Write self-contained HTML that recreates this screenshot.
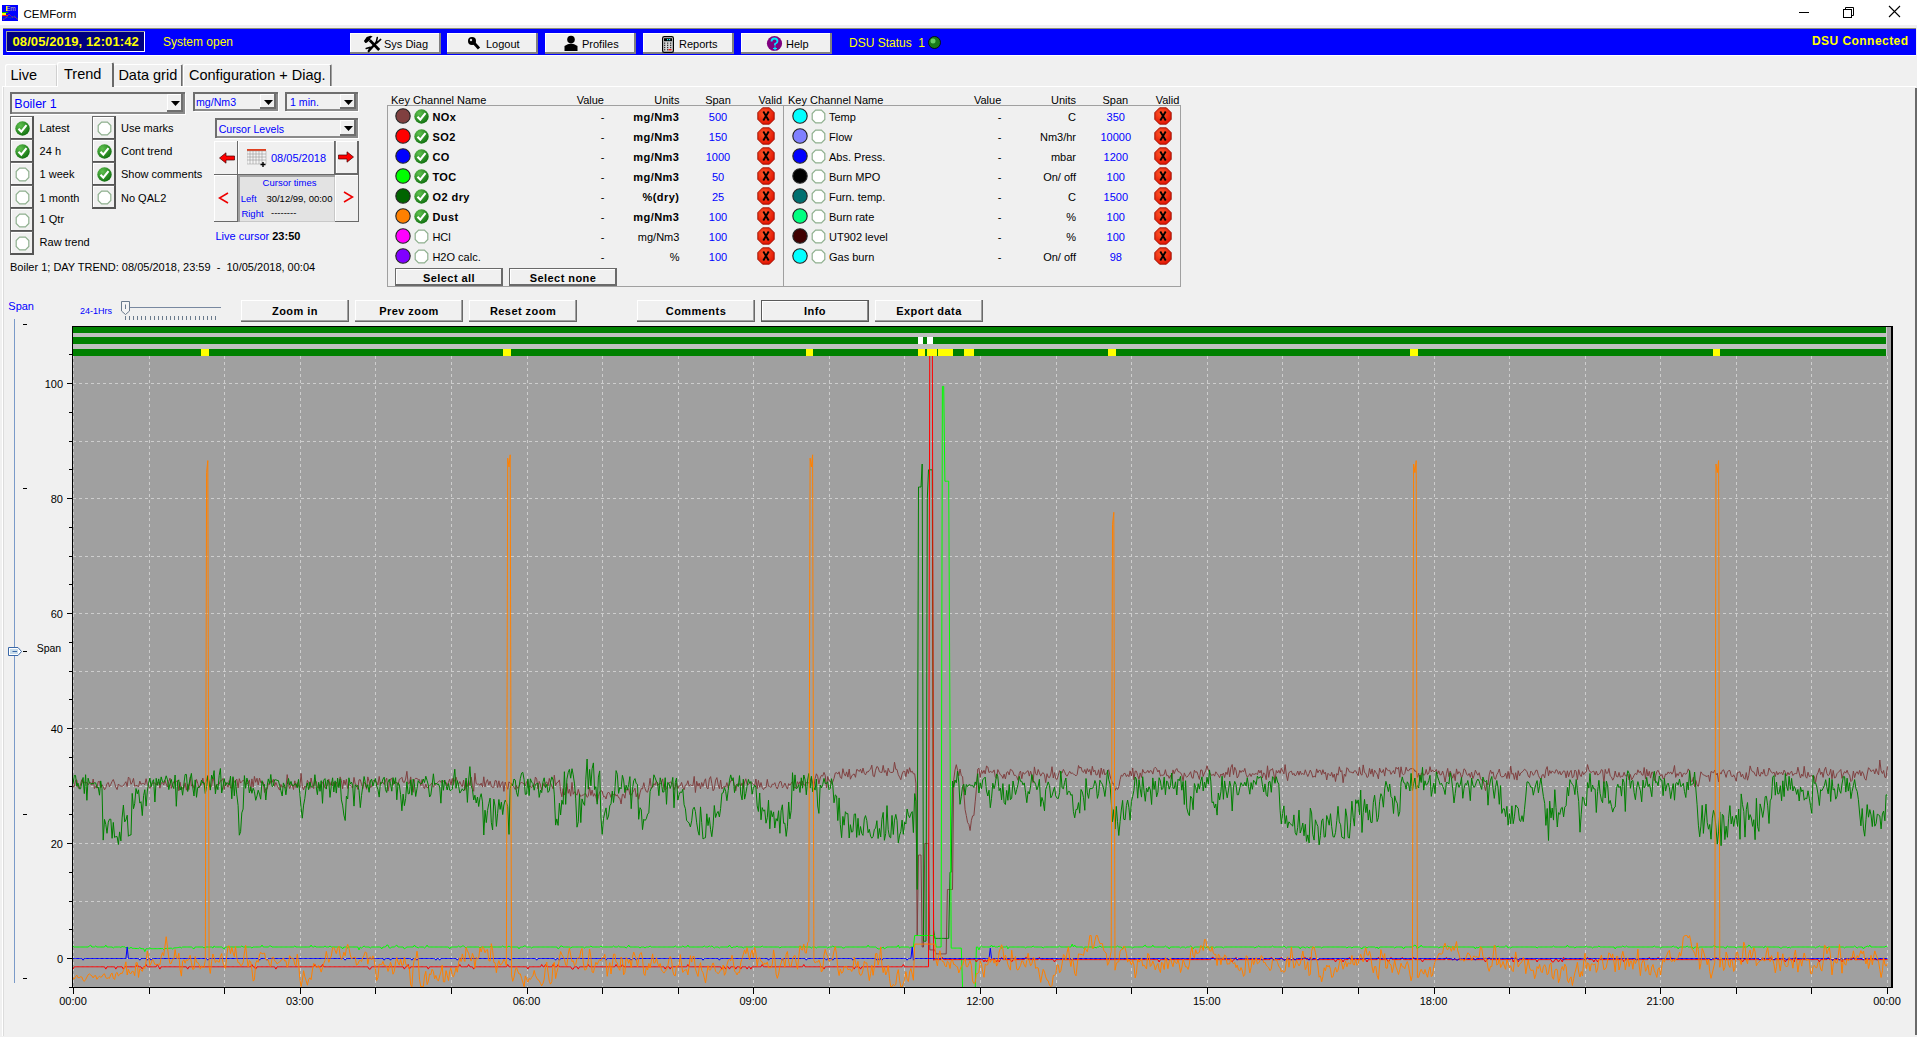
<!DOCTYPE html><html><head><meta charset="utf-8"><style>
html,body{margin:0;padding:0;}
body{width:1917px;height:1037px;overflow:hidden;position:relative;background:#f0f0f0;font-family:"Liberation Sans", sans-serif;}
body>div{position:absolute;}
.t{white-space:nowrap;line-height:1;}
svg{display:block;}
</style></head><body>
<div style="left:0px;top:0px;width:1917px;height:25px;background:#fff;"></div><svg style="position:absolute;left:2px;top:5px" width="16" height="16" viewBox="0 0 16 16">
<rect x="0" y="0" width="16" height="16" fill="#0000ff"/>
<text x="4" y="6" font-size="6.5" font-family="Liberation Sans" fill="#c8c0a0">Em</text><rect x="4" y="1" width="1.2" height="5" fill="#ffff00"/>
<rect x="0" y="7" width="6" height="1" fill="#00c000"/><rect x="0" y="8" width="4" height="2" fill="#ffff00"/><rect x="0" y="10" width="6" height="1.2" fill="#ff2020"/>
<path d="M1 15 L4 13 L7 9 L10 12 L13 12 L16 15" stroke="#d02060" stroke-width="0.9" fill="none" stroke-dasharray="1.2,0.6"/>
<path d="M1 14 L5 12 L9 13 L13 11 L16 14" stroke="#20a040" stroke-width="0.8" fill="none" stroke-dasharray="1,1"/>
</svg><div class="t" style="left:23.5px;top:8.18px;font-size:11.6px;color:#000;">CEMForm</div><div style="left:1799px;top:12px;width:10px;height:1px;background:#000;"></div><svg style="position:absolute;left:1840px;top:4px" width="18" height="16" viewBox="0 0 18 16">
<rect x="3.5" y="5.5" width="8" height="8" fill="none" stroke="#000"/>
<path d="M5.5 5.5 V3.5 H13.5 V11.5 H11.5" fill="none" stroke="#000"/></svg><svg style="position:absolute;left:1886px;top:4px" width="18" height="16" viewBox="0 0 18 16">
<path d="M3 2 L14 13 M14 2 L3 13" stroke="#000" stroke-width="1.1"/></svg><div style="left:3px;top:28px;width:1913px;height:27px;background:#0000ff;box-shadow:inset 0 1px #8a8a7a;"></div><div style="left:3px;top:55px;width:1913px;height:1px;background:#fff;"></div><div style="left:6px;top:31px;width:139px;height:21px;background:#000080;box-shadow:inset 1px 1px #a0a0a0, inset -1px -1px #fff;"></div><div class="t" style="left:12.5px;top:34.80px;font-size:13px;color:#ffff00;font-weight:bold;letter-spacing:0.45px;letter-spacing:0.1px;">08/05/2019, 12:01:42</div><div class="t" style="left:163px;top:35.84px;font-size:12px;color:#ffff00;">System open</div><div style="left:350px;top:33px;width:91px;height:21px;background:#f0f0f0;box-shadow:inset -2px -2px #808080, inset 1px 1px #fff;"></div><div style="left:447px;top:33px;width:91px;height:21px;background:#f0f0f0;box-shadow:inset -2px -2px #808080, inset 1px 1px #fff;"></div><div style="left:545px;top:33px;width:91px;height:21px;background:#f0f0f0;box-shadow:inset -2px -2px #808080, inset 1px 1px #fff;"></div><div style="left:643px;top:33px;width:91px;height:21px;background:#f0f0f0;box-shadow:inset -2px -2px #808080, inset 1px 1px #fff;"></div><div style="left:741px;top:33px;width:91px;height:21px;background:#f0f0f0;box-shadow:inset -2px -2px #808080, inset 1px 1px #fff;"></div><div class="t" style="left:384px;top:38.69px;font-size:11px;color:#000;">Sys Diag</div><div class="t" style="left:486px;top:38.69px;font-size:11px;color:#000;">Logout</div><div class="t" style="left:582px;top:38.69px;font-size:11px;color:#000;">Profiles</div><div class="t" style="left:679px;top:38.69px;font-size:11px;color:#000;">Reports</div><div class="t" style="left:786px;top:38.69px;font-size:11px;color:#000;">Help</div><svg style="position:absolute;left:360px;top:33px" width="25" height="21" viewBox="0 0 25 21">
<path d="M3.9 8.1 L6.7 4.1 L10.5 2.8 L12.6 3.4 L10.4 5.3 L10.3 6.8 L6.7 9.7 L5.3 9.9 Z" fill="#000"/>
<path d="M9.8 7.3 L19.2 16.9" stroke="#000" stroke-width="2.8"/>
<path d="M8.4 18.2 L17.6 8.2" stroke="#000" stroke-width="2.4"/>
<path d="M16.3 9.2 L17.3 4.5 M17.2 9.6 L20.7 6.4 M6.2 15.5 L10.2 14.2 M8.4 18.6 L10.8 14.6" stroke="#000" stroke-width="1.5" stroke-linecap="round"/>
</svg><svg style="position:absolute;left:467px;top:36px" width="14" height="15" viewBox="0 0 14 15">
<circle cx="5" cy="5" r="4" fill="#000"/><circle cx="4" cy="4" r="1.2" fill="#ddd"/>
<path d="M7 7 L12 12.5" stroke="#000" stroke-width="3"/></svg><svg style="position:absolute;left:564px;top:35px" width="14" height="16" viewBox="0 0 14 16">
<circle cx="7" cy="4.5" r="3.8" fill="#000"/><path d="M0.5 16 V11 Q7 6 13.5 11 V16 Z" fill="#000"/></svg><svg style="position:absolute;left:662px;top:36px" width="12" height="17" viewBox="0 0 12 17">
<rect x="0.6" y="0.6" width="10.8" height="15.8" rx="1.6" fill="#d8d8d8" stroke="#000" stroke-width="1.2"/>
<rect x="2" y="2.2" width="8" height="3" fill="#000"/><rect x="5" y="3" width="1.2" height="1.2" fill="#0ff"/><rect x="7" y="3" width="1.2" height="1.2" fill="#0ff"/>
<g fill="#333"><rect x="2" y="6.5" width="1.3" height="1.3"/><rect x="5" y="6.5" width="1.3" height="1.3"/><rect x="8" y="6.5" width="1.3" height="1.3"/>
<rect x="2" y="8.7" width="1.3" height="1.3"/><rect x="5" y="8.7" width="1.3" height="1.3"/><rect x="8" y="8.7" width="1.3" height="1.3"/>
<rect x="2" y="10.9" width="1.3" height="1.3"/><rect x="5" y="10.9" width="1.3" height="1.3"/><rect x="8" y="10.9" width="1.3" height="1.3"/>
<rect x="2" y="13.1" width="1.3" height="1.3"/><rect x="5" y="13.1" width="1.3" height="1.3"/></g><rect x="6.5" y="13.1" width="3" height="1.3" fill="#e00"/></svg><svg style="position:absolute;left:766px;top:35px" width="17" height="17" viewBox="0 0 17 17">
<circle cx="8.5" cy="8.5" r="7.6" fill="#800080"/>
<path d="M5.5 6.5 Q5.5 3.5 8.5 3.5 Q11.5 3.5 11.5 6.2 Q11.5 8 9 9 V10.5" stroke="#00e8ff" stroke-width="1.8" fill="none"/>
<path d="M9 11.5 V15.5 M7 13.5 H11" stroke="#00e8ff" stroke-width="1.2"/></svg><div class="t" style="left:849px;top:36.84px;font-size:12px;color:#ffff00;">DSU Status &nbsp;1</div><svg style="position:absolute;left:928px;top:36px" width="13" height="13" viewBox="0 0 13 13">
<circle cx="6.5" cy="6.5" r="6" fill="#1a7a1a" stroke="#000" stroke-width="0.8"/><circle cx="5" cy="5" r="2.5" fill="#6c6"/></svg><div class="t" style="right:8.5px;text-align:right;top:35.34px;font-size:12px;color:#ffff00;font-weight:bold;letter-spacing:0.45px;">DSU Connected</div><div style="left:2px;top:86px;width:1914px;height:950px;background:#f0f0f0;box-shadow:inset 1px 1px #fff, inset 2px 0 #dcdcdc;"></div><div style="left:5px;top:64px;width:52px;height:22px;background:#f0f0f0;box-shadow:inset 1px 1px #fff, inset -1px 0 #d0d0d0;border-radius:2px 2px 0 0;"></div><div class="t" style="left:10.4px;top:68.33px;font-size:14.5px;color:#000;">Live</div><div style="left:113px;top:64px;width:70px;height:22px;background:#f0f0f0;box-shadow:inset 1px 1px #fff, inset -1px 0 #a0a0a0, inset -2px 0 #696969;border-radius:2px 2px 0 0;"></div><div class="t" style="left:118.4px;top:68.33px;font-size:14.5px;color:#000;">Data grid</div><div style="left:183px;top:64px;width:149px;height:22px;background:#f0f0f0;box-shadow:inset 1px 1px #fff, inset -1px 0 #a0a0a0, inset -2px 0 #696969;border-radius:2px 2px 0 0;"></div><div class="t" style="left:189px;top:68.33px;font-size:14.5px;color:#000;">Configuration + Diag.</div><div style="left:57px;top:62px;width:57px;height:25px;background:#f0f0f0;box-shadow:inset 1px 1px #fff, inset -2px 0 #696969;border-radius:2px 2px 0 0;"></div><div class="t" style="left:64px;top:66.53px;font-size:14.5px;color:#000;">Trend</div><div style="left:10px;top:92px;width:175px;height:22px;background:#f0f0f0;box-shadow:inset 2px 2px #6e6e6e, inset -2px -2px #8a8a8a, 1px 1px #fff;"></div><div style="left:167px;top:94px;width:16px;height:18px;background:#f0f0f0;box-shadow:inset -2px -2px #6e6e6e, inset 1px 1px #fff;"></div><svg style="position:absolute;left:170.5px;top:101.0px" width="9" height="5"><path d="M0 0 H9 L4.5 5 Z" fill="#000"/></svg><div class="t" style="left:14.3px;top:97.62px;font-size:12.5px;color:#0000ff;">Boiler 1</div><div style="left:193px;top:92px;width:85px;height:19px;background:#f0f0f0;box-shadow:inset 2px 2px #6e6e6e, inset -2px -2px #8a8a8a, 1px 1px #fff;"></div><div style="left:260px;top:94px;width:16px;height:15px;background:#f0f0f0;box-shadow:inset -2px -2px #6e6e6e, inset 1px 1px #fff;"></div><svg style="position:absolute;left:263.5px;top:99.5px" width="9" height="5"><path d="M0 0 H9 L4.5 5 Z" fill="#000"/></svg><div class="t" style="left:196px;top:96.83px;font-size:10.6px;color:#0000ff;">mg/Nm3</div><div style="left:285px;top:92px;width:73px;height:19px;background:#f0f0f0;box-shadow:inset 2px 2px #6e6e6e, inset -2px -2px #8a8a8a, 1px 1px #fff;"></div><div style="left:340px;top:94px;width:16px;height:15px;background:#f0f0f0;box-shadow:inset -2px -2px #6e6e6e, inset 1px 1px #fff;"></div><svg style="position:absolute;left:343.5px;top:99.5px" width="9" height="5"><path d="M0 0 H9 L4.5 5 Z" fill="#000"/></svg><div class="t" style="left:290px;top:96.83px;font-size:10.6px;color:#0000ff;">1 min.</div><div style="left:215px;top:118px;width:143px;height:20px;background:#f0f0f0;box-shadow:inset 2px 2px #6e6e6e, inset -2px -2px #8a8a8a, 1px 1px #fff;"></div><div style="left:340px;top:120px;width:16px;height:16px;background:#f0f0f0;box-shadow:inset -2px -2px #6e6e6e, inset 1px 1px #fff;"></div><svg style="position:absolute;left:343.5px;top:126.0px" width="9" height="5"><path d="M0 0 H9 L4.5 5 Z" fill="#000"/></svg><div class="t" style="left:218.7px;top:123.83px;font-size:10.6px;color:#0000ff;">Cursor Levels</div><div style="left:10px;top:116px;width:24px;height:24px;box-sizing:border-box;border-top:1px solid #6a6a6a;border-left:1px solid #6a6a6a;border-right:2px solid #555;border-bottom:2px solid #555;box-shadow:inset 1px 1px #fff;"></div><div style="left:14.5px;top:120.5px;width:15px;height:15px"><svg width="15" height="15" viewBox="0 0 15 15"><defs><radialGradient id="g1" cx="0.35" cy="0.3" r="0.8"><stop offset="0" stop-color="#5fc04f"/><stop offset="1" stop-color="#0a6a0a"/></radialGradient></defs><circle cx="7.5" cy="7.5" r="7.2" fill="url(#g1)"/><path d="M3.5 7.8 L6.3 10.6 L11.5 4.2" stroke="#fff" stroke-width="2.1" fill="none"/></svg></div><div class="t" style="left:39.6px;top:122.69px;font-size:11px;color:#000;">Latest</div><div style="left:10px;top:139px;width:24px;height:24px;box-sizing:border-box;border-top:1px solid #6a6a6a;border-left:1px solid #6a6a6a;border-right:2px solid #555;border-bottom:2px solid #555;box-shadow:inset 1px 1px #fff;"></div><div style="left:14.5px;top:143.5px;width:15px;height:15px"><svg width="15" height="15" viewBox="0 0 15 15"><defs><radialGradient id="g2" cx="0.35" cy="0.3" r="0.8"><stop offset="0" stop-color="#5fc04f"/><stop offset="1" stop-color="#0a6a0a"/></radialGradient></defs><circle cx="7.5" cy="7.5" r="7.2" fill="url(#g2)"/><path d="M3.5 7.8 L6.3 10.6 L11.5 4.2" stroke="#fff" stroke-width="2.1" fill="none"/></svg></div><div class="t" style="left:39.6px;top:146.49px;font-size:11px;color:#000;">24 h</div><div style="left:10px;top:162px;width:24px;height:24px;box-sizing:border-box;border-top:1px solid #6a6a6a;border-left:1px solid #6a6a6a;border-right:2px solid #555;border-bottom:2px solid #555;box-shadow:inset 1px 1px #fff;"></div><div style="left:14.5px;top:166.5px;width:15px;height:15px"><svg width="15" height="15" viewBox="0 0 15 15"><path d="M4.6 1.2 H10.4 L13.8 4.6 V10.4 L10.4 13.8 H4.6 L1.2 10.4 V4.6 Z" fill="#fff" stroke="#8fb08f" stroke-width="1.2"/></svg></div><div class="t" style="left:39.6px;top:169.19px;font-size:11px;color:#000;">1 week</div><div style="left:10px;top:185px;width:24px;height:24px;box-sizing:border-box;border-top:1px solid #6a6a6a;border-left:1px solid #6a6a6a;border-right:2px solid #555;border-bottom:2px solid #555;box-shadow:inset 1px 1px #fff;"></div><div style="left:14.5px;top:189.5px;width:15px;height:15px"><svg width="15" height="15" viewBox="0 0 15 15"><path d="M4.6 1.2 H10.4 L13.8 4.6 V10.4 L10.4 13.8 H4.6 L1.2 10.4 V4.6 Z" fill="#fff" stroke="#8fb08f" stroke-width="1.2"/></svg></div><div class="t" style="left:39.6px;top:192.69px;font-size:11px;color:#000;">1 month</div><div style="left:10px;top:208px;width:24px;height:24px;box-sizing:border-box;border-top:1px solid #6a6a6a;border-left:1px solid #6a6a6a;border-right:2px solid #555;border-bottom:2px solid #555;box-shadow:inset 1px 1px #fff;"></div><div style="left:14.5px;top:212.5px;width:15px;height:15px"><svg width="15" height="15" viewBox="0 0 15 15"><path d="M4.6 1.2 H10.4 L13.8 4.6 V10.4 L10.4 13.8 H4.6 L1.2 10.4 V4.6 Z" fill="#fff" stroke="#8fb08f" stroke-width="1.2"/></svg></div><div class="t" style="left:39.6px;top:213.69px;font-size:11px;color:#000;">1 Qtr</div><div style="left:10px;top:231px;width:24px;height:24px;box-sizing:border-box;border-top:1px solid #6a6a6a;border-left:1px solid #6a6a6a;border-right:2px solid #555;border-bottom:2px solid #555;box-shadow:inset 1px 1px #fff;"></div><div style="left:14.5px;top:235.5px;width:15px;height:15px"><svg width="15" height="15" viewBox="0 0 15 15"><path d="M4.6 1.2 H10.4 L13.8 4.6 V10.4 L10.4 13.8 H4.6 L1.2 10.4 V4.6 Z" fill="#fff" stroke="#8fb08f" stroke-width="1.2"/></svg></div><div class="t" style="left:39.6px;top:237.39px;font-size:11px;color:#000;">Raw trend</div><div style="left:92px;top:116px;width:24px;height:24px;box-sizing:border-box;border-top:1px solid #6a6a6a;border-left:1px solid #6a6a6a;border-right:2px solid #555;border-bottom:2px solid #555;box-shadow:inset 1px 1px #fff;"></div><div style="left:96.5px;top:120.5px;width:15px;height:15px"><svg width="15" height="15" viewBox="0 0 15 15"><path d="M4.6 1.2 H10.4 L13.8 4.6 V10.4 L10.4 13.8 H4.6 L1.2 10.4 V4.6 Z" fill="#fff" stroke="#8fb08f" stroke-width="1.2"/></svg></div><div class="t" style="left:121px;top:122.69px;font-size:11px;color:#000;">Use marks</div><div style="left:92px;top:139px;width:24px;height:24px;box-sizing:border-box;border-top:1px solid #6a6a6a;border-left:1px solid #6a6a6a;border-right:2px solid #555;border-bottom:2px solid #555;box-shadow:inset 1px 1px #fff;"></div><div style="left:96.5px;top:143.5px;width:15px;height:15px"><svg width="15" height="15" viewBox="0 0 15 15"><defs><radialGradient id="g8" cx="0.35" cy="0.3" r="0.8"><stop offset="0" stop-color="#5fc04f"/><stop offset="1" stop-color="#0a6a0a"/></radialGradient></defs><circle cx="7.5" cy="7.5" r="7.2" fill="url(#g8)"/><path d="M3.5 7.8 L6.3 10.6 L11.5 4.2" stroke="#fff" stroke-width="2.1" fill="none"/></svg></div><div class="t" style="left:121px;top:146.49px;font-size:11px;color:#000;">Cont trend</div><div style="left:92px;top:162px;width:24px;height:24px;box-sizing:border-box;border-top:1px solid #6a6a6a;border-left:1px solid #6a6a6a;border-right:2px solid #555;border-bottom:2px solid #555;box-shadow:inset 1px 1px #fff;"></div><div style="left:96.5px;top:166.5px;width:15px;height:15px"><svg width="15" height="15" viewBox="0 0 15 15"><defs><radialGradient id="g9" cx="0.35" cy="0.3" r="0.8"><stop offset="0" stop-color="#5fc04f"/><stop offset="1" stop-color="#0a6a0a"/></radialGradient></defs><circle cx="7.5" cy="7.5" r="7.2" fill="url(#g9)"/><path d="M3.5 7.8 L6.3 10.6 L11.5 4.2" stroke="#fff" stroke-width="2.1" fill="none"/></svg></div><div class="t" style="left:121px;top:169.19px;font-size:11px;color:#000;">Show comments</div><div style="left:92px;top:185px;width:24px;height:24px;box-sizing:border-box;border-top:1px solid #6a6a6a;border-left:1px solid #6a6a6a;border-right:2px solid #555;border-bottom:2px solid #555;box-shadow:inset 1px 1px #fff;"></div><div style="left:96.5px;top:189.5px;width:15px;height:15px"><svg width="15" height="15" viewBox="0 0 15 15"><path d="M4.6 1.2 H10.4 L13.8 4.6 V10.4 L10.4 13.8 H4.6 L1.2 10.4 V4.6 Z" fill="#fff" stroke="#8fb08f" stroke-width="1.2"/></svg></div><div class="t" style="left:121px;top:192.69px;font-size:11px;color:#000;">No QAL2</div><div style="left:214px;top:141px;width:24px;height:34px;background:#f0f0f0;box-shadow:inset -1px -1px #696969, inset 1px 1px #fff;"></div><div style="left:238px;top:141px;width:97px;height:34px;background:#f0f0f0;box-shadow:inset -1px -1px #696969, inset 1px 1px #fff;"></div><div style="left:335px;top:141px;width:24px;height:34px;background:#f0f0f0;box-shadow:inset -2px -2px #696969, inset 1px 0 #808080, inset 2px 1px #fff;"></div><div style="left:214px;top:175px;width:24px;height:47px;background:#f0f0f0;box-shadow:inset -1px -1px #696969, inset 1px 1px #fff;"></div><div style="left:238px;top:175px;width:97px;height:47px;background:#e3e3e3;box-shadow:inset 2px 2px #a0a0a0, inset -1px -1px #c8c8c8;"></div><div style="left:335px;top:175px;width:24px;height:47px;background:#f0f0f0;box-shadow:inset -1px -1px #696969, inset 1px 1px #fff;"></div><svg style="position:absolute;left:219px;top:152px" width="16" height="12" viewBox="0 0 16 12"><path d="M0.5 6 L7 0.8 V4 H15.5 V8 H7 V11.2 Z" fill="#f00" stroke="#400" stroke-width="0.7"/></svg><svg style="position:absolute;left:338px;top:151px" width="16" height="12" viewBox="0 0 16 12"><path d="M15.5 6 L9 0.8 V4 H0.5 V8 H9 V11.2 Z" fill="#f00" stroke="#400" stroke-width="0.7"/></svg><svg style="position:absolute;left:218px;top:192px" width="11" height="12" viewBox="0 0 11 12"><path d="M10 1 L1.5 6 L10 11" fill="none" stroke="#e00" stroke-width="1.6"/></svg><svg style="position:absolute;left:343px;top:191px" width="11" height="12" viewBox="0 0 11 12"><path d="M1 1 L9.5 6 L1 11" fill="none" stroke="#e00" stroke-width="1.6"/></svg><svg style="position:absolute;left:247px;top:149px" width="20" height="18" viewBox="0 0 20 18">
<rect x="0" y="0" width="19" height="2" fill="#e04020"/>
<rect x="0" y="2" width="19" height="13" fill="#f4f4f4" stroke="#999" stroke-width="0.5"/>
<g stroke="#999" stroke-width="0.6"><path d="M0 5H19M0 8H19M0 11H19M3 2V15M6 2V15M9 2V15M12 2V15M15 2V15"/></g>
<path d="M16 13 V18 M13.5 15.5 H18.5" stroke="#000" stroke-width="1.4"/></svg><div class="t" style="left:271px;top:153.19px;font-size:11px;color:#0000ff;">08/05/2018</div><div class="t" style="left:-10.5px;width:600px;text-align:center;top:177.96px;font-size:9.5px;color:#0000ff;">Cursor times</div><div class="t" style="left:240.8px;top:193.96px;font-size:9.5px;color:#0000ff;">Left</div><div class="t" style="left:266.4px;top:193.96px;font-size:9.5px;color:#000;">30/12/99, 00:00</div><div class="t" style="left:241.4px;top:208.96px;font-size:9.5px;color:#0000ff;">Right</div><div class="t" style="left:271px;top:207.96px;font-size:9.5px;color:#000;">--------</div><div class="t" style="left:215.4px;top:231.09px;font-size:11px;color:#0000ff;">Live cursor <b style="color:#000">23:50</b></div><div class="t" style="left:10px;top:262.39px;font-size:11px;color:#000;">Boiler 1; DAY TREND: 08/05/2018, 23:59 &nbsp;- &nbsp;10/05/2018, 00:04</div><div style="left:387px;top:105px;width:397px;height:182px;box-shadow:inset 1px 1px #a0a0a0, inset -1px -1px #a0a0a0;"></div><div style="left:783px;top:105px;width:398px;height:182px;box-shadow:inset 1px 1px #a0a0a0, inset -1px -1px #a0a0a0;"></div><div class="t" style="left:391px;top:94.69px;font-size:11px;color:#000;">Key Channel Name</div><div class="t" style="right:1313px;text-align:right;top:94.69px;font-size:11px;color:#000;">Value</div><div class="t" style="right:1237.6px;text-align:right;top:94.69px;font-size:11px;color:#000;">Units</div><div class="t" style="left:418px;width:600px;text-align:center;top:94.69px;font-size:11px;color:#000;">Span</div><div class="t" style="left:758.5px;top:94.69px;font-size:11px;color:#000;">Valid</div><svg style="position:absolute;left:395.3px;top:108px" width="16" height="16"><circle cx="8" cy="8" r="7.2" fill="#804040" stroke="#222" stroke-width="1.1"/></svg><div style="left:414px;top:108.5px;width:15px;height:15px"><svg width="15" height="15" viewBox="0 0 15 15"><defs><radialGradient id="g11" cx="0.35" cy="0.3" r="0.8"><stop offset="0" stop-color="#5fc04f"/><stop offset="1" stop-color="#0a6a0a"/></radialGradient></defs><circle cx="7.5" cy="7.5" r="7.2" fill="url(#g11)"/><path d="M3.5 7.8 L6.3 10.6 L11.5 4.2" stroke="#fff" stroke-width="2.1" fill="none"/></svg></div><div class="t" style="left:432.4px;top:111.69px;font-size:11px;color:#000;font-weight:bold;letter-spacing:0.45px;">NOx</div><div class="t" style="left:302.5px;width:600px;text-align:center;top:111.69px;font-size:11px;color:#000;">-</div><div class="t" style="right:1237.6px;text-align:right;top:111.69px;font-size:11px;color:#000;font-weight:bold;letter-spacing:0.45px;">mg/Nm3</div><div class="t" style="left:418px;width:600px;text-align:center;top:111.69px;font-size:11px;color:#0000ff;">500</div><div style="left:757px;top:107px;width:18px;height:18px"><svg width="18" height="18" viewBox="0 0 18 18"><defs><radialGradient id="rv" cx="0.4" cy="0.35" r="0.7"><stop offset="0" stop-color="#ff5a2a"/><stop offset="1" stop-color="#e01000"/></radialGradient></defs><path d="M5.6 0.8 H12.4 L17.2 5.6 V12.4 L12.4 17.2 H5.6 L0.8 12.4 V5.6 Z" fill="url(#rv)" stroke="#9a1000" stroke-width="0.9"/><path d="M6.3 4.5 L11.7 13.5 M11.7 4.5 L6.3 13.5" stroke="#000" stroke-width="1.9"/></svg></div><svg style="position:absolute;left:395.3px;top:128px" width="16" height="16"><circle cx="8" cy="8" r="7.2" fill="#ff0000" stroke="#222" stroke-width="1.1"/></svg><div style="left:414px;top:128.5px;width:15px;height:15px"><svg width="15" height="15" viewBox="0 0 15 15"><defs><radialGradient id="g12" cx="0.35" cy="0.3" r="0.8"><stop offset="0" stop-color="#5fc04f"/><stop offset="1" stop-color="#0a6a0a"/></radialGradient></defs><circle cx="7.5" cy="7.5" r="7.2" fill="url(#g12)"/><path d="M3.5 7.8 L6.3 10.6 L11.5 4.2" stroke="#fff" stroke-width="2.1" fill="none"/></svg></div><div class="t" style="left:432.4px;top:131.69px;font-size:11px;color:#000;font-weight:bold;letter-spacing:0.45px;">SO2</div><div class="t" style="left:302.5px;width:600px;text-align:center;top:131.69px;font-size:11px;color:#000;">-</div><div class="t" style="right:1237.6px;text-align:right;top:131.69px;font-size:11px;color:#000;font-weight:bold;letter-spacing:0.45px;">mg/Nm3</div><div class="t" style="left:418px;width:600px;text-align:center;top:131.69px;font-size:11px;color:#0000ff;">150</div><div style="left:757px;top:127px;width:18px;height:18px"><svg width="18" height="18" viewBox="0 0 18 18"><defs><radialGradient id="rv" cx="0.4" cy="0.35" r="0.7"><stop offset="0" stop-color="#ff5a2a"/><stop offset="1" stop-color="#e01000"/></radialGradient></defs><path d="M5.6 0.8 H12.4 L17.2 5.6 V12.4 L12.4 17.2 H5.6 L0.8 12.4 V5.6 Z" fill="url(#rv)" stroke="#9a1000" stroke-width="0.9"/><path d="M6.3 4.5 L11.7 13.5 M11.7 4.5 L6.3 13.5" stroke="#000" stroke-width="1.9"/></svg></div><svg style="position:absolute;left:395.3px;top:148px" width="16" height="16"><circle cx="8" cy="8" r="7.2" fill="#0000ff" stroke="#222" stroke-width="1.1"/></svg><div style="left:414px;top:148.5px;width:15px;height:15px"><svg width="15" height="15" viewBox="0 0 15 15"><defs><radialGradient id="g13" cx="0.35" cy="0.3" r="0.8"><stop offset="0" stop-color="#5fc04f"/><stop offset="1" stop-color="#0a6a0a"/></radialGradient></defs><circle cx="7.5" cy="7.5" r="7.2" fill="url(#g13)"/><path d="M3.5 7.8 L6.3 10.6 L11.5 4.2" stroke="#fff" stroke-width="2.1" fill="none"/></svg></div><div class="t" style="left:432.4px;top:151.69px;font-size:11px;color:#000;font-weight:bold;letter-spacing:0.45px;">CO</div><div class="t" style="left:302.5px;width:600px;text-align:center;top:151.69px;font-size:11px;color:#000;">-</div><div class="t" style="right:1237.6px;text-align:right;top:151.69px;font-size:11px;color:#000;font-weight:bold;letter-spacing:0.45px;">mg/Nm3</div><div class="t" style="left:418px;width:600px;text-align:center;top:151.69px;font-size:11px;color:#0000ff;">1000</div><div style="left:757px;top:147px;width:18px;height:18px"><svg width="18" height="18" viewBox="0 0 18 18"><defs><radialGradient id="rv" cx="0.4" cy="0.35" r="0.7"><stop offset="0" stop-color="#ff5a2a"/><stop offset="1" stop-color="#e01000"/></radialGradient></defs><path d="M5.6 0.8 H12.4 L17.2 5.6 V12.4 L12.4 17.2 H5.6 L0.8 12.4 V5.6 Z" fill="url(#rv)" stroke="#9a1000" stroke-width="0.9"/><path d="M6.3 4.5 L11.7 13.5 M11.7 4.5 L6.3 13.5" stroke="#000" stroke-width="1.9"/></svg></div><svg style="position:absolute;left:395.3px;top:168px" width="16" height="16"><circle cx="8" cy="8" r="7.2" fill="#00ff00" stroke="#222" stroke-width="1.1"/></svg><div style="left:414px;top:168.5px;width:15px;height:15px"><svg width="15" height="15" viewBox="0 0 15 15"><defs><radialGradient id="g14" cx="0.35" cy="0.3" r="0.8"><stop offset="0" stop-color="#5fc04f"/><stop offset="1" stop-color="#0a6a0a"/></radialGradient></defs><circle cx="7.5" cy="7.5" r="7.2" fill="url(#g14)"/><path d="M3.5 7.8 L6.3 10.6 L11.5 4.2" stroke="#fff" stroke-width="2.1" fill="none"/></svg></div><div class="t" style="left:432.4px;top:171.69px;font-size:11px;color:#000;font-weight:bold;letter-spacing:0.45px;">TOC</div><div class="t" style="left:302.5px;width:600px;text-align:center;top:171.69px;font-size:11px;color:#000;">-</div><div class="t" style="right:1237.6px;text-align:right;top:171.69px;font-size:11px;color:#000;font-weight:bold;letter-spacing:0.45px;">mg/Nm3</div><div class="t" style="left:418px;width:600px;text-align:center;top:171.69px;font-size:11px;color:#0000ff;">50</div><div style="left:757px;top:167px;width:18px;height:18px"><svg width="18" height="18" viewBox="0 0 18 18"><defs><radialGradient id="rv" cx="0.4" cy="0.35" r="0.7"><stop offset="0" stop-color="#ff5a2a"/><stop offset="1" stop-color="#e01000"/></radialGradient></defs><path d="M5.6 0.8 H12.4 L17.2 5.6 V12.4 L12.4 17.2 H5.6 L0.8 12.4 V5.6 Z" fill="url(#rv)" stroke="#9a1000" stroke-width="0.9"/><path d="M6.3 4.5 L11.7 13.5 M11.7 4.5 L6.3 13.5" stroke="#000" stroke-width="1.9"/></svg></div><svg style="position:absolute;left:395.3px;top:188px" width="16" height="16"><circle cx="8" cy="8" r="7.2" fill="#006400" stroke="#222" stroke-width="1.1"/></svg><div style="left:414px;top:188.5px;width:15px;height:15px"><svg width="15" height="15" viewBox="0 0 15 15"><defs><radialGradient id="g15" cx="0.35" cy="0.3" r="0.8"><stop offset="0" stop-color="#5fc04f"/><stop offset="1" stop-color="#0a6a0a"/></radialGradient></defs><circle cx="7.5" cy="7.5" r="7.2" fill="url(#g15)"/><path d="M3.5 7.8 L6.3 10.6 L11.5 4.2" stroke="#fff" stroke-width="2.1" fill="none"/></svg></div><div class="t" style="left:432.4px;top:191.69px;font-size:11px;color:#000;font-weight:bold;letter-spacing:0.45px;">O2 dry</div><div class="t" style="left:302.5px;width:600px;text-align:center;top:191.69px;font-size:11px;color:#000;">-</div><div class="t" style="right:1237.6px;text-align:right;top:191.69px;font-size:11px;color:#000;font-weight:bold;letter-spacing:0.45px;">%(dry)</div><div class="t" style="left:418px;width:600px;text-align:center;top:191.69px;font-size:11px;color:#0000ff;">25</div><div style="left:757px;top:187px;width:18px;height:18px"><svg width="18" height="18" viewBox="0 0 18 18"><defs><radialGradient id="rv" cx="0.4" cy="0.35" r="0.7"><stop offset="0" stop-color="#ff5a2a"/><stop offset="1" stop-color="#e01000"/></radialGradient></defs><path d="M5.6 0.8 H12.4 L17.2 5.6 V12.4 L12.4 17.2 H5.6 L0.8 12.4 V5.6 Z" fill="url(#rv)" stroke="#9a1000" stroke-width="0.9"/><path d="M6.3 4.5 L11.7 13.5 M11.7 4.5 L6.3 13.5" stroke="#000" stroke-width="1.9"/></svg></div><svg style="position:absolute;left:395.3px;top:208px" width="16" height="16"><circle cx="8" cy="8" r="7.2" fill="#ff8000" stroke="#222" stroke-width="1.1"/></svg><div style="left:414px;top:208.5px;width:15px;height:15px"><svg width="15" height="15" viewBox="0 0 15 15"><defs><radialGradient id="g16" cx="0.35" cy="0.3" r="0.8"><stop offset="0" stop-color="#5fc04f"/><stop offset="1" stop-color="#0a6a0a"/></radialGradient></defs><circle cx="7.5" cy="7.5" r="7.2" fill="url(#g16)"/><path d="M3.5 7.8 L6.3 10.6 L11.5 4.2" stroke="#fff" stroke-width="2.1" fill="none"/></svg></div><div class="t" style="left:432.4px;top:211.69px;font-size:11px;color:#000;font-weight:bold;letter-spacing:0.45px;">Dust</div><div class="t" style="left:302.5px;width:600px;text-align:center;top:211.69px;font-size:11px;color:#000;">-</div><div class="t" style="right:1237.6px;text-align:right;top:211.69px;font-size:11px;color:#000;font-weight:bold;letter-spacing:0.45px;">mg/Nm3</div><div class="t" style="left:418px;width:600px;text-align:center;top:211.69px;font-size:11px;color:#0000ff;">100</div><div style="left:757px;top:207px;width:18px;height:18px"><svg width="18" height="18" viewBox="0 0 18 18"><defs><radialGradient id="rv" cx="0.4" cy="0.35" r="0.7"><stop offset="0" stop-color="#ff5a2a"/><stop offset="1" stop-color="#e01000"/></radialGradient></defs><path d="M5.6 0.8 H12.4 L17.2 5.6 V12.4 L12.4 17.2 H5.6 L0.8 12.4 V5.6 Z" fill="url(#rv)" stroke="#9a1000" stroke-width="0.9"/><path d="M6.3 4.5 L11.7 13.5 M11.7 4.5 L6.3 13.5" stroke="#000" stroke-width="1.9"/></svg></div><svg style="position:absolute;left:395.3px;top:228px" width="16" height="16"><circle cx="8" cy="8" r="7.2" fill="#ff00ff" stroke="#222" stroke-width="1.1"/></svg><div style="left:414px;top:228.5px;width:15px;height:15px"><svg width="15" height="15" viewBox="0 0 15 15"><path d="M4.6 1.2 H10.4 L13.8 4.6 V10.4 L10.4 13.8 H4.6 L1.2 10.4 V4.6 Z" fill="#fff" stroke="#8fb08f" stroke-width="1.2"/></svg></div><div class="t" style="left:432.4px;top:231.69px;font-size:11px;color:#000;">HCl</div><div class="t" style="left:302.5px;width:600px;text-align:center;top:231.69px;font-size:11px;color:#000;">-</div><div class="t" style="right:1237.6px;text-align:right;top:231.69px;font-size:11px;color:#000;">mg/Nm3</div><div class="t" style="left:418px;width:600px;text-align:center;top:231.69px;font-size:11px;color:#0000ff;">100</div><div style="left:757px;top:227px;width:18px;height:18px"><svg width="18" height="18" viewBox="0 0 18 18"><defs><radialGradient id="rv" cx="0.4" cy="0.35" r="0.7"><stop offset="0" stop-color="#ff5a2a"/><stop offset="1" stop-color="#e01000"/></radialGradient></defs><path d="M5.6 0.8 H12.4 L17.2 5.6 V12.4 L12.4 17.2 H5.6 L0.8 12.4 V5.6 Z" fill="url(#rv)" stroke="#9a1000" stroke-width="0.9"/><path d="M6.3 4.5 L11.7 13.5 M11.7 4.5 L6.3 13.5" stroke="#000" stroke-width="1.9"/></svg></div><svg style="position:absolute;left:395.3px;top:248px" width="16" height="16"><circle cx="8" cy="8" r="7.2" fill="#8000ff" stroke="#222" stroke-width="1.1"/></svg><div style="left:414px;top:248.5px;width:15px;height:15px"><svg width="15" height="15" viewBox="0 0 15 15"><path d="M4.6 1.2 H10.4 L13.8 4.6 V10.4 L10.4 13.8 H4.6 L1.2 10.4 V4.6 Z" fill="#fff" stroke="#8fb08f" stroke-width="1.2"/></svg></div><div class="t" style="left:432.4px;top:251.69px;font-size:11px;color:#000;">H2O calc.</div><div class="t" style="left:302.5px;width:600px;text-align:center;top:251.69px;font-size:11px;color:#000;">-</div><div class="t" style="right:1237.6px;text-align:right;top:251.69px;font-size:11px;color:#000;">%</div><div class="t" style="left:418px;width:600px;text-align:center;top:251.69px;font-size:11px;color:#0000ff;">100</div><div style="left:757px;top:247px;width:18px;height:18px"><svg width="18" height="18" viewBox="0 0 18 18"><defs><radialGradient id="rv" cx="0.4" cy="0.35" r="0.7"><stop offset="0" stop-color="#ff5a2a"/><stop offset="1" stop-color="#e01000"/></radialGradient></defs><path d="M5.6 0.8 H12.4 L17.2 5.6 V12.4 L12.4 17.2 H5.6 L0.8 12.4 V5.6 Z" fill="url(#rv)" stroke="#9a1000" stroke-width="0.9"/><path d="M6.3 4.5 L11.7 13.5 M11.7 4.5 L6.3 13.5" stroke="#000" stroke-width="1.9"/></svg></div><div class="t" style="left:788px;top:94.69px;font-size:11px;color:#000;">Key Channel Name</div><div class="t" style="right:915.7px;text-align:right;top:94.69px;font-size:11px;color:#000;">Value</div><div class="t" style="right:841px;text-align:right;top:94.69px;font-size:11px;color:#000;">Units</div><div class="t" style="left:815.3px;width:600px;text-align:center;top:94.69px;font-size:11px;color:#000;">Span</div><div class="t" style="left:1155.7px;top:94.69px;font-size:11px;color:#000;">Valid</div><svg style="position:absolute;left:792.3px;top:108px" width="16" height="16"><circle cx="8" cy="8" r="7.2" fill="#00ffff" stroke="#222" stroke-width="1.1"/></svg><div style="left:811px;top:108.5px;width:15px;height:15px"><svg width="15" height="15" viewBox="0 0 15 15"><path d="M4.6 1.2 H10.4 L13.8 4.6 V10.4 L10.4 13.8 H4.6 L1.2 10.4 V4.6 Z" fill="#fff" stroke="#8fb08f" stroke-width="1.2"/></svg></div><div class="t" style="left:829px;top:111.69px;font-size:11px;color:#000;">Temp</div><div class="t" style="left:699.5px;width:600px;text-align:center;top:111.69px;font-size:11px;color:#000;">-</div><div class="t" style="right:841px;text-align:right;top:111.69px;font-size:11px;color:#000;">C</div><div class="t" style="left:815.8px;width:600px;text-align:center;top:111.69px;font-size:11px;color:#0000ff;">350</div><div style="left:1154px;top:107px;width:18px;height:18px"><svg width="18" height="18" viewBox="0 0 18 18"><defs><radialGradient id="rv" cx="0.4" cy="0.35" r="0.7"><stop offset="0" stop-color="#ff5a2a"/><stop offset="1" stop-color="#e01000"/></radialGradient></defs><path d="M5.6 0.8 H12.4 L17.2 5.6 V12.4 L12.4 17.2 H5.6 L0.8 12.4 V5.6 Z" fill="url(#rv)" stroke="#9a1000" stroke-width="0.9"/><path d="M6.3 4.5 L11.7 13.5 M11.7 4.5 L6.3 13.5" stroke="#000" stroke-width="1.9"/></svg></div><svg style="position:absolute;left:792.3px;top:128px" width="16" height="16"><circle cx="8" cy="8" r="7.2" fill="#8080ff" stroke="#222" stroke-width="1.1"/></svg><div style="left:811px;top:128.5px;width:15px;height:15px"><svg width="15" height="15" viewBox="0 0 15 15"><path d="M4.6 1.2 H10.4 L13.8 4.6 V10.4 L10.4 13.8 H4.6 L1.2 10.4 V4.6 Z" fill="#fff" stroke="#8fb08f" stroke-width="1.2"/></svg></div><div class="t" style="left:829px;top:131.69px;font-size:11px;color:#000;">Flow</div><div class="t" style="left:699.5px;width:600px;text-align:center;top:131.69px;font-size:11px;color:#000;">-</div><div class="t" style="right:841px;text-align:right;top:131.69px;font-size:11px;color:#000;">Nm3/hr</div><div class="t" style="left:815.8px;width:600px;text-align:center;top:131.69px;font-size:11px;color:#0000ff;">10000</div><div style="left:1154px;top:127px;width:18px;height:18px"><svg width="18" height="18" viewBox="0 0 18 18"><defs><radialGradient id="rv" cx="0.4" cy="0.35" r="0.7"><stop offset="0" stop-color="#ff5a2a"/><stop offset="1" stop-color="#e01000"/></radialGradient></defs><path d="M5.6 0.8 H12.4 L17.2 5.6 V12.4 L12.4 17.2 H5.6 L0.8 12.4 V5.6 Z" fill="url(#rv)" stroke="#9a1000" stroke-width="0.9"/><path d="M6.3 4.5 L11.7 13.5 M11.7 4.5 L6.3 13.5" stroke="#000" stroke-width="1.9"/></svg></div><svg style="position:absolute;left:792.3px;top:148px" width="16" height="16"><circle cx="8" cy="8" r="7.2" fill="#0000ff" stroke="#222" stroke-width="1.1"/></svg><div style="left:811px;top:148.5px;width:15px;height:15px"><svg width="15" height="15" viewBox="0 0 15 15"><path d="M4.6 1.2 H10.4 L13.8 4.6 V10.4 L10.4 13.8 H4.6 L1.2 10.4 V4.6 Z" fill="#fff" stroke="#8fb08f" stroke-width="1.2"/></svg></div><div class="t" style="left:829px;top:151.69px;font-size:11px;color:#000;">Abs. Press.</div><div class="t" style="left:699.5px;width:600px;text-align:center;top:151.69px;font-size:11px;color:#000;">-</div><div class="t" style="right:841px;text-align:right;top:151.69px;font-size:11px;color:#000;">mbar</div><div class="t" style="left:815.8px;width:600px;text-align:center;top:151.69px;font-size:11px;color:#0000ff;">1200</div><div style="left:1154px;top:147px;width:18px;height:18px"><svg width="18" height="18" viewBox="0 0 18 18"><defs><radialGradient id="rv" cx="0.4" cy="0.35" r="0.7"><stop offset="0" stop-color="#ff5a2a"/><stop offset="1" stop-color="#e01000"/></radialGradient></defs><path d="M5.6 0.8 H12.4 L17.2 5.6 V12.4 L12.4 17.2 H5.6 L0.8 12.4 V5.6 Z" fill="url(#rv)" stroke="#9a1000" stroke-width="0.9"/><path d="M6.3 4.5 L11.7 13.5 M11.7 4.5 L6.3 13.5" stroke="#000" stroke-width="1.9"/></svg></div><svg style="position:absolute;left:792.3px;top:168px" width="16" height="16"><circle cx="8" cy="8" r="7.2" fill="#000000" stroke="#222" stroke-width="1.1"/></svg><div style="left:811px;top:168.5px;width:15px;height:15px"><svg width="15" height="15" viewBox="0 0 15 15"><path d="M4.6 1.2 H10.4 L13.8 4.6 V10.4 L10.4 13.8 H4.6 L1.2 10.4 V4.6 Z" fill="#fff" stroke="#8fb08f" stroke-width="1.2"/></svg></div><div class="t" style="left:829px;top:171.69px;font-size:11px;color:#000;">Burn MPO</div><div class="t" style="left:699.5px;width:600px;text-align:center;top:171.69px;font-size:11px;color:#000;">-</div><div class="t" style="right:841px;text-align:right;top:171.69px;font-size:11px;color:#000;">On/ off</div><div class="t" style="left:815.8px;width:600px;text-align:center;top:171.69px;font-size:11px;color:#0000ff;">100</div><div style="left:1154px;top:167px;width:18px;height:18px"><svg width="18" height="18" viewBox="0 0 18 18"><defs><radialGradient id="rv" cx="0.4" cy="0.35" r="0.7"><stop offset="0" stop-color="#ff5a2a"/><stop offset="1" stop-color="#e01000"/></radialGradient></defs><path d="M5.6 0.8 H12.4 L17.2 5.6 V12.4 L12.4 17.2 H5.6 L0.8 12.4 V5.6 Z" fill="url(#rv)" stroke="#9a1000" stroke-width="0.9"/><path d="M6.3 4.5 L11.7 13.5 M11.7 4.5 L6.3 13.5" stroke="#000" stroke-width="1.9"/></svg></div><svg style="position:absolute;left:792.3px;top:188px" width="16" height="16"><circle cx="8" cy="8" r="7.2" fill="#007070" stroke="#222" stroke-width="1.1"/></svg><div style="left:811px;top:188.5px;width:15px;height:15px"><svg width="15" height="15" viewBox="0 0 15 15"><path d="M4.6 1.2 H10.4 L13.8 4.6 V10.4 L10.4 13.8 H4.6 L1.2 10.4 V4.6 Z" fill="#fff" stroke="#8fb08f" stroke-width="1.2"/></svg></div><div class="t" style="left:829px;top:191.69px;font-size:11px;color:#000;">Furn. temp.</div><div class="t" style="left:699.5px;width:600px;text-align:center;top:191.69px;font-size:11px;color:#000;">-</div><div class="t" style="right:841px;text-align:right;top:191.69px;font-size:11px;color:#000;">C</div><div class="t" style="left:815.8px;width:600px;text-align:center;top:191.69px;font-size:11px;color:#0000ff;">1500</div><div style="left:1154px;top:187px;width:18px;height:18px"><svg width="18" height="18" viewBox="0 0 18 18"><defs><radialGradient id="rv" cx="0.4" cy="0.35" r="0.7"><stop offset="0" stop-color="#ff5a2a"/><stop offset="1" stop-color="#e01000"/></radialGradient></defs><path d="M5.6 0.8 H12.4 L17.2 5.6 V12.4 L12.4 17.2 H5.6 L0.8 12.4 V5.6 Z" fill="url(#rv)" stroke="#9a1000" stroke-width="0.9"/><path d="M6.3 4.5 L11.7 13.5 M11.7 4.5 L6.3 13.5" stroke="#000" stroke-width="1.9"/></svg></div><svg style="position:absolute;left:792.3px;top:208px" width="16" height="16"><circle cx="8" cy="8" r="7.2" fill="#00ff80" stroke="#222" stroke-width="1.1"/></svg><div style="left:811px;top:208.5px;width:15px;height:15px"><svg width="15" height="15" viewBox="0 0 15 15"><path d="M4.6 1.2 H10.4 L13.8 4.6 V10.4 L10.4 13.8 H4.6 L1.2 10.4 V4.6 Z" fill="#fff" stroke="#8fb08f" stroke-width="1.2"/></svg></div><div class="t" style="left:829px;top:211.69px;font-size:11px;color:#000;">Burn rate</div><div class="t" style="left:699.5px;width:600px;text-align:center;top:211.69px;font-size:11px;color:#000;">-</div><div class="t" style="right:841px;text-align:right;top:211.69px;font-size:11px;color:#000;">%</div><div class="t" style="left:815.8px;width:600px;text-align:center;top:211.69px;font-size:11px;color:#0000ff;">100</div><div style="left:1154px;top:207px;width:18px;height:18px"><svg width="18" height="18" viewBox="0 0 18 18"><defs><radialGradient id="rv" cx="0.4" cy="0.35" r="0.7"><stop offset="0" stop-color="#ff5a2a"/><stop offset="1" stop-color="#e01000"/></radialGradient></defs><path d="M5.6 0.8 H12.4 L17.2 5.6 V12.4 L12.4 17.2 H5.6 L0.8 12.4 V5.6 Z" fill="url(#rv)" stroke="#9a1000" stroke-width="0.9"/><path d="M6.3 4.5 L11.7 13.5 M11.7 4.5 L6.3 13.5" stroke="#000" stroke-width="1.9"/></svg></div><svg style="position:absolute;left:792.3px;top:228px" width="16" height="16"><circle cx="8" cy="8" r="7.2" fill="#400000" stroke="#222" stroke-width="1.1"/></svg><div style="left:811px;top:228.5px;width:15px;height:15px"><svg width="15" height="15" viewBox="0 0 15 15"><path d="M4.6 1.2 H10.4 L13.8 4.6 V10.4 L10.4 13.8 H4.6 L1.2 10.4 V4.6 Z" fill="#fff" stroke="#8fb08f" stroke-width="1.2"/></svg></div><div class="t" style="left:829px;top:231.69px;font-size:11px;color:#000;">UT902 level</div><div class="t" style="left:699.5px;width:600px;text-align:center;top:231.69px;font-size:11px;color:#000;">-</div><div class="t" style="right:841px;text-align:right;top:231.69px;font-size:11px;color:#000;">%</div><div class="t" style="left:815.8px;width:600px;text-align:center;top:231.69px;font-size:11px;color:#0000ff;">100</div><div style="left:1154px;top:227px;width:18px;height:18px"><svg width="18" height="18" viewBox="0 0 18 18"><defs><radialGradient id="rv" cx="0.4" cy="0.35" r="0.7"><stop offset="0" stop-color="#ff5a2a"/><stop offset="1" stop-color="#e01000"/></radialGradient></defs><path d="M5.6 0.8 H12.4 L17.2 5.6 V12.4 L12.4 17.2 H5.6 L0.8 12.4 V5.6 Z" fill="url(#rv)" stroke="#9a1000" stroke-width="0.9"/><path d="M6.3 4.5 L11.7 13.5 M11.7 4.5 L6.3 13.5" stroke="#000" stroke-width="1.9"/></svg></div><svg style="position:absolute;left:792.3px;top:248px" width="16" height="16"><circle cx="8" cy="8" r="7.2" fill="#00ffff" stroke="#222" stroke-width="1.1"/></svg><div style="left:811px;top:248.5px;width:15px;height:15px"><svg width="15" height="15" viewBox="0 0 15 15"><path d="M4.6 1.2 H10.4 L13.8 4.6 V10.4 L10.4 13.8 H4.6 L1.2 10.4 V4.6 Z" fill="#fff" stroke="#8fb08f" stroke-width="1.2"/></svg></div><div class="t" style="left:829px;top:251.69px;font-size:11px;color:#000;">Gas burn</div><div class="t" style="left:699.5px;width:600px;text-align:center;top:251.69px;font-size:11px;color:#000;">-</div><div class="t" style="right:841px;text-align:right;top:251.69px;font-size:11px;color:#000;">On/ off</div><div class="t" style="left:815.8px;width:600px;text-align:center;top:251.69px;font-size:11px;color:#0000ff;">98</div><div style="left:1154px;top:247px;width:18px;height:18px"><svg width="18" height="18" viewBox="0 0 18 18"><defs><radialGradient id="rv" cx="0.4" cy="0.35" r="0.7"><stop offset="0" stop-color="#ff5a2a"/><stop offset="1" stop-color="#e01000"/></radialGradient></defs><path d="M5.6 0.8 H12.4 L17.2 5.6 V12.4 L12.4 17.2 H5.6 L0.8 12.4 V5.6 Z" fill="url(#rv)" stroke="#9a1000" stroke-width="0.9"/><path d="M6.3 4.5 L11.7 13.5 M11.7 4.5 L6.3 13.5" stroke="#000" stroke-width="1.9"/></svg></div><div style="left:395px;top:268px;width:108px;height:18px;background:#f0f0f0;box-shadow:inset 0 0 0 1px #6a6a6a, inset -2px -2px #6a6a6a, inset 2px 2px #fff;"></div><div class="t" style="left:149.0px;width:600px;text-align:center;top:272.99px;font-size:11px;color:#000;font-weight:bold;letter-spacing:0.45px;">Select all</div><div style="left:509px;top:268px;width:108px;height:18px;background:#f0f0f0;box-shadow:inset 0 0 0 1px #6a6a6a, inset -2px -2px #6a6a6a, inset 2px 2px #fff;"></div><div class="t" style="left:263.0px;width:600px;text-align:center;top:272.99px;font-size:11px;color:#000;font-weight:bold;letter-spacing:0.45px;">Select none</div><div class="t" style="left:8.3px;top:300.69px;font-size:11px;color:#0000ff;">Span</div><div class="t" style="left:80px;top:306.88px;font-size:9px;color:#0000ff;">24-1Hrs</div><div style="left:130px;top:307px;width:91px;height:1px;background:#7888a0;"></div><svg style="position:absolute;left:120px;top:300px" width="11" height="16" viewBox="0 0 11 16"><path d="M1.5 1.5 H9.5 V11 L5.5 14.5 L1.5 11 Z" fill="#f4f4f4" stroke="#6a7a8c" stroke-width="1"/><path d="M5.5 4.5 V9" stroke="#6a7a8c"/></svg><svg style="position:absolute;left:120px;top:316px" width="105" height="5"><rect x="5" y="0" width="1" height="4" fill="#6a7a8c"/><rect x="9" y="0" width="1" height="4" fill="#6a7a8c"/><rect x="13" y="0" width="1" height="4" fill="#6a7a8c"/><rect x="17" y="0" width="1" height="4" fill="#6a7a8c"/><rect x="21" y="0" width="1" height="4" fill="#6a7a8c"/><rect x="25" y="0" width="1" height="4" fill="#6a7a8c"/><rect x="30" y="0" width="1" height="4" fill="#6a7a8c"/><rect x="34" y="0" width="1" height="4" fill="#6a7a8c"/><rect x="38" y="0" width="1" height="4" fill="#6a7a8c"/><rect x="42" y="0" width="1" height="4" fill="#6a7a8c"/><rect x="46" y="0" width="1" height="4" fill="#6a7a8c"/><rect x="50" y="0" width="1" height="4" fill="#6a7a8c"/><rect x="54" y="0" width="1" height="4" fill="#6a7a8c"/><rect x="58" y="0" width="1" height="4" fill="#6a7a8c"/><rect x="62" y="0" width="1" height="4" fill="#6a7a8c"/><rect x="66" y="0" width="1" height="4" fill="#6a7a8c"/><rect x="70" y="0" width="1" height="4" fill="#6a7a8c"/><rect x="75" y="0" width="1" height="4" fill="#6a7a8c"/><rect x="79" y="0" width="1" height="4" fill="#6a7a8c"/><rect x="83" y="0" width="1" height="4" fill="#6a7a8c"/><rect x="87" y="0" width="1" height="4" fill="#6a7a8c"/><rect x="91" y="0" width="1" height="4" fill="#6a7a8c"/><rect x="95" y="0" width="1" height="4" fill="#6a7a8c"/></svg><div style="left:241px;top:300px;width:108px;height:22px;background:#f0f0f0;box-shadow:inset -1px -1px #696969, inset -2px -2px #a0a0a0, inset 1px 1px #fff, 0 0 0 0 #000;"></div><div class="t" style="left:-5.0px;width:600px;text-align:center;top:306.29px;font-size:11px;color:#000;font-weight:bold;letter-spacing:0.45px;">Zoom in</div><div style="left:355px;top:300px;width:108px;height:22px;background:#f0f0f0;box-shadow:inset -1px -1px #696969, inset -2px -2px #a0a0a0, inset 1px 1px #fff, 0 0 0 0 #000;"></div><div class="t" style="left:109.0px;width:600px;text-align:center;top:306.29px;font-size:11px;color:#000;font-weight:bold;letter-spacing:0.45px;">Prev zoom</div><div style="left:469px;top:300px;width:108px;height:22px;background:#f0f0f0;box-shadow:inset -1px -1px #696969, inset -2px -2px #a0a0a0, inset 1px 1px #fff, 0 0 0 0 #000;"></div><div class="t" style="left:223.0px;width:600px;text-align:center;top:306.29px;font-size:11px;color:#000;font-weight:bold;letter-spacing:0.45px;">Reset zoom</div><div style="left:637px;top:300px;width:118px;height:22px;background:#f0f0f0;box-shadow:inset -1px -1px #696969, inset -2px -2px #a0a0a0, inset 1px 1px #fff, 0 0 0 0 #000;"></div><div class="t" style="left:396.0px;width:600px;text-align:center;top:306.29px;font-size:11px;color:#000;font-weight:bold;letter-spacing:0.45px;">Comments</div><div style="left:761px;top:300px;width:108px;height:22px;background:#f0f0f0;box-shadow:inset 0 0 0 1px #5a5a5a, inset -2px -2px #8a8a8a, inset 2px 2px #fff;"></div><div class="t" style="left:515.0px;width:600px;text-align:center;top:306.29px;font-size:11px;color:#000;font-weight:bold;letter-spacing:0.45px;">Info</div><div style="left:875px;top:300px;width:108px;height:22px;background:#f0f0f0;box-shadow:inset -1px -1px #696969, inset -2px -2px #a0a0a0, inset 1px 1px #fff, 0 0 0 0 #000;"></div><div class="t" style="left:629.0px;width:600px;text-align:center;top:306.29px;font-size:11px;color:#000;font-weight:bold;letter-spacing:0.45px;">Export data</div><div style="left:14px;top:319px;width:1px;height:664px;background:#7a9ac8;"></div><div style="left:23px;top:324px;width:4px;height:1px;background:#000;"></div><div style="left:23px;top:488px;width:4px;height:1px;background:#000;"></div><div style="left:23px;top:814px;width:4px;height:1px;background:#000;"></div><div style="left:23px;top:978px;width:4px;height:1px;background:#000;"></div><svg style="position:absolute;left:7px;top:646px" width="21" height="11" viewBox="0 0 21 11"><path d="M1.5 1.5 H11 L14.5 5.5 L11 9.5 H1.5 Z" fill="#fff" stroke="#3a68a8" stroke-width="1"/><rect x="3" y="3" width="8" height="5" fill="#c8dcea"/><path d="M5.5 5.5 H10" stroke="#3a68a8"/><path d="M16 5.5 H20" stroke="#000"/></svg><div class="t" style="left:36.7px;top:643.11px;font-size:10.5px;color:#000;">Span</div><svg style="position:absolute;left:0;top:0" width="1917" height="1037"><rect x="73" y="356" width="1818" height="631" fill="#a0a0a0"/><path d="M73 958.5H1891 M73 901.5H1891 M73 843.5H1891 M73 786.5H1891 M73 728.5H1891 M73 671.5H1891 M73 613.5H1891 M73 556.5H1891 M73 498.5H1891 M73 441.5H1891 M73 383.5H1891 M73.5 356V987 M149.5 356V987 M224.5 356V987 M300.5 356V987 M375.5 356V987 M451.5 356V987 M527.5 356V987 M602.5 356V987 M678.5 356V987 M753.5 356V987 M829.5 356V987 M904.5 356V987 M980.5 356V987 M1056.5 356V987 M1131.5 356V987 M1207.5 356V987 M1282.5 356V987 M1358.5 356V987 M1434.5 356V987 M1509.5 356V987 M1585.5 356V987 M1660.5 356V987 M1736.5 356V987 M1811.5 356V987 M1887.5 356V987" stroke="#cdcdcd" stroke-width="1" stroke-dasharray="3,3" fill="none" shape-rendering="crispEdges"/><defs><clipPath id="pc"><rect x="73" y="356" width="1818" height="631"/></clipPath></defs><g clip-path="url(#pc)" fill="none" stroke-width="1" stroke-linejoin="miter"><polyline points="73.0,786.4 74.3,786.6 75.5,780.4 76.8,779.9 78.0,787.6 79.3,788.6 80.6,783.8 81.8,779.7 83.1,783.3 84.3,782.1 85.6,782.9 86.9,782.5 88.1,784.9 89.4,782.9 90.6,782.4 91.9,785.2 93.2,779.0 94.4,788.6 95.7,786.5 96.9,788.2 98.2,781.6 99.5,781.4 100.7,787.6 102.0,784.7 103.2,786.5 104.5,789.8 105.8,787.5 107.0,783.5 108.3,782.5 109.5,786.9 110.8,784.3 112.1,781.4 113.3,779.5 114.6,783.2 115.8,787.2 117.1,789.6 118.4,784.0 119.6,785.4 120.9,786.1 122.1,786.4 123.4,785.7 124.7,783.5 125.9,781.7 127.2,786.6 128.4,777.1 129.7,778.4 131.0,784.3 132.2,782.6 133.5,778.4 134.7,786.5 136.0,785.5 137.3,785.5 138.5,787.0 139.8,781.1 141.0,784.4 142.3,783.5 143.6,783.5 144.8,784.7 146.1,778.7 147.3,784.3 148.6,786.5 149.9,788.4 151.1,785.9 152.4,783.0 153.6,783.1 154.9,782.9 156.2,785.2 157.4,782.4 158.7,782.5 159.9,788.2 161.2,782.9 162.5,782.6 163.7,785.0 165.0,780.4 166.2,784.0 167.5,787.0 168.8,781.3 170.0,778.2 171.3,788.3 172.5,784.8 173.8,781.6 175.1,782.7 176.3,781.4 177.6,780.4 178.8,790.8 180.1,782.2 181.4,790.0 182.6,787.6 183.9,788.1 185.1,782.8 186.4,790.2 187.7,784.1 188.9,789.6 190.2,777.3 191.4,786.1 192.7,784.2 194.0,788.2 195.2,786.1 196.5,779.4 197.7,783.2 199.0,787.8 200.3,785.9 201.5,784.6 202.8,778.1 204.0,784.7 205.3,782.7 206.6,780.2 207.8,775.4 209.1,781.0 210.3,786.8 211.6,786.6 212.9,777.5 214.1,781.8 215.4,789.6 216.6,784.7 217.9,784.4 219.2,784.1 220.4,780.7 221.7,780.7 222.9,778.5 224.2,789.6 225.5,782.2 226.7,783.9 228.0,787.2 229.2,780.6 230.5,788.0 231.8,788.2 233.0,778.2 234.3,782.4 235.5,780.8 236.8,779.1 238.1,787.9 239.3,778.7 240.6,783.1 241.8,781.5 243.1,780.4 244.4,781.1 245.6,784.9 246.9,783.7 248.1,783.1 249.4,779.9 250.7,791.0 251.9,778.9 253.2,787.1 254.4,776.4 255.7,782.3 257.0,778.2 258.2,785.0 259.5,778.1 260.7,782.5 262.0,782.5 263.3,782.3 264.5,792.5 265.8,788.7 267.0,789.3 268.3,783.7 269.6,784.7 270.8,780.8 272.1,782.4 273.3,779.3 274.6,786.3 275.9,782.4 277.1,785.5 278.4,787.9 279.6,790.1 280.9,784.4 282.2,787.3 283.4,786.0 284.7,787.6 285.9,788.2 287.2,774.6 288.5,784.2 289.7,788.6 291.0,784.8 292.2,784.4 293.5,789.5 294.8,780.8 296.0,787.6 297.3,782.6 298.5,786.1 299.8,787.3 301.1,773.4 302.3,786.8 303.6,789.9 304.8,786.0 306.1,787.5 307.4,780.3 308.6,782.7 309.9,788.4 311.1,778.0 312.4,784.8 313.7,788.6 314.9,780.1 316.2,781.4 317.4,787.5 318.7,787.9 320.0,784.4 321.2,786.3 322.5,782.1 323.7,783.1 325.0,788.1 326.3,787.7 327.5,784.7 328.8,779.2 330.0,785.5 331.3,781.7 332.6,786.1 333.8,782.0 335.1,785.4 336.3,782.0 337.6,786.6 338.9,786.2 340.1,776.9 341.4,780.7 342.6,788.7 343.9,780.0 345.2,784.7 346.4,779.2 347.7,788.5 348.9,784.3 350.2,785.4 351.5,786.6 352.7,788.0 354.0,777.4 355.2,783.9 356.5,784.8 357.8,789.4 359.0,779.9 360.3,779.7 361.5,784.2 362.8,788.7 364.1,782.0 365.3,784.1 366.6,789.3 367.8,776.9 369.1,781.6 370.4,787.3 371.6,786.9 372.9,781.4 374.1,780.0 375.4,781.8 376.7,782.0 377.9,785.0 379.2,776.4 380.4,784.5 381.7,782.8 383.0,782.3 384.2,784.5 385.5,780.7 386.7,778.1 388.0,791.1 389.3,783.8 390.5,779.0 391.8,778.3 393.0,784.9 394.3,781.0 395.6,782.7 396.8,782.5 398.1,785.1 399.3,779.4 400.6,778.7 401.9,777.3 403.1,782.0 404.4,782.4 405.6,779.1 406.9,771.3 408.2,783.9 409.4,783.3 410.7,776.9 411.9,787.2 413.2,792.3 414.5,779.6 415.7,778.3 417.0,778.5 418.2,779.6 419.5,779.6 420.8,785.7 422.0,779.5 423.3,786.7 424.5,788.6 425.8,784.1 427.1,787.9 428.3,787.1 429.6,785.6 430.8,784.7 432.1,782.9 433.4,787.2 434.6,785.8 435.9,784.2 437.1,783.1 438.4,781.9 439.7,780.6 440.9,782.4 442.2,781.6 443.4,780.8 444.7,782.9 446.0,782.2 447.2,786.0 448.5,782.2 449.7,779.2 451.0,785.1 452.3,778.4 453.5,784.9 454.8,779.3 456.0,777.0 457.3,781.9 458.6,784.2 459.8,781.5 461.1,784.7 462.3,786.6 463.6,780.0 464.9,790.4 466.1,780.7 467.4,786.4 468.6,780.5 469.9,785.5 471.2,777.1 472.4,785.2 473.7,791.3 474.9,773.2 476.2,783.6 477.5,784.3 478.7,784.1 480.0,785.3 481.2,783.1 482.5,787.1 483.8,776.8 485.0,786.8 486.3,781.8 487.5,779.6 488.8,785.1 490.1,781.2 491.3,785.9 492.6,787.6 493.8,787.2 495.1,780.6 496.4,780.8 497.6,787.6 498.9,780.8 500.1,787.4 501.4,783.5 502.7,781.6 503.9,791.4 505.2,782.1 506.4,785.2 507.7,789.3 509.0,781.8 510.2,783.2 511.5,783.3 512.7,785.7 514.0,787.3 515.3,789.5 516.5,785.5 517.8,788.4 519.0,786.3 520.3,783.3 521.6,782.0 522.8,783.4 524.1,784.0 525.3,786.0 526.6,781.6 527.9,780.7 529.1,786.6 530.4,786.2 531.6,787.6 532.9,785.1 534.2,785.4 535.4,777.0 536.7,779.1 537.9,788.9 539.2,781.4 540.5,784.9 541.7,790.2 543.0,783.3 544.2,786.5 545.5,782.8 546.8,781.9 548.0,786.2 549.3,778.4 550.5,783.1 551.8,785.9 553.1,788.9 554.3,775.2 555.6,785.8 556.8,782.8 558.1,782.1 559.4,779.9 560.6,791.5 561.9,796.8 563.1,788.6 564.4,794.9 565.7,791.3 566.9,783.5 568.2,793.3 569.4,789.3 570.7,796.2 572.0,782.4 573.2,794.3 574.5,791.7 575.7,793.5 577.0,795.2 578.3,789.4 579.5,794.0 580.8,796.5 582.0,795.3 583.3,795.0 584.6,794.0 585.8,793.7 587.1,797.3 588.3,796.2 589.6,787.2 590.9,795.4 592.1,790.1 593.4,796.3 594.6,793.6 595.9,796.8 597.2,801.7 598.4,796.5 599.7,791.9 600.9,790.7 602.2,791.2 603.5,796.9 604.7,796.2 606.0,799.0 607.2,793.9 608.5,792.0 609.8,793.9 611.0,797.4 612.3,793.3 613.5,794.6 614.8,793.5 616.1,796.1 617.3,794.7 618.6,797.7 619.8,798.1 621.1,804.0 622.4,794.3 623.6,794.5 624.9,798.2 626.1,789.3 627.4,790.3 628.7,788.7 629.9,794.8 631.2,795.3 632.4,792.9 633.7,790.5 635.0,788.2 636.2,796.8 637.5,793.2 638.7,799.3 640.0,792.9 641.3,788.5 642.5,788.9 643.8,782.7 645.0,788.4 646.3,791.7 647.6,792.2 648.8,787.5 650.1,778.3 651.3,788.4 652.6,787.1 653.9,783.5 655.1,785.2 656.4,780.9 657.6,785.8 658.9,783.8 660.2,783.7 661.4,782.9 662.7,778.9 663.9,788.5 665.2,789.8 666.5,788.9 667.7,784.7 669.0,783.3 670.2,781.9 671.5,782.9 672.8,783.4 674.0,790.1 675.3,786.5 676.5,782.8 677.8,788.7 679.1,786.0 680.3,785.7 681.6,782.4 682.8,787.2 684.1,789.8 685.4,785.0 686.6,784.7 687.9,780.7 689.1,786.0 690.4,784.8 691.7,785.6 692.9,785.6 694.2,776.4 695.4,792.5 696.7,781.3 698.0,786.4 699.2,783.1 700.5,788.9 701.7,782.5 703.0,786.5 704.3,781.6 705.5,778.8 706.8,787.9 708.0,789.0 709.3,779.2 710.6,776.6 711.8,783.4 713.1,790.8 714.3,788.9 715.6,780.2 716.9,777.6 718.1,784.2 719.4,788.7 720.6,780.0 721.9,789.0 723.2,786.8 724.4,786.6 725.7,786.8 726.9,782.6 728.2,787.9 729.5,784.0 730.7,780.7 732.0,780.7 733.2,779.9 734.5,786.2 735.8,790.8 737.0,784.1 738.3,783.9 739.5,783.8 740.8,786.0 742.1,782.9 743.3,788.5 744.6,782.0 745.8,778.8 747.1,784.5 748.4,784.6 749.6,782.8 750.9,783.0 752.1,782.9 753.4,784.1 754.7,785.5 755.9,779.0 757.2,788.7 758.4,780.4 759.7,787.3 761.0,782.5 762.2,787.6 763.5,789.6 764.7,787.6 766.0,787.5 767.3,779.4 768.5,786.1 769.8,786.5 771.0,787.4 772.3,784.1 773.6,784.5 774.8,782.7 776.1,787.0 777.3,788.9 778.6,784.7 779.9,781.5 781.1,781.7 782.4,787.9 783.6,786.1 784.9,783.1 786.2,786.3 787.4,789.1 788.7,783.6 789.9,785.3 791.2,783.3 792.5,781.5 793.7,786.1 795.0,788.2 796.2,787.0 797.5,781.7 798.8,784.1 800.0,781.6 801.3,785.3 802.5,781.1 803.8,785.0 805.1,785.1 806.3,782.5 807.6,782.6 808.8,783.0 810.1,781.4 811.4,777.5 812.6,782.9 813.9,786.5 815.1,778.6 816.4,773.8 817.7,776.5 818.9,783.9 820.2,778.0 821.4,775.4 822.7,776.1 824.0,772.4 825.2,775.4 826.5,788.0 827.7,776.5 829.0,780.8 830.3,781.0 831.5,783.5 832.8,781.7 834.0,778.4 835.3,773.0 836.6,772.6 837.8,774.1 839.1,771.8 840.3,777.4 841.6,778.5 842.9,768.7 844.1,773.5 845.4,776.1 846.6,771.9 847.9,777.1 849.2,769.1 850.4,779.2 851.7,776.1 852.9,774.5 854.2,774.0 855.5,777.3 856.7,769.5 858.0,770.1 859.2,771.5 860.5,769.3 861.8,773.1 863.0,768.1 864.3,773.3 865.5,774.9 866.8,771.8 868.1,772.0 869.3,770.2 870.6,769.1 871.8,765.2 873.1,775.9 874.4,776.7 875.6,770.2 876.9,766.5 878.1,767.3 879.4,771.7 880.7,772.3 881.9,772.5 883.2,765.4 884.4,772.4 885.7,770.5 887.0,775.8 888.2,768.2 889.5,771.8 890.7,772.4 892.0,772.5 893.3,772.0 894.5,762.2 895.8,769.3 897.0,769.5 898.3,774.7 899.6,777.2 900.8,779.7 902.1,774.1 903.3,771.3 904.6,771.0 905.9,776.7 907.1,769.3 908.4,773.5 909.6,767.7 910.9,772.3 912.2,771.2 913.4,773.8 914.7,773.8 915.9,783.2 917.2,935.5 918.5,855.0 919.7,855.0 921.0,855.0 922.2,947.0 923.5,947.0 924.8,843.5 926.0,843.5 927.3,843.5 928.5,843.5 929.8,949.9 931.1,949.9 932.3,949.9 933.6,949.9 934.8,949.9 936.1,953.9 937.4,953.9 938.6,953.9 939.9,953.9 941.1,953.9 942.4,953.9 943.7,953.9 944.9,953.9 946.2,953.9 947.4,889.5 948.7,889.5 950.0,889.5 951.2,889.5 952.5,889.5 953.7,780.3 955.0,770.0 956.3,764.7 957.5,770.1 958.8,775.9 960.0,769.1 961.3,775.7 962.6,776.6 963.8,792.6 965.1,809.7 966.3,815.5 967.6,822.6 968.9,824.4 970.1,830.5 971.4,820.3 972.6,815.9 973.9,815.5 975.2,801.8 976.4,789.1 977.7,769.2 978.9,768.2 980.2,777.5 981.5,770.3 982.7,773.4 984.0,770.3 985.2,773.9 986.5,766.0 987.8,767.0 989.0,772.6 990.3,771.4 991.5,772.1 992.8,772.2 994.1,769.9 995.3,776.8 996.6,778.4 997.8,769.6 999.1,772.2 1000.4,774.9 1001.6,775.5 1002.9,778.4 1004.1,774.1 1005.4,779.0 1006.7,772.4 1007.9,771.7 1009.2,774.9 1010.4,769.3 1011.7,770.0 1013.0,771.9 1014.2,775.4 1015.5,775.3 1016.7,776.6 1018.0,780.3 1019.3,773.5 1020.5,771.0 1021.8,778.7 1023.0,772.3 1024.3,774.1 1025.6,773.2 1026.8,771.4 1028.1,770.7 1029.3,776.1 1030.6,771.2 1031.9,775.4 1033.1,782.7 1034.4,766.9 1035.6,773.6 1036.9,775.2 1038.2,769.5 1039.4,772.7 1040.7,776.1 1041.9,773.5 1043.2,772.7 1044.5,774.8 1045.7,782.6 1047.0,773.7 1048.2,777.2 1049.5,777.7 1050.8,774.1 1052.0,766.7 1053.3,778.0 1054.5,772.6 1055.8,778.8 1057.1,779.4 1058.3,775.2 1059.6,770.7 1060.8,772.9 1062.1,772.9 1063.4,769.4 1064.6,771.7 1065.9,775.0 1067.1,776.2 1068.4,773.7 1069.7,771.3 1070.9,773.5 1072.2,772.9 1073.4,774.0 1074.7,774.7 1076.0,775.9 1077.2,774.4 1078.5,765.5 1079.7,768.1 1081.0,767.2 1082.3,771.5 1083.5,772.4 1084.8,769.5 1086.0,773.8 1087.3,768.6 1088.6,771.9 1089.8,769.5 1091.1,775.2 1092.3,766.3 1093.6,771.9 1094.9,770.1 1096.1,775.0 1097.4,774.7 1098.6,769.8 1099.9,777.8 1101.2,768.0 1102.4,774.3 1103.7,769.2 1104.9,775.0 1106.2,773.2 1107.5,772.5 1108.7,769.7 1110.0,776.0 1111.2,779.4 1112.5,783.5 1113.8,783.8 1115.0,790.5 1116.3,787.7 1117.5,789.5 1118.8,787.0 1120.1,779.6 1121.3,775.1 1122.6,776.2 1123.8,773.6 1125.1,773.3 1126.4,776.6 1127.6,774.7 1128.9,776.7 1130.1,770.9 1131.4,776.0 1132.7,768.0 1133.9,779.8 1135.2,771.1 1136.4,771.2 1137.7,775.5 1139.0,779.3 1140.2,772.9 1141.5,777.4 1142.7,769.4 1144.0,772.5 1145.3,772.9 1146.5,772.3 1147.8,770.3 1149.0,772.8 1150.3,770.5 1151.6,771.1 1152.8,774.1 1154.1,768.5 1155.3,767.2 1156.6,768.8 1157.9,772.0 1159.1,770.1 1160.4,776.0 1161.6,775.2 1162.9,775.3 1164.2,774.5 1165.4,769.7 1166.7,775.7 1167.9,775.2 1169.2,778.4 1170.5,775.4 1171.7,778.6 1173.0,769.9 1174.2,773.7 1175.5,770.1 1176.8,768.5 1178.0,771.5 1179.3,772.0 1180.5,772.7 1181.8,774.9 1183.1,780.9 1184.3,772.9 1185.6,776.1 1186.8,777.2 1188.1,775.8 1189.4,774.0 1190.6,771.7 1191.9,777.6 1193.1,778.3 1194.4,770.2 1195.7,772.4 1196.9,771.7 1198.2,775.5 1199.4,779.4 1200.7,770.0 1202.0,770.1 1203.2,776.4 1204.5,772.9 1205.7,770.8 1207.0,765.7 1208.3,770.1 1209.5,772.3 1210.8,774.8 1212.0,775.4 1213.3,774.2 1214.6,776.1 1215.8,771.8 1217.1,773.7 1218.3,775.2 1219.6,777.7 1220.9,774.0 1222.1,775.5 1223.4,773.0 1224.6,777.6 1225.9,772.1 1227.2,774.6 1228.4,767.7 1229.7,776.9 1230.9,767.5 1232.2,764.5 1233.5,774.6 1234.7,767.3 1236.0,770.2 1237.2,778.0 1238.5,775.8 1239.8,770.4 1241.0,772.5 1242.3,770.5 1243.5,771.9 1244.8,768.4 1246.1,774.3 1247.3,777.2 1248.6,775.8 1249.8,773.6 1251.1,776.5 1252.4,773.6 1253.6,774.2 1254.9,774.3 1256.1,773.3 1257.4,774.7 1258.7,770.1 1259.9,773.0 1261.2,770.3 1262.4,777.9 1263.7,772.8 1265.0,774.6 1266.2,779.7 1267.5,765.8 1268.7,777.4 1270.0,770.0 1271.3,770.0 1272.5,768.5 1273.8,774.0 1275.0,781.4 1276.3,770.5 1277.6,773.0 1278.8,770.3 1280.1,773.3 1281.3,768.3 1282.6,771.1 1283.9,773.9 1285.1,764.6 1286.4,775.1 1287.6,780.7 1288.9,772.7 1290.2,771.7 1291.4,771.1 1292.7,774.9 1293.9,773.3 1295.2,776.0 1296.5,774.4 1297.7,771.0 1299.0,775.2 1300.2,771.1 1301.5,774.5 1302.8,773.4 1304.0,774.7 1305.3,769.8 1306.5,773.4 1307.8,776.5 1309.1,773.4 1310.3,770.0 1311.6,773.0 1312.8,777.3 1314.1,776.1 1315.4,777.1 1316.6,768.9 1317.9,772.8 1319.1,770.3 1320.4,770.5 1321.7,774.7 1322.9,769.7 1324.2,773.8 1325.4,772.1 1326.7,780.0 1328.0,773.3 1329.2,774.6 1330.5,776.0 1331.7,772.3 1333.0,777.4 1334.3,774.0 1335.5,781.5 1336.8,773.5 1338.0,775.2 1339.3,766.8 1340.6,771.9 1341.8,770.6 1343.1,782.7 1344.3,774.1 1345.6,776.3 1346.9,767.7 1348.1,768.9 1349.4,771.9 1350.6,772.1 1351.9,772.4 1353.2,773.1 1354.4,770.8 1355.7,770.8 1356.9,773.4 1358.2,775.6 1359.5,767.3 1360.7,774.2 1362.0,775.2 1363.2,764.9 1364.5,772.6 1365.8,773.4 1367.0,777.5 1368.3,776.5 1369.5,768.4 1370.8,774.1 1372.1,768.9 1373.3,776.6 1374.6,770.2 1375.8,772.4 1377.1,774.1 1378.4,778.9 1379.6,768.1 1380.9,772.0 1382.1,772.5 1383.4,769.5 1384.7,776.1 1385.9,767.7 1387.2,769.9 1388.4,770.6 1389.7,770.3 1391.0,774.4 1392.2,772.5 1393.5,770.6 1394.7,774.0 1396.0,767.2 1397.3,769.1 1398.5,767.3 1399.8,777.3 1401.0,766.8 1402.3,773.8 1403.6,774.8 1404.8,773.4 1406.1,767.2 1407.3,770.5 1408.6,770.8 1409.9,768.9 1411.1,768.8 1412.4,768.4 1413.6,768.9 1414.9,771.4 1416.2,770.9 1417.4,777.4 1418.7,773.3 1419.9,780.7 1421.2,773.4 1422.5,772.7 1423.7,775.3 1425.0,774.5 1426.2,769.4 1427.5,774.6 1428.8,773.1 1430.0,766.7 1431.3,772.0 1432.5,769.9 1433.8,771.6 1435.1,771.3 1436.3,769.4 1437.6,774.0 1438.8,770.8 1440.1,775.0 1441.4,774.7 1442.6,771.0 1443.9,775.4 1445.1,782.0 1446.4,773.8 1447.7,768.4 1448.9,776.6 1450.2,771.0 1451.4,774.4 1452.7,778.2 1454.0,773.7 1455.2,780.7 1456.5,768.9 1457.7,774.2 1459.0,771.6 1460.3,773.1 1461.5,778.1 1462.8,774.5 1464.0,768.8 1465.3,769.9 1466.6,774.2 1467.8,775.5 1469.1,773.4 1470.3,777.4 1471.6,772.0 1472.9,778.5 1474.1,775.5 1475.4,770.1 1476.6,773.0 1477.9,775.2 1479.2,772.7 1480.4,778.3 1481.7,780.3 1482.9,779.8 1484.2,785.1 1485.5,790.6 1486.7,782.5 1488.0,784.9 1489.2,774.9 1490.5,770.1 1491.8,773.6 1493.0,771.9 1494.3,778.4 1495.5,779.3 1496.8,774.7 1498.1,772.4 1499.3,769.1 1500.6,776.0 1501.8,776.9 1503.1,776.7 1504.4,776.1 1505.6,773.1 1506.9,778.6 1508.1,771.4 1509.4,778.6 1510.7,766.1 1511.9,774.2 1513.2,773.4 1514.4,779.4 1515.7,772.7 1517.0,780.1 1518.2,770.7 1519.5,776.0 1520.7,773.0 1522.0,772.1 1523.3,770.9 1524.5,769.2 1525.8,770.2 1527.0,771.8 1528.3,776.0 1529.6,777.6 1530.8,771.1 1532.1,772.5 1533.3,775.4 1534.6,773.6 1535.9,770.3 1537.1,770.2 1538.4,775.4 1539.6,777.8 1540.9,779.5 1542.2,774.9 1543.4,774.5 1544.7,777.9 1545.9,769.7 1547.2,766.6 1548.5,775.8 1549.7,770.5 1551.0,773.4 1552.2,770.9 1553.5,772.3 1554.8,773.2 1556.0,769.7 1557.3,770.5 1558.5,774.2 1559.8,771.3 1561.1,775.0 1562.3,773.1 1563.6,770.8 1564.8,771.3 1566.1,777.9 1567.4,770.8 1568.6,776.8 1569.9,772.2 1571.1,770.4 1572.4,777.9 1573.7,776.4 1574.9,770.0 1576.2,771.5 1577.4,779.6 1578.7,769.7 1580.0,775.0 1581.2,776.6 1582.5,771.6 1583.7,774.7 1585.0,772.5 1586.3,771.8 1587.5,764.6 1588.8,769.7 1590.0,771.8 1591.3,772.4 1592.6,771.5 1593.8,771.2 1595.1,774.9 1596.3,771.2 1597.6,775.0 1598.9,774.4 1600.1,773.1 1601.4,769.6 1602.6,770.3 1603.9,783.5 1605.2,769.4 1606.4,773.3 1607.7,773.1 1608.9,768.5 1610.2,775.9 1611.5,777.0 1612.7,780.2 1614.0,777.6 1615.2,771.0 1616.5,776.5 1617.8,777.0 1619.0,772.4 1620.3,777.3 1621.5,776.3 1622.8,776.4 1624.1,772.3 1625.3,775.9 1626.6,775.3 1627.8,774.2 1629.1,780.0 1630.4,774.5 1631.6,779.8 1632.9,777.9 1634.1,775.3 1635.4,773.3 1636.7,774.6 1637.9,769.8 1639.2,772.7 1640.4,771.1 1641.7,774.7 1643.0,775.3 1644.2,767.5 1645.5,778.8 1646.7,769.4 1648.0,776.0 1649.3,771.3 1650.5,778.1 1651.8,772.1 1653.0,772.4 1654.3,780.7 1655.6,775.9 1656.8,771.5 1658.1,770.3 1659.3,773.0 1660.6,776.2 1661.9,774.4 1663.1,778.8 1664.4,777.7 1665.6,773.9 1666.9,774.5 1668.2,771.9 1669.4,773.5 1670.7,771.9 1671.9,774.2 1673.2,772.0 1674.5,765.5 1675.7,777.4 1677.0,773.5 1678.2,775.7 1679.5,772.3 1680.8,772.4 1682.0,777.1 1683.3,773.7 1684.5,773.3 1685.8,774.3 1687.1,772.6 1688.3,768.9 1689.6,771.5 1690.8,780.5 1692.1,781.7 1693.4,777.2 1694.6,786.8 1695.9,780.5 1697.1,785.2 1698.4,786.3 1699.7,779.1 1700.9,771.8 1702.2,773.7 1703.4,775.0 1704.7,775.4 1706.0,776.2 1707.2,776.5 1708.5,775.1 1709.7,781.5 1711.0,771.5 1712.3,772.2 1713.5,772.8 1714.8,770.0 1716.0,775.0 1717.3,773.1 1718.6,781.9 1719.8,772.3 1721.1,774.1 1722.3,770.5 1723.6,769.8 1724.9,773.5 1726.1,777.4 1727.4,772.2 1728.6,770.6 1729.9,770.5 1731.2,775.6 1732.4,777.0 1733.7,774.8 1734.9,777.4 1736.2,781.1 1737.5,772.5 1738.7,772.3 1740.0,771.7 1741.2,776.9 1742.5,774.1 1743.8,778.1 1745.0,779.3 1746.3,772.6 1747.5,780.2 1748.8,775.3 1750.1,765.9 1751.3,769.9 1752.6,771.8 1753.8,771.9 1755.1,774.6 1756.4,776.2 1757.6,767.0 1758.9,774.7 1760.1,776.3 1761.4,772.0 1762.7,774.1 1763.9,769.3 1765.2,775.6 1766.4,776.0 1767.7,774.7 1769.0,768.0 1770.2,770.2 1771.5,772.4 1772.7,773.1 1774.0,772.1 1775.3,776.5 1776.5,771.4 1777.8,774.9 1779.0,772.6 1780.3,773.3 1781.6,772.4 1782.8,774.9 1784.1,770.1 1785.3,772.2 1786.6,776.0 1787.9,772.3 1789.1,774.8 1790.4,772.6 1791.6,771.1 1792.9,775.6 1794.2,773.8 1795.4,773.5 1796.7,773.7 1797.9,767.2 1799.2,773.0 1800.5,778.0 1801.7,774.1 1803.0,776.3 1804.2,766.3 1805.5,776.5 1806.8,778.2 1808.0,772.2 1809.3,776.5 1810.5,776.0 1811.8,775.6 1813.1,777.3 1814.3,776.3 1815.6,782.4 1816.8,775.1 1818.1,772.6 1819.4,768.3 1820.6,774.5 1821.9,772.0 1823.1,777.4 1824.4,770.0 1825.7,767.2 1826.9,773.5 1828.2,775.7 1829.4,774.3 1830.7,769.2 1832.0,778.9 1833.2,770.4 1834.5,778.0 1835.7,777.5 1837.0,773.6 1838.3,772.3 1839.5,771.1 1840.8,769.5 1842.0,778.3 1843.3,774.2 1844.6,771.6 1845.8,773.1 1847.1,770.2 1848.3,773.8 1849.6,775.1 1850.9,781.6 1852.1,780.3 1853.4,771.0 1854.6,777.7 1855.9,772.9 1857.2,771.7 1858.4,774.3 1859.7,770.3 1860.9,775.9 1862.2,771.6 1863.5,773.8 1864.7,778.6 1866.0,780.2 1867.2,774.0 1868.5,767.7 1869.8,769.2 1871.0,771.6 1872.3,770.5 1873.5,769.9 1874.8,773.9 1876.1,768.7 1877.3,772.3 1878.6,774.9 1879.8,760.0 1881.1,770.7 1882.4,773.5 1883.6,770.5 1884.9,777.3 1886.1,777.4 1887.4,766.4" stroke="#804040"/><polyline points="73.0,784.4 74.3,775.5 75.5,775.4 76.8,786.2 78.0,783.2 79.3,788.7 80.6,788.8 81.8,782.6 83.1,777.5 84.3,793.6 85.6,774.7 86.9,800.3 88.1,778.2 89.4,782.9 90.6,784.0 91.9,783.2 93.2,784.1 94.4,782.7 95.7,782.9 96.9,787.5 98.2,787.0 99.5,795.2 100.7,780.9 102.0,788.6 103.2,840.1 104.5,819.4 105.8,824.4 107.0,833.3 108.3,822.2 109.5,819.2 110.8,819.2 112.1,838.3 113.3,822.4 114.6,837.5 115.8,836.6 117.1,836.6 118.4,844.5 119.6,831.9 120.9,840.9 122.1,817.9 123.4,805.1 124.7,821.9 125.9,820.0 127.2,815.2 128.4,836.3 129.7,835.0 131.0,835.0 132.2,793.4 133.5,808.7 134.7,803.7 136.0,788.5 137.3,793.8 138.5,789.8 139.8,803.1 141.0,801.7 142.3,815.6 143.6,795.6 144.8,789.7 146.1,806.1 147.3,791.0 148.6,783.2 149.9,778.0 151.1,786.7 152.4,781.5 153.6,779.7 154.9,802.0 156.2,778.3 157.4,785.3 158.7,778.9 159.9,785.2 161.2,776.9 162.5,781.8 163.7,782.3 165.0,780.0 166.2,775.8 167.5,779.8 168.8,789.6 170.0,783.5 171.3,779.4 172.5,785.7 173.8,788.6 175.1,775.0 176.3,806.3 177.6,782.0 178.8,779.8 180.1,790.0 181.4,786.7 182.6,795.2 183.9,783.9 185.1,774.5 186.4,774.4 187.7,791.5 188.9,784.6 190.2,778.5 191.4,773.4 192.7,786.8 194.0,796.0 195.2,779.9 196.5,797.3 197.7,787.5 199.0,787.5 200.3,785.3 201.5,780.1 202.8,783.0 204.0,782.6 205.3,793.5 206.6,786.9 207.8,776.4 209.1,783.0 210.3,790.1 211.6,775.1 212.9,778.8 214.1,770.6 215.4,793.8 216.6,784.7 217.9,789.7 219.2,775.4 220.4,768.5 221.7,793.0 222.9,787.0 224.2,778.6 225.5,785.7 226.7,782.8 228.0,783.2 229.2,784.9 230.5,776.1 231.8,798.8 233.0,776.7 234.3,795.8 235.5,780.5 236.8,794.8 238.1,805.6 239.3,835.2 240.6,831.7 241.8,812.9 243.1,809.1 244.4,775.6 245.6,788.3 246.9,778.1 248.1,782.9 249.4,793.0 250.7,786.8 251.9,793.3 253.2,788.2 254.4,791.3 255.7,800.3 257.0,795.8 258.2,790.2 259.5,794.2 260.7,799.2 262.0,780.7 263.3,785.7 264.5,784.4 265.8,800.0 267.0,786.9 268.3,778.9 269.6,783.6 270.8,774.5 272.1,786.8 273.3,785.7 274.6,779.8 275.9,779.8 277.1,780.4 278.4,780.6 279.6,785.4 280.9,790.7 282.2,796.0 283.4,782.9 284.7,786.0 285.9,794.8 287.2,784.7 288.5,778.5 289.7,785.1 291.0,781.4 292.2,785.6 293.5,785.8 294.8,783.9 296.0,783.9 297.3,787.7 298.5,779.4 299.8,793.5 301.1,807.9 302.3,818.2 303.6,805.1 304.8,798.7 306.1,787.8 307.4,782.9 308.6,789.7 309.9,781.9 311.1,786.9 312.4,787.1 313.7,785.9 314.9,774.7 316.2,786.8 317.4,794.7 318.7,782.3 320.0,791.3 321.2,780.7 322.5,803.3 323.7,780.2 325.0,778.6 326.3,789.1 327.5,779.9 328.8,781.8 330.0,797.4 331.3,785.7 332.6,777.8 333.8,792.0 335.1,780.8 336.3,793.1 337.6,778.1 338.9,787.7 340.1,778.8 341.4,799.9 342.6,805.1 343.9,815.1 345.2,820.5 346.4,796.2 347.7,799.0 348.9,777.8 350.2,784.0 351.5,782.1 352.7,785.8 354.0,806.1 355.2,784.7 356.5,786.9 357.8,785.3 359.0,790.5 360.3,807.6 361.5,795.6 362.8,786.3 364.1,776.5 365.3,782.6 366.6,787.9 367.8,784.6 369.1,792.3 370.4,781.0 371.6,779.2 372.9,786.1 374.1,782.0 375.4,778.5 376.7,786.2 377.9,789.3 379.2,797.1 380.4,782.6 381.7,783.3 383.0,779.0 384.2,777.2 385.5,789.7 386.7,792.5 388.0,782.2 389.3,779.3 390.5,783.6 391.8,791.2 393.0,777.6 394.3,783.9 395.6,777.7 396.8,799.8 398.1,782.7 399.3,784.7 400.6,794.7 401.9,810.8 403.1,794.1 404.4,805.7 405.6,798.7 406.9,781.8 408.2,793.9 409.4,793.5 410.7,779.8 411.9,795.2 413.2,779.2 414.5,785.0 415.7,796.5 417.0,788.6 418.2,780.6 419.5,783.0 420.8,784.0 422.0,783.2 423.3,779.0 424.5,782.6 425.8,776.2 427.1,780.6 428.3,785.1 429.6,797.0 430.8,795.1 432.1,785.3 433.4,773.8 434.6,784.7 435.9,783.1 437.1,784.3 438.4,784.0 439.7,787.0 440.9,803.2 442.2,780.1 443.4,790.3 444.7,780.0 446.0,785.1 447.2,790.0 448.5,783.5 449.7,790.1 451.0,790.5 452.3,789.0 453.5,779.8 454.8,769.2 456.0,788.3 457.3,780.6 458.6,785.9 459.8,793.1 461.1,791.1 462.3,788.8 463.6,790.7 464.9,788.9 466.1,778.0 467.4,802.4 468.6,780.9 469.9,766.6 471.2,785.8 472.4,789.2 473.7,800.0 474.9,795.2 476.2,803.0 477.5,797.0 478.7,806.5 480.0,797.6 481.2,793.7 482.5,801.9 483.8,835.0 485.0,810.2 486.3,822.6 487.5,810.5 488.8,803.7 490.1,798.1 491.3,822.3 492.6,830.0 493.8,799.1 495.1,806.1 496.4,826.4 497.6,813.3 498.9,799.5 500.1,809.4 501.4,802.2 502.7,814.6 503.9,805.0 505.2,800.2 506.4,802.3 507.7,806.6 509.0,834.4 510.2,788.6 511.5,783.8 512.7,785.7 514.0,779.0 515.3,780.2 516.5,792.3 517.8,796.4 519.0,787.2 520.3,778.7 521.6,773.1 522.8,772.3 524.1,779.6 525.3,794.4 526.6,794.1 527.9,778.9 529.1,795.6 530.4,778.8 531.6,782.1 532.9,783.4 534.2,790.2 535.4,784.5 536.7,783.7 537.9,783.1 539.2,797.4 540.5,790.2 541.7,792.6 543.0,781.8 544.2,777.8 545.5,787.7 546.8,784.3 548.0,792.4 549.3,790.8 550.5,782.2 551.8,776.9 553.1,780.0 554.3,794.9 555.6,825.1 556.8,818.9 558.1,825.4 559.4,803.2 560.6,815.0 561.9,800.2 563.1,804.4 564.4,771.7 565.7,804.4 566.9,779.2 568.2,772.6 569.4,769.4 570.7,778.2 572.0,768.7 573.2,774.8 574.5,783.9 575.7,798.9 577.0,827.2 578.3,821.7 579.5,793.9 580.8,822.6 582.0,798.9 583.3,803.0 584.6,805.4 585.8,779.2 587.1,759.0 588.3,789.2 589.6,769.4 590.9,785.8 592.1,768.8 593.4,762.9 594.6,789.6 595.9,786.5 597.2,804.2 598.4,777.1 599.7,770.9 600.9,817.0 602.2,834.3 603.5,818.4 604.7,813.1 606.0,807.9 607.2,819.5 608.5,816.1 609.8,805.8 611.0,803.9 612.3,791.1 613.5,802.5 614.8,790.4 616.1,770.6 617.3,774.2 618.6,793.4 619.8,787.4 621.1,788.9 622.4,775.3 623.6,779.9 624.9,792.6 626.1,785.2 627.4,789.8 628.7,784.3 629.9,776.6 631.2,808.7 632.4,789.9 633.7,780.7 635.0,778.6 636.2,783.5 637.5,784.4 638.7,819.3 640.0,807.7 641.3,809.8 642.5,829.6 643.8,819.2 645.0,820.5 646.3,818.8 647.6,814.1 648.8,812.9 650.1,791.3 651.3,788.1 652.6,786.9 653.9,774.8 655.1,777.7 656.4,781.5 657.6,782.6 658.9,795.7 660.2,777.8 661.4,782.7 662.7,792.1 663.9,792.0 665.2,777.7 666.5,804.3 667.7,782.4 669.0,783.6 670.2,788.5 671.5,784.4 672.8,777.4 674.0,807.8 675.3,782.7 676.5,778.0 677.8,800.1 679.1,794.7 680.3,792.0 681.6,792.5 682.8,789.3 684.1,804.8 685.4,808.7 686.6,820.5 687.9,821.7 689.1,823.1 690.4,827.0 691.7,820.8 692.9,809.2 694.2,807.2 695.4,811.5 696.7,822.8 698.0,831.1 699.2,835.2 700.5,806.9 701.7,822.5 703.0,839.0 704.3,838.1 705.5,837.7 706.8,813.8 708.0,825.6 709.3,817.5 710.6,829.6 711.8,836.7 713.1,825.2 714.3,805.5 715.6,817.5 716.9,813.3 718.1,811.4 719.4,817.0 720.6,808.6 721.9,793.4 723.2,792.8 724.4,787.5 725.7,791.5 726.9,800.7 728.2,790.5 729.5,780.2 730.7,774.9 732.0,780.4 733.2,777.7 734.5,792.6 735.8,785.6 737.0,784.3 738.3,786.5 739.5,775.6 740.8,794.0 742.1,799.9 743.3,779.2 744.6,799.1 745.8,793.6 747.1,786.0 748.4,779.4 749.6,783.2 750.9,781.5 752.1,794.2 753.4,788.4 754.7,785.0 755.9,787.2 757.2,805.9 758.4,811.5 759.7,793.0 761.0,819.8 762.2,807.6 763.5,811.2 764.7,809.8 766.0,823.2 767.3,817.7 768.5,800.1 769.8,828.8 771.0,810.6 772.3,816.8 773.6,811.9 774.8,828.0 776.1,818.6 777.3,821.1 778.6,810.7 779.9,833.3 781.1,810.8 782.4,804.8 783.6,823.4 784.9,823.2 786.2,836.4 787.4,826.8 788.7,802.0 789.9,818.9 791.2,810.5 792.5,772.7 793.7,790.7 795.0,774.9 796.2,788.7 797.5,787.8 798.8,784.4 800.0,792.5 801.3,777.8 802.5,788.2 803.8,775.0 805.1,779.9 806.3,794.8 807.6,780.1 808.8,773.5 810.1,788.1 811.4,776.3 812.6,791.7 813.9,787.3 815.1,790.1 816.4,779.0 817.7,806.0 818.9,813.4 820.2,785.0 821.4,788.0 822.7,784.5 824.0,778.4 825.2,783.4 826.5,783.6 827.7,781.7 829.0,789.7 830.3,788.4 831.5,778.7 832.8,785.6 834.0,802.8 835.3,794.9 836.6,796.0 837.8,820.6 839.1,797.9 840.3,824.3 841.6,837.7 842.9,816.4 844.1,825.2 845.4,811.7 846.6,813.8 847.9,813.6 849.2,838.0 850.4,824.7 851.7,832.2 852.9,831.5 854.2,814.2 855.5,813.9 856.7,837.4 858.0,818.3 859.2,835.3 860.5,826.5 861.8,833.5 863.0,835.4 864.3,818.9 865.5,815.6 866.8,820.5 868.1,832.7 869.3,829.3 870.6,836.2 871.8,838.2 873.1,836.6 874.4,829.2 875.6,828.3 876.9,820.7 878.1,838.5 879.4,828.5 880.7,837.0 881.9,819.4 883.2,812.4 884.4,840.3 885.7,833.6 887.0,805.6 888.2,829.7 889.5,836.9 890.7,837.9 892.0,815.4 893.3,834.5 894.5,820.1 895.8,814.4 897.0,820.5 898.3,842.9 899.6,835.2 900.8,831.7 902.1,820.1 903.3,834.3 904.6,822.3 905.9,824.0 907.1,809.0 908.4,814.8 909.6,817.7 910.9,813.8 912.2,811.6 913.4,832.6 914.7,793.6 915.9,801.2 917.2,889.5 918.5,487.0 919.7,487.0 921.0,487.0 922.2,464.0 923.5,941.2 924.8,941.2 926.0,941.2 927.3,498.5 928.5,469.8 929.8,469.8 931.1,469.8 932.3,469.8 933.6,929.8 934.8,938.4 936.1,938.4 937.4,938.4 938.6,938.4 939.9,938.4 941.1,938.4 942.4,938.4 943.7,938.4 944.9,938.4 946.2,938.4 947.4,938.4 948.7,938.4 950.0,872.2 951.2,872.2 952.5,781.1 953.7,787.3 955.0,780.0 956.3,782.8 957.5,771.0 958.8,782.2 960.0,804.3 961.3,796.3 962.6,786.3 963.8,784.2 965.1,795.1 966.3,784.5 967.6,786.6 968.9,784.6 970.1,785.1 971.4,785.4 972.6,785.4 973.9,787.5 975.2,781.9 976.4,785.1 977.7,773.7 978.9,793.0 980.2,782.7 981.5,788.7 982.7,779.9 984.0,778.3 985.2,777.1 986.5,791.0 987.8,796.0 989.0,790.2 990.3,807.7 991.5,798.4 992.8,783.2 994.1,788.7 995.3,783.8 996.6,773.9 997.8,776.6 999.1,790.7 1000.4,788.0 1001.6,799.8 1002.9,783.6 1004.1,802.5 1005.4,804.5 1006.7,790.4 1007.9,800.3 1009.2,784.4 1010.4,799.8 1011.7,798.1 1013.0,781.0 1014.2,787.1 1015.5,794.5 1016.7,789.5 1018.0,784.4 1019.3,776.4 1020.5,781.3 1021.8,781.3 1023.0,784.9 1024.3,782.9 1025.6,792.8 1026.8,802.7 1028.1,791.5 1029.3,794.0 1030.6,785.9 1031.9,774.6 1033.1,781.4 1034.4,781.7 1035.6,784.4 1036.9,789.8 1038.2,786.2 1039.4,779.3 1040.7,806.4 1041.9,797.4 1043.2,801.6 1044.5,810.8 1045.7,789.5 1047.0,785.8 1048.2,781.9 1049.5,785.6 1050.8,797.8 1052.0,795.8 1053.3,791.0 1054.5,787.2 1055.8,796.0 1057.1,798.2 1058.3,798.6 1059.6,792.6 1060.8,771.0 1062.1,787.8 1063.4,788.8 1064.6,782.4 1065.9,778.0 1067.1,794.7 1068.4,791.3 1069.7,791.5 1070.9,795.3 1072.2,794.5 1073.4,811.5 1074.7,817.8 1076.0,809.4 1077.2,809.5 1078.5,802.6 1079.7,813.2 1081.0,789.5 1082.3,792.0 1083.5,797.6 1084.8,810.3 1086.0,778.5 1087.3,792.9 1088.6,798.4 1089.8,788.6 1091.1,788.6 1092.3,788.6 1093.6,786.7 1094.9,780.5 1096.1,783.9 1097.4,798.4 1098.6,793.5 1099.9,780.2 1101.2,782.5 1102.4,784.3 1103.7,789.2 1104.9,796.5 1106.2,785.5 1107.5,770.3 1108.7,779.2 1110.0,784.2 1111.2,800.3 1112.5,821.8 1113.8,809.6 1115.0,829.1 1116.3,806.4 1117.5,821.7 1118.8,835.5 1120.1,821.5 1121.3,810.0 1122.6,800.4 1123.8,819.3 1125.1,819.7 1126.4,805.6 1127.6,800.0 1128.9,807.4 1130.1,820.2 1131.4,801.7 1132.7,796.3 1133.9,790.4 1135.2,777.0 1136.4,779.1 1137.7,798.2 1139.0,779.7 1140.2,788.8 1141.5,797.1 1142.7,776.7 1144.0,790.5 1145.3,801.3 1146.5,788.0 1147.8,791.9 1149.0,786.6 1150.3,789.9 1151.6,804.5 1152.8,777.9 1154.1,789.5 1155.3,781.2 1156.6,796.9 1157.9,792.2 1159.1,777.7 1160.4,780.9 1161.6,789.6 1162.9,788.6 1164.2,777.1 1165.4,794.7 1166.7,780.9 1167.9,782.7 1169.2,789.2 1170.5,785.5 1171.7,773.0 1173.0,788.1 1174.2,788.6 1175.5,781.8 1176.8,795.0 1178.0,779.2 1179.3,780.7 1180.5,776.4 1181.8,790.2 1183.1,781.4 1184.3,804.5 1185.6,780.7 1186.8,807.9 1188.1,813.1 1189.4,815.7 1190.6,796.2 1191.9,798.1 1193.1,809.7 1194.4,783.5 1195.7,787.6 1196.9,792.9 1198.2,783.7 1199.4,789.1 1200.7,781.4 1202.0,776.8 1203.2,790.9 1204.5,782.1 1205.7,788.0 1207.0,777.2 1208.3,784.2 1209.5,769.9 1210.8,781.1 1212.0,802.7 1213.3,801.8 1214.6,808.0 1215.8,804.0 1217.1,815.1 1218.3,793.0 1219.6,799.9 1220.9,791.8 1222.1,776.2 1223.4,799.3 1224.6,780.9 1225.9,789.9 1227.2,797.8 1228.4,790.9 1229.7,781.2 1230.9,786.5 1232.2,811.0 1233.5,787.1 1234.7,781.4 1236.0,784.5 1237.2,794.7 1238.5,794.7 1239.8,787.9 1241.0,782.7 1242.3,785.3 1243.5,785.8 1244.8,782.2 1246.1,786.0 1247.3,777.7 1248.6,786.5 1249.8,794.2 1251.1,782.6 1252.4,789.3 1253.6,780.3 1254.9,781.8 1256.1,784.6 1257.4,776.1 1258.7,778.4 1259.9,776.9 1261.2,776.9 1262.4,784.6 1263.7,792.0 1265.0,783.9 1266.2,794.5 1267.5,796.5 1268.7,782.0 1270.0,781.4 1271.3,792.3 1272.5,776.7 1273.8,778.4 1275.0,783.3 1276.3,776.7 1277.6,782.0 1278.8,784.2 1280.1,810.4 1281.3,824.0 1282.6,813.4 1283.9,805.9 1285.1,823.7 1286.4,815.6 1287.6,827.9 1288.9,821.8 1290.2,823.4 1291.4,824.9 1292.7,826.1 1293.9,814.9 1295.2,832.6 1296.5,835.2 1297.7,827.4 1299.0,810.1 1300.2,833.0 1301.5,829.2 1302.8,823.0 1304.0,835.8 1305.3,824.3 1306.5,841.4 1307.8,834.9 1309.1,842.9 1310.3,808.2 1311.6,812.9 1312.8,834.3 1314.1,840.1 1315.4,819.8 1316.6,823.4 1317.9,826.5 1319.1,844.9 1320.4,835.6 1321.7,820.7 1322.9,818.8 1324.2,837.1 1325.4,836.8 1326.7,815.5 1328.0,819.6 1329.2,825.2 1330.5,813.7 1331.7,826.7 1333.0,836.7 1334.3,837.1 1335.5,832.6 1336.8,820.5 1338.0,806.3 1339.3,821.9 1340.6,824.7 1341.8,837.1 1343.1,837.8 1344.3,838.7 1345.6,808.8 1346.9,817.0 1348.1,837.4 1349.4,838.1 1350.6,822.8 1351.9,801.2 1353.2,817.6 1354.4,826.1 1355.7,799.7 1356.9,803.5 1358.2,799.9 1359.5,814.8 1360.7,790.1 1362.0,832.5 1363.2,812.6 1364.5,799.4 1365.8,812.6 1367.0,804.0 1368.3,820.1 1369.5,809.9 1370.8,822.3 1372.1,822.6 1373.3,802.4 1374.6,795.2 1375.8,806.8 1377.1,821.6 1378.4,817.7 1379.6,801.7 1380.9,793.7 1382.1,796.4 1383.4,807.2 1384.7,788.9 1385.9,781.3 1387.2,786.1 1388.4,791.6 1389.7,784.1 1391.0,796.7 1392.2,798.1 1393.5,813.5 1394.7,795.9 1396.0,801.0 1397.3,803.3 1398.5,816.3 1399.8,811.6 1401.0,782.8 1402.3,776.9 1403.6,782.6 1404.8,783.0 1406.1,789.2 1407.3,781.8 1408.6,784.3 1409.9,791.0 1411.1,773.4 1412.4,790.4 1413.6,783.7 1414.9,778.0 1416.2,789.1 1417.4,785.5 1418.7,788.0 1419.9,775.0 1421.2,782.5 1422.5,767.4 1423.7,790.1 1425.0,780.8 1426.2,785.1 1427.5,784.2 1428.8,780.4 1430.0,775.3 1431.3,796.4 1432.5,789.5 1433.8,783.1 1435.1,793.5 1436.3,771.8 1437.6,776.8 1438.8,780.4 1440.1,784.5 1441.4,783.2 1442.6,786.1 1443.9,789.2 1445.1,794.5 1446.4,782.5 1447.7,782.7 1448.9,783.9 1450.2,772.7 1451.4,777.8 1452.7,788.8 1454.0,802.9 1455.2,793.6 1456.5,783.2 1457.7,782.8 1459.0,787.4 1460.3,784.4 1461.5,777.5 1462.8,798.3 1464.0,788.7 1465.3,783.6 1466.6,784.8 1467.8,780.5 1469.1,787.8 1470.3,800.7 1471.6,778.0 1472.9,785.0 1474.1,787.5 1475.4,785.3 1476.6,781.2 1477.9,779.0 1479.2,781.2 1480.4,785.5 1481.7,789.4 1482.9,777.0 1484.2,781.0 1485.5,781.6 1486.7,780.4 1488.0,805.2 1489.2,787.8 1490.5,780.1 1491.8,776.5 1493.0,788.3 1494.3,798.4 1495.5,787.6 1496.8,780.5 1498.1,788.2 1499.3,804.3 1500.6,785.6 1501.8,813.4 1503.1,808.8 1504.4,808.9 1505.6,816.7 1506.9,806.3 1508.1,825.2 1509.4,813.6 1510.7,823.8 1511.9,805.8 1513.2,823.7 1514.4,816.8 1515.7,805.0 1517.0,806.9 1518.2,808.3 1519.5,820.4 1520.7,821.5 1522.0,815.7 1523.3,821.6 1524.5,809.3 1525.8,796.0 1527.0,781.9 1528.3,782.0 1529.6,784.3 1530.8,787.3 1532.1,787.1 1533.3,795.2 1534.6,789.2 1535.9,784.2 1537.1,780.6 1538.4,792.8 1539.6,785.4 1540.9,778.1 1542.2,787.8 1543.4,796.4 1544.7,803.3 1545.9,825.4 1547.2,808.5 1548.5,840.5 1549.7,801.1 1551.0,817.9 1552.2,808.0 1553.5,820.1 1554.8,789.7 1556.0,807.4 1557.3,827.0 1558.5,812.6 1559.8,814.4 1561.1,808.3 1562.3,807.4 1563.6,816.9 1564.8,807.1 1566.1,805.7 1567.4,787.4 1568.6,795.9 1569.9,779.6 1571.1,782.4 1572.4,784.4 1573.7,786.2 1574.9,794.6 1576.2,779.5 1577.4,790.5 1578.7,801.4 1580.0,832.2 1581.2,814.4 1582.5,796.9 1583.7,798.1 1585.0,805.2 1586.3,805.8 1587.5,782.6 1588.8,788.1 1590.0,773.4 1591.3,791.6 1592.6,785.1 1593.8,788.9 1595.1,788.9 1596.3,812.5 1597.6,791.3 1598.9,780.3 1600.1,793.3 1601.4,799.8 1602.6,802.8 1603.9,781.6 1605.2,798.0 1606.4,781.2 1607.7,786.0 1608.9,803.5 1610.2,800.4 1611.5,806.4 1612.7,812.1 1614.0,808.0 1615.2,807.0 1616.5,788.4 1617.8,784.2 1619.0,787.7 1620.3,786.2 1621.5,796.1 1622.8,779.0 1624.1,782.4 1625.3,811.5 1626.6,777.7 1627.8,770.7 1629.1,773.4 1630.4,788.3 1631.6,781.1 1632.9,780.5 1634.1,792.6 1635.4,799.7 1636.7,787.6 1637.9,781.6 1639.2,786.7 1640.4,790.8 1641.7,801.8 1643.0,780.1 1644.2,787.9 1645.5,785.6 1646.7,777.4 1648.0,786.7 1649.3,783.9 1650.5,789.2 1651.8,796.7 1653.0,778.3 1654.3,771.3 1655.6,782.7 1656.8,781.7 1658.1,785.8 1659.3,776.0 1660.6,779.9 1661.9,780.1 1663.1,795.7 1664.4,778.4 1665.6,791.1 1666.9,784.9 1668.2,783.1 1669.4,787.7 1670.7,798.6 1671.9,790.9 1673.2,783.6 1674.5,800.2 1675.7,783.6 1677.0,782.5 1678.2,785.2 1679.5,779.1 1680.8,786.6 1682.0,785.8 1683.3,783.3 1684.5,791.5 1685.8,797.5 1687.1,782.0 1688.3,789.9 1689.6,770.6 1690.8,785.5 1692.1,784.2 1693.4,783.6 1694.6,772.0 1695.9,789.9 1697.1,804.8 1698.4,825.2 1699.7,836.8 1700.9,826.1 1702.2,805.3 1703.4,833.4 1704.7,817.1 1706.0,804.1 1707.2,822.5 1708.5,829.2 1709.7,824.5 1711.0,839.2 1712.3,818.1 1713.5,810.4 1714.8,815.0 1716.0,827.9 1717.3,844.1 1718.6,831.1 1719.8,811.9 1721.1,845.7 1722.3,814.3 1723.6,815.9 1724.9,839.6 1726.1,826.2 1727.4,837.3 1728.6,818.2 1729.9,805.6 1731.2,824.0 1732.4,816.4 1733.7,826.4 1734.9,818.6 1736.2,815.0 1737.5,826.4 1738.7,809.0 1740.0,839.3 1741.2,793.9 1742.5,804.6 1743.8,811.4 1745.0,837.1 1746.3,809.5 1747.5,802.5 1748.8,819.9 1750.1,814.6 1751.3,818.0 1752.6,826.4 1753.8,819.7 1755.1,839.7 1756.4,798.3 1757.6,826.7 1758.9,831.4 1760.1,803.9 1761.4,809.0 1762.7,817.4 1763.9,809.9 1765.2,796.7 1766.4,796.3 1767.7,805.8 1769.0,823.5 1770.2,800.8 1771.5,798.1 1772.7,777.2 1774.0,775.6 1775.3,795.2 1776.5,782.0 1777.8,793.9 1779.0,793.8 1780.3,785.7 1781.6,800.8 1782.8,780.8 1784.1,796.6 1785.3,773.5 1786.6,786.2 1787.9,790.6 1789.1,776.3 1790.4,789.4 1791.6,778.4 1792.9,791.0 1794.2,786.5 1795.4,789.0 1796.7,794.4 1797.9,789.4 1799.2,801.0 1800.5,787.1 1801.7,791.6 1803.0,789.9 1804.2,800.2 1805.5,798.0 1806.8,798.8 1808.0,790.8 1809.3,798.2 1810.5,805.6 1811.8,813.4 1813.1,775.2 1814.3,783.3 1815.6,782.8 1816.8,787.0 1818.1,794.8 1819.4,805.5 1820.6,789.7 1821.9,790.7 1823.1,788.3 1824.4,785.5 1825.7,779.7 1826.9,787.3 1828.2,793.8 1829.4,777.9 1830.7,801.5 1832.0,779.4 1833.2,790.0 1834.5,788.8 1835.7,799.2 1837.0,796.2 1838.3,783.8 1839.5,790.4 1840.8,793.3 1842.0,784.0 1843.3,776.7 1844.6,776.7 1845.8,792.1 1847.1,778.2 1848.3,791.1 1849.6,782.7 1850.9,798.6 1852.1,791.5 1853.4,785.5 1854.6,779.6 1855.9,788.3 1857.2,791.4 1858.4,799.7 1859.7,814.0 1860.9,825.8 1862.2,808.5 1863.5,828.9 1864.7,836.2 1866.0,819.4 1867.2,804.6 1868.5,817.2 1869.8,809.6 1871.0,814.9 1872.3,826.6 1873.5,810.5 1874.8,826.2 1876.1,823.6 1877.3,814.2 1878.6,814.9 1879.8,815.9 1881.1,828.9 1882.4,813.9 1883.6,811.1 1884.9,820.8 1886.1,794.8 1887.4,795.2" stroke="#008000"/><polyline points="73.0,946.0 74.3,947.0 75.5,947.0 76.8,947.0 78.0,947.0 79.3,947.0 80.6,947.0 81.8,947.0 83.1,947.0 84.3,947.0 85.6,947.0 86.9,947.0 88.1,947.0 89.4,946.0 90.6,945.1 91.9,947.0 93.2,947.0 94.4,947.0 95.7,946.0 96.9,947.0 98.2,947.0 99.5,947.0 100.7,947.0 102.0,947.0 103.2,947.0 104.5,947.0 105.8,945.1 107.0,947.0 108.3,947.0 109.5,947.0 110.8,947.0 112.1,947.0 113.3,948.0 114.6,947.0 115.8,947.0 117.1,947.0 118.4,947.0 119.6,947.0 120.9,947.4 122.1,946.6 123.4,946.8 124.7,946.9 125.9,948.0 127.2,947.1 128.4,948.1 129.7,948.2 131.0,947.3 132.2,948.3 133.5,948.4 134.7,948.4 136.0,948.5 137.3,948.5 138.5,948.6 139.8,947.6 141.0,948.6 142.3,948.7 143.6,948.7 144.8,951.6 146.1,948.7 147.3,948.7 148.6,948.7 149.9,947.8 151.1,948.7 152.4,948.7 153.6,948.7 154.9,948.7 156.2,948.7 157.4,948.7 158.7,948.6 159.9,948.6 161.2,948.6 162.5,948.5 163.7,949.5 165.0,948.5 166.2,948.4 167.5,948.3 168.8,948.3 170.0,948.2 171.3,948.1 172.5,949.0 173.8,948.0 175.1,947.9 176.3,947.8 177.6,947.6 178.8,947.4 180.1,947.0 181.4,948.0 182.6,947.0 183.9,947.0 185.1,947.0 186.4,947.0 187.7,947.0 188.9,947.0 190.2,947.0 191.4,947.0 192.7,948.0 194.0,948.9 195.2,947.0 196.5,947.0 197.7,947.0 199.0,947.0 200.3,947.0 201.5,947.0 202.8,947.0 204.0,948.0 205.3,947.0 206.6,947.0 207.8,947.0 209.1,947.0 210.3,947.0 211.6,947.0 212.9,948.0 214.1,946.0 215.4,947.0 216.6,947.0 217.9,947.0 219.2,947.0 220.4,947.0 221.7,947.0 222.9,948.0 224.2,948.9 225.5,947.0 226.7,947.0 228.0,947.0 229.2,947.0 230.5,947.0 231.8,947.0 233.0,947.0 234.3,947.0 235.5,947.0 236.8,947.0 238.1,947.0 239.3,947.0 240.6,947.0 241.8,946.0 243.1,947.0 244.4,947.0 245.6,947.0 246.9,947.0 248.1,947.0 249.4,947.0 250.7,947.0 251.9,948.0 253.2,947.0 254.4,947.0 255.7,947.0 257.0,947.0 258.2,947.0 259.5,947.0 260.7,947.0 262.0,945.1 263.3,947.0 264.5,947.0 265.8,947.0 267.0,947.0 268.3,947.0 269.6,946.0 270.8,946.0 272.1,947.0 273.3,947.0 274.6,947.0 275.9,947.0 277.1,947.0 278.4,947.0 279.6,947.0 280.9,947.0 282.2,947.0 283.4,947.0 284.7,947.0 285.9,947.0 287.2,947.0 288.5,947.0 289.7,947.0 291.0,947.0 292.2,947.0 293.5,947.0 294.8,946.0 296.0,947.0 297.3,947.0 298.5,947.0 299.8,947.0 301.1,947.0 302.3,947.0 303.6,947.0 304.8,947.0 306.1,947.0 307.4,947.0 308.6,947.0 309.9,947.0 311.1,945.1 312.4,947.0 313.7,947.0 314.9,946.0 316.2,947.0 317.4,947.0 318.7,947.0 320.0,947.0 321.2,947.0 322.5,947.0 323.7,947.0 325.0,946.0 326.3,947.0 327.5,947.0 328.8,947.0 330.0,946.0 331.3,947.0 332.6,947.0 333.8,947.0 335.1,947.0 336.3,947.0 337.6,947.0 338.9,947.0 340.1,947.0 341.4,947.0 342.6,948.9 343.9,947.0 345.2,947.0 346.4,947.0 347.7,948.0 348.9,947.0 350.2,947.0 351.5,947.0 352.7,947.0 354.0,947.0 355.2,947.0 356.5,947.0 357.8,947.0 359.0,949.9 360.3,947.0 361.5,948.0 362.8,947.0 364.1,946.0 365.3,947.0 366.6,947.0 367.8,947.0 369.1,947.0 370.4,948.0 371.6,947.0 372.9,947.0 374.1,947.0 375.4,947.0 376.7,947.0 377.9,947.0 379.2,947.0 380.4,947.0 381.7,948.9 383.0,947.0 384.2,947.0 385.5,947.0 386.7,945.1 388.0,945.1 389.3,948.0 390.5,948.0 391.8,947.0 393.0,947.0 394.3,947.0 395.6,946.0 396.8,945.1 398.1,947.0 399.3,947.0 400.6,947.0 401.9,947.0 403.1,947.0 404.4,948.9 405.6,948.0 406.9,947.0 408.2,947.0 409.4,947.0 410.7,947.0 411.9,947.0 413.2,947.0 414.5,945.1 415.7,947.0 417.0,947.0 418.2,948.0 419.5,947.0 420.8,947.0 422.0,947.0 423.3,947.0 424.5,948.0 425.8,947.0 427.1,945.1 428.3,947.0 429.6,947.0 430.8,947.0 432.1,947.0 433.4,947.0 434.6,947.0 435.9,947.0 437.1,947.0 438.4,947.0 439.7,947.0 440.9,947.0 442.2,947.0 443.4,947.0 444.7,947.0 446.0,947.0 447.2,947.0 448.5,947.0 449.7,948.9 451.0,947.0 452.3,947.0 453.5,947.0 454.8,947.0 456.0,947.0 457.3,947.0 458.6,946.0 459.8,947.0 461.1,947.0 462.3,946.0 463.6,946.0 464.9,947.0 466.1,948.0 467.4,947.0 468.6,947.0 469.9,947.0 471.2,947.0 472.4,947.0 473.7,947.0 474.9,947.0 476.2,947.0 477.5,947.0 478.7,947.0 480.0,948.0 481.2,947.0 482.5,947.0 483.8,947.0 485.0,947.0 486.3,947.0 487.5,947.0 488.8,947.0 490.1,947.0 491.3,946.0 492.6,947.0 493.8,947.0 495.1,947.0 496.4,947.0 497.6,947.0 498.9,947.0 500.1,947.0 501.4,947.0 502.7,946.0 503.9,947.0 505.2,947.0 506.4,947.0 507.7,947.0 509.0,946.0 510.2,947.0 511.5,947.0 512.7,947.0 514.0,947.0 515.3,947.0 516.5,947.0 517.8,947.0 519.0,948.9 520.3,947.0 521.6,947.0 522.8,947.0 524.1,946.0 525.3,946.0 526.6,947.0 527.9,947.0 529.1,947.0 530.4,947.0 531.6,948.0 532.9,947.0 534.2,947.0 535.4,947.0 536.7,947.0 537.9,947.0 539.2,947.0 540.5,947.0 541.7,947.0 543.0,947.0 544.2,947.0 545.5,947.0 546.8,947.0 548.0,947.0 549.3,947.0 550.5,947.0 551.8,947.0 553.1,947.0 554.3,947.0 555.6,947.0 556.8,947.0 558.1,948.9 559.4,948.0 560.6,946.0 561.9,946.0 563.1,947.0 564.4,947.0 565.7,947.0 566.9,947.0 568.2,947.0 569.4,947.0 570.7,948.0 572.0,947.0 573.2,947.0 574.5,947.0 575.7,947.0 577.0,947.0 578.3,947.0 579.5,947.0 580.8,947.0 582.0,947.0 583.3,947.0 584.6,948.0 585.8,947.0 587.1,947.0 588.3,947.0 589.6,947.0 590.9,946.0 592.1,947.0 593.4,947.0 594.6,947.0 595.9,947.0 597.2,947.0 598.4,947.0 599.7,947.0 600.9,946.0 602.2,947.0 603.5,947.0 604.7,947.0 606.0,947.0 607.2,947.0 608.5,947.0 609.8,947.0 611.0,947.0 612.3,947.0 613.5,946.0 614.8,947.0 616.1,947.0 617.3,947.0 618.6,946.0 619.8,947.0 621.1,947.0 622.4,947.0 623.6,947.0 624.9,947.0 626.1,948.0 627.4,947.0 628.7,945.1 629.9,947.0 631.2,947.0 632.4,947.0 633.7,947.0 635.0,947.0 636.2,947.0 637.5,947.0 638.7,947.0 640.0,948.0 641.3,947.0 642.5,947.0 643.8,947.0 645.0,948.0 646.3,947.0 647.6,947.0 648.8,947.0 650.1,946.0 651.3,947.0 652.6,947.0 653.9,947.0 655.1,947.0 656.4,947.0 657.6,947.0 658.9,947.0 660.2,947.0 661.4,947.0 662.7,947.0 663.9,947.0 665.2,947.0 666.5,947.0 667.7,947.0 669.0,947.0 670.2,947.0 671.5,947.0 672.8,947.0 674.0,947.0 675.3,946.0 676.5,947.0 677.8,947.0 679.1,947.0 680.3,947.0 681.6,947.0 682.8,946.0 684.1,947.0 685.4,947.0 686.6,947.0 687.9,945.1 689.1,947.0 690.4,947.0 691.7,947.0 692.9,947.0 694.2,947.0 695.4,947.0 696.7,947.0 698.0,947.0 699.2,947.0 700.5,947.0 701.7,947.0 703.0,947.0 704.3,946.0 705.5,947.0 706.8,947.0 708.0,947.0 709.3,946.0 710.6,947.0 711.8,946.0 713.1,947.0 714.3,948.0 715.6,947.0 716.9,947.0 718.1,947.0 719.4,948.0 720.6,947.0 721.9,947.0 723.2,947.0 724.4,947.0 725.7,947.0 726.9,947.0 728.2,947.0 729.5,945.1 730.7,947.0 732.0,948.0 733.2,947.0 734.5,947.0 735.8,947.0 737.0,946.0 738.3,947.0 739.5,947.0 740.8,947.0 742.1,947.0 743.3,948.0 744.6,947.0 745.8,947.0 747.1,947.0 748.4,947.0 749.6,947.0 750.9,947.0 752.1,947.0 753.4,946.0 754.7,947.0 755.9,947.0 757.2,947.0 758.4,947.0 759.7,947.0 761.0,947.0 762.2,946.0 763.5,947.0 764.7,947.0 766.0,947.0 767.3,947.0 768.5,947.0 769.8,947.0 771.0,947.0 772.3,947.0 773.6,947.0 774.8,947.0 776.1,947.0 777.3,947.0 778.6,947.0 779.9,948.0 781.1,947.0 782.4,947.0 783.6,947.0 784.9,947.0 786.2,947.0 787.4,947.0 788.7,947.0 789.9,947.0 791.2,947.0 792.5,947.0 793.7,947.0 795.0,947.0 796.2,947.0 797.5,947.0 798.8,947.0 800.0,946.0 801.3,947.0 802.5,947.0 803.8,946.0 805.1,947.0 806.3,947.0 807.6,947.0 808.8,947.0 810.1,947.0 811.4,948.0 812.6,947.0 813.9,947.0 815.1,947.0 816.4,948.0 817.7,947.0 818.9,947.0 820.2,947.0 821.4,947.0 822.7,947.0 824.0,947.0 825.2,947.0 826.5,947.0 827.7,948.0 829.0,947.0 830.3,947.0 831.5,947.0 832.8,946.0 834.0,947.0 835.3,947.0 836.6,947.0 837.8,947.0 839.1,947.0 840.3,947.0 841.6,947.0 842.9,948.0 844.1,948.0 845.4,947.0 846.6,947.0 847.9,947.0 849.2,947.0 850.4,947.0 851.7,947.0 852.9,947.0 854.2,947.0 855.5,947.0 856.7,947.0 858.0,947.0 859.2,947.0 860.5,947.0 861.8,947.0 863.0,947.0 864.3,947.0 865.5,947.0 866.8,947.0 868.1,945.1 869.3,947.0 870.6,947.0 871.8,947.0 873.1,947.0 874.4,947.0 875.6,947.0 876.9,948.0 878.1,948.9 879.4,948.9 880.7,948.0 881.9,948.0 883.2,947.0 884.4,948.9 885.7,948.0 887.0,947.0 888.2,947.0 889.5,947.0 890.7,947.0 892.0,947.0 893.3,947.0 894.5,947.0 895.8,947.0 897.0,947.0 898.3,945.1 899.6,948.0 900.8,947.0 902.1,947.0 903.3,947.0 904.6,947.0 905.9,947.0 907.1,947.0 908.4,947.0 909.6,948.0 910.9,947.0 912.2,947.0 913.4,947.0 914.7,935.5 915.9,935.5 917.2,935.5 918.5,935.5 919.7,935.5 921.0,935.5 922.2,935.5 923.5,935.5 924.8,935.5 926.0,935.5 927.3,935.5 928.5,935.5 929.8,935.5 931.1,935.5 932.3,935.5 933.6,935.5 934.8,935.5 936.1,947.0 937.4,947.0 938.6,947.0 939.9,947.0 941.1,947.0 942.4,386.4 943.7,386.4 944.9,481.2 946.2,481.2 947.4,481.2 948.7,481.2 950.0,728.5 951.2,948.1 952.5,948.1 953.7,948.1 955.0,948.1 956.3,948.1 957.5,948.1 958.8,948.1 960.0,948.1 961.3,948.1 962.6,988.4 963.8,988.4 965.1,988.4 966.3,988.4 967.6,988.4 968.9,988.4 970.1,988.4 971.4,988.4 972.6,988.4 973.9,988.4 975.2,988.4 976.4,947.0 977.7,947.0 978.9,949.9 980.2,947.0 981.5,946.0 982.7,947.0 984.0,947.0 985.2,947.0 986.5,947.0 987.8,947.0 989.0,947.0 990.3,947.0 991.5,945.1 992.8,947.0 994.1,946.0 995.3,947.0 996.6,947.0 997.8,947.0 999.1,946.0 1000.4,947.0 1001.6,948.0 1002.9,947.0 1004.1,947.0 1005.4,947.0 1006.7,946.0 1007.9,948.9 1009.2,947.0 1010.4,947.0 1011.7,947.0 1013.0,947.0 1014.2,947.0 1015.5,947.0 1016.7,947.0 1018.0,947.0 1019.3,947.0 1020.5,947.0 1021.8,947.0 1023.0,947.0 1024.3,947.0 1025.6,948.0 1026.8,947.0 1028.1,947.0 1029.3,947.0 1030.6,947.0 1031.9,947.0 1033.1,946.0 1034.4,947.0 1035.6,947.0 1036.9,947.0 1038.2,947.0 1039.4,947.0 1040.7,947.0 1041.9,947.0 1043.2,948.0 1044.5,947.0 1045.7,947.0 1047.0,947.0 1048.2,947.0 1049.5,947.0 1050.8,947.0 1052.0,947.0 1053.3,947.0 1054.5,947.0 1055.8,947.0 1057.1,947.0 1058.3,947.0 1059.6,946.0 1060.8,947.0 1062.1,947.0 1063.4,947.0 1064.6,947.0 1065.9,947.0 1067.1,947.0 1068.4,947.0 1069.7,947.0 1070.9,947.0 1072.2,944.1 1073.4,947.0 1074.7,945.1 1076.0,947.0 1077.2,947.0 1078.5,947.0 1079.7,947.0 1081.0,947.0 1082.3,947.0 1083.5,948.0 1084.8,947.0 1086.0,947.0 1087.3,947.0 1088.6,947.0 1089.8,947.0 1091.1,947.0 1092.3,947.0 1093.6,948.0 1094.9,947.0 1096.1,948.0 1097.4,947.0 1098.6,947.0 1099.9,946.0 1101.2,947.0 1102.4,947.0 1103.7,947.0 1104.9,947.0 1106.2,947.0 1107.5,947.0 1108.7,947.0 1110.0,947.0 1111.2,947.0 1112.5,947.0 1113.8,947.0 1115.0,947.0 1116.3,947.0 1117.5,946.0 1118.8,947.0 1120.1,947.0 1121.3,947.0 1122.6,948.9 1123.8,947.0 1125.1,947.0 1126.4,947.0 1127.6,947.0 1128.9,947.0 1130.1,947.0 1131.4,947.0 1132.7,948.0 1133.9,947.0 1135.2,947.0 1136.4,947.0 1137.7,947.0 1139.0,947.0 1140.2,947.0 1141.5,947.0 1142.7,947.0 1144.0,946.0 1145.3,945.1 1146.5,947.0 1147.8,947.0 1149.0,947.0 1150.3,947.0 1151.6,947.0 1152.8,945.1 1154.1,947.0 1155.3,947.0 1156.6,947.0 1157.9,947.0 1159.1,947.0 1160.4,947.0 1161.6,947.0 1162.9,947.0 1164.2,947.0 1165.4,946.0 1166.7,947.0 1167.9,947.0 1169.2,948.9 1170.5,947.0 1171.7,947.0 1173.0,947.0 1174.2,947.0 1175.5,947.0 1176.8,947.0 1178.0,947.0 1179.3,947.0 1180.5,948.0 1181.8,947.0 1183.1,947.0 1184.3,947.0 1185.6,948.0 1186.8,947.0 1188.1,947.0 1189.4,947.0 1190.6,946.0 1191.9,947.0 1193.1,948.9 1194.4,947.0 1195.7,947.0 1196.9,947.0 1198.2,947.0 1199.4,947.0 1200.7,947.0 1202.0,947.0 1203.2,947.0 1204.5,947.0 1205.7,948.0 1207.0,947.0 1208.3,947.0 1209.5,948.0 1210.8,947.0 1212.0,947.0 1213.3,947.0 1214.6,948.0 1215.8,947.0 1217.1,947.0 1218.3,947.0 1219.6,947.0 1220.9,947.0 1222.1,947.0 1223.4,948.0 1224.6,947.0 1225.9,947.0 1227.2,947.0 1228.4,947.0 1229.7,947.0 1230.9,947.0 1232.2,947.0 1233.5,947.0 1234.7,947.0 1236.0,947.0 1237.2,947.0 1238.5,947.0 1239.8,947.0 1241.0,947.0 1242.3,947.0 1243.5,947.0 1244.8,947.0 1246.1,947.0 1247.3,947.0 1248.6,947.0 1249.8,947.0 1251.1,947.0 1252.4,947.0 1253.6,947.0 1254.9,948.0 1256.1,947.0 1257.4,947.0 1258.7,946.0 1259.9,947.0 1261.2,947.0 1262.4,947.0 1263.7,947.0 1265.0,947.0 1266.2,947.0 1267.5,947.0 1268.7,947.0 1270.0,947.0 1271.3,947.0 1272.5,946.0 1273.8,947.0 1275.0,947.0 1276.3,947.0 1277.6,947.0 1278.8,947.0 1280.1,947.0 1281.3,947.0 1282.6,947.0 1283.9,946.0 1285.1,947.0 1286.4,948.0 1287.6,947.0 1288.9,947.0 1290.2,947.0 1291.4,947.0 1292.7,947.0 1293.9,947.0 1295.2,947.0 1296.5,947.0 1297.7,947.0 1299.0,947.0 1300.2,948.9 1301.5,947.0 1302.8,947.0 1304.0,947.0 1305.3,948.0 1306.5,947.0 1307.8,947.0 1309.1,948.0 1310.3,947.0 1311.6,947.0 1312.8,947.0 1314.1,948.0 1315.4,947.0 1316.6,947.0 1317.9,947.0 1319.1,947.0 1320.4,947.0 1321.7,948.0 1322.9,947.0 1324.2,947.0 1325.4,947.0 1326.7,947.0 1328.0,947.0 1329.2,947.0 1330.5,947.0 1331.7,947.0 1333.0,947.0 1334.3,947.0 1335.5,947.0 1336.8,947.0 1338.0,947.0 1339.3,947.0 1340.6,947.0 1341.8,947.0 1343.1,947.0 1344.3,947.0 1345.6,947.0 1346.9,948.0 1348.1,947.0 1349.4,947.0 1350.6,947.0 1351.9,948.0 1353.2,947.0 1354.4,947.0 1355.7,947.0 1356.9,947.0 1358.2,947.0 1359.5,947.0 1360.7,948.0 1362.0,948.9 1363.2,947.0 1364.5,947.0 1365.8,947.0 1367.0,948.0 1368.3,947.0 1369.5,947.0 1370.8,947.0 1372.1,947.0 1373.3,947.0 1374.6,947.0 1375.8,948.0 1377.1,947.0 1378.4,948.9 1379.6,947.0 1380.9,947.0 1382.1,947.0 1383.4,947.0 1384.7,947.0 1385.9,947.0 1387.2,947.0 1388.4,947.0 1389.7,947.0 1391.0,947.0 1392.2,947.0 1393.5,947.0 1394.7,948.0 1396.0,947.0 1397.3,947.0 1398.5,947.0 1399.8,947.0 1401.0,947.0 1402.3,947.0 1403.6,948.9 1404.8,947.0 1406.1,947.0 1407.3,947.0 1408.6,947.0 1409.9,947.0 1411.1,947.0 1412.4,947.0 1413.6,946.0 1414.9,945.1 1416.2,946.0 1417.4,948.9 1418.7,947.0 1419.9,947.0 1421.2,945.1 1422.5,947.0 1423.7,947.0 1425.0,947.0 1426.2,947.0 1427.5,947.0 1428.8,947.0 1430.0,947.0 1431.3,947.0 1432.5,947.0 1433.8,947.0 1435.1,947.0 1436.3,947.0 1437.6,947.0 1438.8,948.0 1440.1,947.0 1441.4,947.0 1442.6,947.0 1443.9,947.0 1445.1,946.0 1446.4,947.0 1447.7,946.0 1448.9,947.0 1450.2,947.0 1451.4,947.0 1452.7,947.0 1454.0,947.0 1455.2,947.0 1456.5,947.0 1457.7,947.0 1459.0,947.0 1460.3,947.0 1461.5,947.0 1462.8,947.0 1464.0,947.0 1465.3,947.0 1466.6,947.0 1467.8,947.0 1469.1,947.0 1470.3,947.0 1471.6,947.0 1472.9,947.0 1474.1,947.0 1475.4,948.9 1476.6,947.0 1477.9,948.0 1479.2,947.0 1480.4,947.0 1481.7,947.0 1482.9,947.0 1484.2,947.0 1485.5,947.0 1486.7,947.0 1488.0,947.0 1489.2,947.0 1490.5,947.0 1491.8,947.0 1493.0,947.0 1494.3,947.0 1495.5,946.0 1496.8,947.0 1498.1,946.0 1499.3,947.0 1500.6,947.0 1501.8,947.0 1503.1,947.0 1504.4,947.0 1505.6,946.0 1506.9,946.0 1508.1,948.0 1509.4,947.0 1510.7,948.0 1511.9,947.0 1513.2,947.0 1514.4,947.0 1515.7,947.0 1517.0,947.0 1518.2,947.0 1519.5,947.0 1520.7,947.0 1522.0,947.0 1523.3,947.0 1524.5,947.0 1525.8,947.0 1527.0,947.0 1528.3,947.0 1529.6,947.0 1530.8,947.0 1532.1,947.0 1533.3,947.0 1534.6,947.0 1535.9,947.0 1537.1,948.0 1538.4,947.0 1539.6,947.0 1540.9,947.0 1542.2,947.0 1543.4,947.0 1544.7,947.0 1545.9,947.0 1547.2,947.0 1548.5,947.0 1549.7,947.0 1551.0,947.0 1552.2,947.0 1553.5,946.0 1554.8,947.0 1556.0,947.0 1557.3,947.0 1558.5,947.0 1559.8,947.0 1561.1,947.0 1562.3,947.0 1563.6,947.0 1564.8,947.0 1566.1,947.0 1567.4,945.1 1568.6,947.0 1569.9,947.0 1571.1,947.0 1572.4,947.0 1573.7,947.0 1574.9,948.0 1576.2,947.0 1577.4,947.0 1578.7,947.0 1580.0,947.0 1581.2,947.0 1582.5,947.0 1583.7,947.0 1585.0,947.0 1586.3,946.0 1587.5,947.0 1588.8,947.0 1590.0,947.0 1591.3,947.0 1592.6,948.0 1593.8,947.0 1595.1,947.0 1596.3,947.0 1597.6,947.0 1598.9,946.0 1600.1,947.0 1601.4,947.0 1602.6,947.0 1603.9,947.0 1605.2,947.0 1606.4,947.0 1607.7,947.0 1608.9,947.0 1610.2,947.0 1611.5,947.0 1612.7,947.0 1614.0,947.0 1615.2,948.9 1616.5,947.0 1617.8,947.0 1619.0,947.0 1620.3,947.0 1621.5,947.0 1622.8,946.0 1624.1,947.0 1625.3,947.0 1626.6,946.0 1627.8,947.0 1629.1,947.0 1630.4,947.0 1631.6,947.0 1632.9,947.0 1634.1,947.0 1635.4,947.0 1636.7,947.0 1637.9,947.0 1639.2,947.0 1640.4,947.0 1641.7,947.0 1643.0,947.0 1644.2,947.0 1645.5,947.0 1646.7,947.0 1648.0,947.0 1649.3,947.0 1650.5,947.0 1651.8,947.0 1653.0,947.0 1654.3,946.0 1655.6,947.0 1656.8,947.0 1658.1,947.0 1659.3,947.0 1660.6,948.0 1661.9,947.0 1663.1,947.0 1664.4,947.0 1665.6,947.0 1666.9,947.0 1668.2,947.0 1669.4,947.0 1670.7,947.0 1671.9,947.0 1673.2,946.0 1674.5,947.0 1675.7,947.0 1677.0,947.0 1678.2,948.9 1679.5,947.0 1680.8,947.0 1682.0,947.0 1683.3,947.0 1684.5,947.0 1685.8,947.0 1687.1,946.0 1688.3,947.0 1689.6,947.0 1690.8,947.0 1692.1,947.0 1693.4,948.9 1694.6,947.0 1695.9,947.0 1697.1,947.0 1698.4,948.0 1699.7,947.0 1700.9,947.0 1702.2,947.0 1703.4,947.0 1704.7,947.0 1706.0,947.0 1707.2,947.0 1708.5,947.0 1709.7,947.0 1711.0,947.0 1712.3,947.0 1713.5,946.0 1714.8,946.0 1716.0,947.0 1717.3,947.0 1718.6,947.0 1719.8,947.0 1721.1,947.0 1722.3,947.0 1723.6,947.0 1724.9,948.0 1726.1,948.0 1727.4,946.0 1728.6,947.0 1729.9,947.0 1731.2,947.0 1732.4,947.0 1733.7,947.0 1734.9,947.0 1736.2,948.0 1737.5,947.0 1738.7,947.0 1740.0,947.0 1741.2,947.0 1742.5,947.0 1743.8,947.0 1745.0,947.0 1746.3,947.0 1747.5,947.0 1748.8,945.1 1750.1,946.0 1751.3,948.0 1752.6,947.0 1753.8,947.0 1755.1,947.0 1756.4,947.0 1757.6,947.0 1758.9,947.0 1760.1,947.0 1761.4,947.0 1762.7,947.0 1763.9,948.0 1765.2,946.0 1766.4,947.0 1767.7,947.0 1769.0,947.0 1770.2,947.0 1771.5,947.0 1772.7,947.0 1774.0,947.0 1775.3,947.0 1776.5,947.0 1777.8,947.0 1779.0,947.0 1780.3,948.0 1781.6,948.0 1782.8,947.0 1784.1,947.0 1785.3,947.0 1786.6,947.0 1787.9,948.0 1789.1,947.0 1790.4,948.0 1791.6,947.0 1792.9,947.0 1794.2,947.0 1795.4,947.0 1796.7,947.0 1797.9,947.0 1799.2,947.0 1800.5,947.0 1801.7,947.0 1803.0,947.0 1804.2,947.0 1805.5,947.0 1806.8,947.0 1808.0,947.0 1809.3,947.0 1810.5,947.0 1811.8,947.0 1813.1,947.0 1814.3,947.0 1815.6,948.0 1816.8,947.0 1818.1,947.0 1819.4,946.0 1820.6,947.0 1821.9,947.0 1823.1,947.0 1824.4,947.0 1825.7,947.0 1826.9,948.0 1828.2,947.0 1829.4,947.0 1830.7,947.0 1832.0,947.0 1833.2,947.0 1834.5,947.0 1835.7,947.0 1837.0,947.0 1838.3,947.0 1839.5,947.0 1840.8,947.0 1842.0,947.0 1843.3,947.0 1844.6,948.0 1845.8,947.0 1847.1,947.0 1848.3,947.0 1849.6,947.0 1850.9,947.0 1852.1,947.0 1853.4,947.0 1854.6,946.0 1855.9,947.0 1857.2,948.0 1858.4,947.0 1859.7,947.0 1860.9,947.0 1862.2,947.0 1863.5,948.9 1864.7,947.0 1866.0,947.0 1867.2,946.0 1868.5,947.0 1869.8,945.1 1871.0,947.0 1872.3,947.0 1873.5,947.0 1874.8,947.0 1876.1,947.0 1877.3,947.0 1878.6,947.0 1879.8,947.0 1881.1,947.0 1882.4,947.0 1883.6,947.0 1884.9,947.0 1886.1,946.0 1887.4,947.0" stroke="#00ff00"/><polyline points="73.0,969.1 74.3,966.8 75.5,966.8 76.8,966.8 78.0,966.8 79.3,966.8 80.6,966.8 81.8,966.8 83.1,966.8 84.3,966.8 85.6,966.8 86.9,966.8 88.1,966.8 89.4,966.8 90.6,966.8 91.9,966.8 93.2,966.8 94.4,966.8 95.7,966.8 96.9,966.8 98.2,966.8 99.5,966.8 100.7,966.8 102.0,966.8 103.2,966.8 104.5,966.8 105.8,969.1 107.0,966.8 108.3,966.8 109.5,966.8 110.8,966.8 112.1,966.8 113.3,966.8 114.6,966.8 115.8,969.1 117.1,966.8 118.4,966.8 119.6,966.8 120.9,966.8 122.1,966.8 123.4,969.1 124.7,966.8 125.9,966.8 127.2,966.8 128.4,966.8 129.7,966.8 131.0,966.8 132.2,966.8 133.5,966.8 134.7,966.8 136.0,966.8 137.3,964.5 138.5,966.8 139.8,966.8 141.0,966.8 142.3,969.1 143.6,966.8 144.8,966.8 146.1,964.5 147.3,966.8 148.6,966.8 149.9,966.8 151.1,966.8 152.4,966.8 153.6,966.8 154.9,966.8 156.2,966.8 157.4,964.5 158.7,966.8 159.9,969.1 161.2,966.8 162.5,966.8 163.7,966.8 165.0,966.8 166.2,966.8 167.5,966.8 168.8,966.8 170.0,966.8 171.3,966.8 172.5,966.8 173.8,966.8 175.1,966.8 176.3,966.8 177.6,966.8 178.8,966.8 180.1,966.8 181.4,966.8 182.6,966.8 183.9,966.8 185.1,966.8 186.4,966.8 187.7,969.1 188.9,966.8 190.2,966.8 191.4,966.8 192.7,966.8 194.0,966.8 195.2,966.8 196.5,966.8 197.7,966.8 199.0,966.8 200.3,966.8 201.5,966.8 202.8,966.8 204.0,966.8 205.3,966.8 206.6,966.8 207.8,966.8 209.1,966.8 210.3,966.8 211.6,966.8 212.9,966.8 214.1,966.8 215.4,966.8 216.6,966.8 217.9,966.8 219.2,966.8 220.4,966.8 221.7,966.8 222.9,966.8 224.2,966.8 225.5,966.8 226.7,966.8 228.0,966.8 229.2,966.8 230.5,966.8 231.8,966.8 233.0,966.8 234.3,966.8 235.5,966.8 236.8,966.8 238.1,966.8 239.3,966.8 240.6,966.8 241.8,966.8 243.1,966.8 244.4,966.8 245.6,966.8 246.9,966.8 248.1,966.8 249.4,966.8 250.7,966.8 251.9,964.5 253.2,966.8 254.4,966.8 255.7,969.1 257.0,966.8 258.2,966.8 259.5,966.8 260.7,966.8 262.0,966.8 263.3,966.8 264.5,966.8 265.8,966.8 267.0,966.8 268.3,966.8 269.6,966.8 270.8,966.8 272.1,966.8 273.3,966.8 274.6,966.8 275.9,969.1 277.1,966.8 278.4,966.8 279.6,966.8 280.9,966.8 282.2,966.8 283.4,966.8 284.7,966.8 285.9,966.8 287.2,966.8 288.5,966.8 289.7,966.8 291.0,966.8 292.2,966.8 293.5,966.8 294.8,966.8 296.0,966.8 297.3,966.8 298.5,966.8 299.8,966.8 301.1,966.8 302.3,966.8 303.6,966.8 304.8,966.8 306.1,966.8 307.4,966.8 308.6,966.8 309.9,966.8 311.1,966.8 312.4,966.8 313.7,966.8 314.9,964.5 316.2,966.8 317.4,966.8 318.7,966.8 320.0,966.8 321.2,966.8 322.5,964.5 323.7,966.8 325.0,966.8 326.3,966.8 327.5,966.8 328.8,966.8 330.0,966.8 331.3,966.8 332.6,966.8 333.8,966.8 335.1,966.8 336.3,966.8 337.6,966.8 338.9,966.8 340.1,966.8 341.4,966.8 342.6,966.8 343.9,966.8 345.2,966.8 346.4,966.8 347.7,966.8 348.9,966.8 350.2,966.8 351.5,966.8 352.7,966.8 354.0,966.8 355.2,966.8 356.5,966.8 357.8,966.8 359.0,966.8 360.3,966.8 361.5,966.8 362.8,966.8 364.1,966.8 365.3,966.8 366.6,966.8 367.8,966.8 369.1,969.1 370.4,969.1 371.6,966.8 372.9,966.8 374.1,966.8 375.4,966.8 376.7,966.8 377.9,966.8 379.2,966.8 380.4,966.8 381.7,966.8 383.0,966.8 384.2,966.8 385.5,966.8 386.7,966.8 388.0,966.8 389.3,966.8 390.5,966.8 391.8,966.8 393.0,966.8 394.3,966.8 395.6,966.8 396.8,966.8 398.1,966.8 399.3,966.8 400.6,966.8 401.9,966.8 403.1,966.8 404.4,969.1 405.6,966.8 406.9,966.8 408.2,964.5 409.4,969.1 410.7,966.8 411.9,966.8 413.2,966.8 414.5,966.8 415.7,966.8 417.0,966.8 418.2,966.8 419.5,966.8 420.8,966.8 422.0,966.8 423.3,966.8 424.5,966.8 425.8,966.8 427.1,966.8 428.3,969.1 429.6,966.8 430.8,966.8 432.1,966.8 433.4,966.8 434.6,966.8 435.9,966.8 437.1,966.8 438.4,966.8 439.7,966.8 440.9,966.8 442.2,966.8 443.4,966.8 444.7,966.8 446.0,966.8 447.2,966.8 448.5,966.8 449.7,966.8 451.0,966.8 452.3,966.8 453.5,966.8 454.8,966.8 456.0,966.8 457.3,966.8 458.6,966.8 459.8,964.5 461.1,966.8 462.3,966.8 463.6,966.8 464.9,966.8 466.1,966.8 467.4,966.8 468.6,964.5 469.9,966.8 471.2,966.8 472.4,966.8 473.7,969.1 474.9,966.8 476.2,966.8 477.5,966.8 478.7,966.8 480.0,966.8 481.2,966.8 482.5,966.8 483.8,966.8 485.0,966.8 486.3,966.8 487.5,966.8 488.8,966.8 490.1,966.8 491.3,966.8 492.6,966.8 493.8,966.8 495.1,966.8 496.4,966.8 497.6,966.8 498.9,966.8 500.1,966.8 501.4,966.8 502.7,966.8 503.9,966.8 505.2,966.8 506.4,966.8 507.7,964.5 509.0,966.8 510.2,966.8 511.5,966.8 512.7,966.8 514.0,966.8 515.3,966.8 516.5,966.8 517.8,966.8 519.0,966.8 520.3,966.8 521.6,966.8 522.8,966.8 524.1,966.8 525.3,966.8 526.6,966.8 527.9,969.1 529.1,966.8 530.4,966.8 531.6,966.8 532.9,966.8 534.2,966.8 535.4,966.8 536.7,966.8 537.9,966.8 539.2,966.8 540.5,966.8 541.7,964.5 543.0,966.8 544.2,966.8 545.5,964.5 546.8,966.8 548.0,966.8 549.3,966.8 550.5,966.8 551.8,966.8 553.1,964.5 554.3,966.8 555.6,966.8 556.8,966.8 558.1,964.5 559.4,966.8 560.6,966.8 561.9,966.8 563.1,966.8 564.4,966.8 565.7,966.8 566.9,966.8 568.2,966.8 569.4,966.8 570.7,966.8 572.0,969.1 573.2,969.1 574.5,966.8 575.7,966.8 577.0,966.8 578.3,969.1 579.5,966.8 580.8,966.8 582.0,966.8 583.3,966.8 584.6,966.8 585.8,966.8 587.1,966.8 588.3,964.5 589.6,966.8 590.9,966.8 592.1,966.8 593.4,966.8 594.6,966.8 595.9,966.8 597.2,966.8 598.4,966.8 599.7,966.8 600.9,966.8 602.2,966.8 603.5,966.8 604.7,966.8 606.0,966.8 607.2,966.8 608.5,966.8 609.8,966.8 611.0,966.8 612.3,966.8 613.5,966.8 614.8,966.8 616.1,964.5 617.3,966.8 618.6,966.8 619.8,966.8 621.1,966.8 622.4,964.5 623.6,966.8 624.9,966.8 626.1,966.8 627.4,966.8 628.7,966.8 629.9,966.8 631.2,966.8 632.4,966.8 633.7,966.8 635.0,966.8 636.2,966.8 637.5,966.8 638.7,966.8 640.0,966.8 641.3,966.8 642.5,966.8 643.8,966.8 645.0,966.8 646.3,966.8 647.6,966.8 648.8,966.8 650.1,966.8 651.3,966.8 652.6,966.8 653.9,966.8 655.1,966.8 656.4,966.8 657.6,966.8 658.9,966.8 660.2,966.8 661.4,966.8 662.7,966.8 663.9,966.8 665.2,969.1 666.5,966.8 667.7,966.8 669.0,966.8 670.2,969.1 671.5,966.8 672.8,966.8 674.0,966.8 675.3,966.8 676.5,966.8 677.8,966.8 679.1,966.8 680.3,966.8 681.6,966.8 682.8,966.8 684.1,966.8 685.4,966.8 686.6,966.8 687.9,964.5 689.1,966.8 690.4,966.8 691.7,966.8 692.9,966.8 694.2,966.8 695.4,966.8 696.7,966.8 698.0,966.8 699.2,966.8 700.5,966.8 701.7,966.8 703.0,966.8 704.3,966.8 705.5,966.8 706.8,966.8 708.0,966.8 709.3,966.8 710.6,966.8 711.8,966.8 713.1,966.8 714.3,966.8 715.6,966.8 716.9,966.8 718.1,966.8 719.4,966.8 720.6,966.8 721.9,969.1 723.2,966.8 724.4,966.8 725.7,969.1 726.9,966.8 728.2,966.8 729.5,969.1 730.7,966.8 732.0,966.8 733.2,966.8 734.5,966.8 735.8,969.1 737.0,966.8 738.3,966.8 739.5,966.8 740.8,969.1 742.1,966.8 743.3,966.8 744.6,966.8 745.8,966.8 747.1,969.1 748.4,966.8 749.6,966.8 750.9,969.1 752.1,966.8 753.4,966.8 754.7,966.8 755.9,966.8 757.2,966.8 758.4,966.8 759.7,966.8 761.0,966.8 762.2,964.5 763.5,966.8 764.7,966.8 766.0,966.8 767.3,966.8 768.5,966.8 769.8,966.8 771.0,966.8 772.3,966.8 773.6,966.8 774.8,966.8 776.1,966.8 777.3,966.8 778.6,966.8 779.9,966.8 781.1,966.8 782.4,966.8 783.6,966.8 784.9,966.8 786.2,966.8 787.4,966.8 788.7,966.8 789.9,966.8 791.2,966.8 792.5,966.8 793.7,966.8 795.0,966.8 796.2,966.8 797.5,966.8 798.8,966.8 800.0,966.8 801.3,966.8 802.5,966.8 803.8,964.5 805.1,966.8 806.3,966.8 807.6,966.8 808.8,966.8 810.1,966.8 811.4,966.8 812.6,966.8 813.9,966.8 815.1,966.8 816.4,966.8 817.7,966.8 818.9,966.8 820.2,966.8 821.4,966.8 822.7,966.8 824.0,969.1 825.2,966.8 826.5,966.8 827.7,966.8 829.0,966.8 830.3,966.8 831.5,966.8 832.8,966.8 834.0,966.8 835.3,966.8 836.6,966.8 837.8,966.8 839.1,966.8 840.3,966.8 841.6,966.8 842.9,966.8 844.1,966.8 845.4,966.8 846.6,966.8 847.9,966.8 849.2,966.8 850.4,966.8 851.7,966.8 852.9,966.8 854.2,969.1 855.5,966.8 856.7,966.8 858.0,966.8 859.2,966.8 860.5,969.1 861.8,966.8 863.0,966.8 864.3,966.8 865.5,966.8 866.8,966.8 868.1,966.8 869.3,966.8 870.6,966.8 871.8,966.8 873.1,966.8 874.4,966.8 875.6,966.8 876.9,966.8 878.1,966.8 879.4,966.8 880.7,966.8 881.9,966.8 883.2,966.8 884.4,966.8 885.7,966.8 887.0,966.8 888.2,966.8 889.5,966.8 890.7,966.8 892.0,966.8 893.3,966.8 894.5,966.8 895.8,966.8 897.0,966.8 898.3,966.8 899.6,966.8 900.8,966.8 902.1,966.8 903.3,964.5 904.6,966.8 905.9,966.8 907.1,966.8 908.4,966.8 909.6,966.8 910.9,966.8 912.2,966.8 913.4,966.8 914.7,966.8 915.9,966.8 917.2,966.8 918.5,966.8 919.7,966.8 921.0,966.8 922.2,966.8 923.5,966.8 924.8,966.8 926.0,966.8 927.3,966.8 928.5,966.8 929.8,314.5 931.1,314.5 932.3,314.5 933.6,960.2 934.8,959.6 936.1,959.6 937.4,959.6 938.6,959.6 939.9,959.6 941.1,959.6 942.4,957.4 943.7,959.6 944.9,959.6 946.2,959.6 947.4,959.6 948.7,959.6 950.0,959.6 951.2,959.6 952.5,959.6 953.7,959.6 955.0,959.6 956.3,959.6 957.5,959.6 958.8,959.6 960.0,959.6 961.3,959.6 962.6,959.6 963.8,959.6 965.1,959.6 966.3,959.6 967.6,959.6 968.9,959.6 970.1,959.6 971.4,959.6 972.6,959.6 973.9,959.6 975.2,959.6 976.4,962.0 977.7,959.6 978.9,959.6 980.2,959.6 981.5,959.6 982.7,959.6 984.0,962.0 985.2,959.6 986.5,962.0 987.8,959.6 989.0,959.6 990.3,959.6 991.5,959.6 992.8,959.6 994.1,959.6 995.3,959.6 996.6,962.0 997.8,959.6 999.1,962.0 1000.4,959.6 1001.6,957.4 1002.9,959.6 1004.1,959.6 1005.4,959.6 1006.7,959.6 1007.9,959.6 1009.2,959.6 1010.4,959.6 1011.7,962.0 1013.0,959.6 1014.2,959.6 1015.5,959.6 1016.7,959.6 1018.0,959.6 1019.3,959.6 1020.5,959.6 1021.8,959.6 1023.0,959.6 1024.3,959.6 1025.6,957.4 1026.8,957.4 1028.1,959.6 1029.3,959.6 1030.6,959.6 1031.9,959.6 1033.1,959.6 1034.4,959.6 1035.6,959.6 1036.9,959.6 1038.2,959.6 1039.4,957.4 1040.7,959.6 1041.9,959.6 1043.2,959.6 1044.5,959.6 1045.7,959.6 1047.0,959.6 1048.2,959.6 1049.5,959.6 1050.8,959.6 1052.0,959.6 1053.3,959.6 1054.5,962.0 1055.8,959.6 1057.1,959.6 1058.3,959.6 1059.6,959.6 1060.8,959.6 1062.1,959.6 1063.4,959.6 1064.6,959.6 1065.9,959.6 1067.1,959.6 1068.4,959.6 1069.7,959.6 1070.9,959.6 1072.2,959.6 1073.4,959.6 1074.7,959.6 1076.0,959.6 1077.2,959.6 1078.5,959.6 1079.7,959.6 1081.0,959.6 1082.3,959.6 1083.5,959.6 1084.8,959.6 1086.0,959.6 1087.3,959.6 1088.6,959.6 1089.8,959.6 1091.1,959.6 1092.3,959.6 1093.6,959.6 1094.9,959.6 1096.1,959.6 1097.4,959.6 1098.6,959.6 1099.9,959.6 1101.2,959.6 1102.4,959.6 1103.7,959.6 1104.9,959.6 1106.2,959.6 1107.5,959.6 1108.7,959.6 1110.0,959.6 1111.2,959.6 1112.5,959.6 1113.8,959.6 1115.0,959.6 1116.3,959.6 1117.5,959.6 1118.8,959.6 1120.1,959.6 1121.3,959.6 1122.6,959.6 1123.8,959.6 1125.1,959.6 1126.4,959.6 1127.6,959.6 1128.9,959.6 1130.1,959.6 1131.4,959.6 1132.7,959.6 1133.9,959.6 1135.2,959.6 1136.4,959.6 1137.7,959.6 1139.0,959.6 1140.2,959.6 1141.5,959.6 1142.7,959.6 1144.0,959.6 1145.3,959.6 1146.5,959.6 1147.8,959.6 1149.0,959.6 1150.3,959.6 1151.6,959.6 1152.8,959.6 1154.1,959.6 1155.3,959.6 1156.6,959.6 1157.9,959.6 1159.1,962.0 1160.4,959.6 1161.6,959.6 1162.9,959.6 1164.2,959.6 1165.4,959.6 1166.7,959.6 1167.9,959.6 1169.2,959.6 1170.5,959.6 1171.7,959.6 1173.0,959.6 1174.2,959.6 1175.5,959.6 1176.8,959.6 1178.0,959.6 1179.3,959.6 1180.5,959.6 1181.8,959.6 1183.1,959.6 1184.3,959.6 1185.6,959.6 1186.8,959.6 1188.1,959.6 1189.4,959.6 1190.6,959.6 1191.9,959.6 1193.1,959.6 1194.4,959.6 1195.7,959.6 1196.9,959.6 1198.2,959.6 1199.4,959.6 1200.7,959.6 1202.0,959.6 1203.2,959.6 1204.5,959.6 1205.7,959.6 1207.0,959.6 1208.3,959.6 1209.5,959.6 1210.8,959.6 1212.0,957.4 1213.3,957.4 1214.6,959.6 1215.8,959.6 1217.1,959.6 1218.3,959.6 1219.6,959.6 1220.9,959.6 1222.1,959.6 1223.4,959.6 1224.6,959.6 1225.9,959.6 1227.2,959.6 1228.4,959.6 1229.7,959.6 1230.9,959.6 1232.2,962.0 1233.5,959.6 1234.7,959.6 1236.0,957.4 1237.2,959.6 1238.5,959.6 1239.8,959.6 1241.0,959.6 1242.3,959.6 1243.5,959.6 1244.8,959.6 1246.1,959.6 1247.3,959.6 1248.6,959.6 1249.8,959.6 1251.1,959.6 1252.4,959.6 1253.6,959.6 1254.9,959.6 1256.1,959.6 1257.4,959.6 1258.7,959.6 1259.9,959.6 1261.2,959.6 1262.4,959.6 1263.7,959.6 1265.0,959.6 1266.2,959.6 1267.5,959.6 1268.7,959.6 1270.0,959.6 1271.3,957.4 1272.5,959.6 1273.8,959.6 1275.0,959.6 1276.3,959.6 1277.6,959.6 1278.8,959.6 1280.1,959.6 1281.3,957.4 1282.6,959.6 1283.9,959.6 1285.1,959.6 1286.4,959.6 1287.6,959.6 1288.9,959.6 1290.2,959.6 1291.4,959.6 1292.7,959.6 1293.9,959.6 1295.2,959.6 1296.5,959.6 1297.7,959.6 1299.0,959.6 1300.2,959.6 1301.5,959.6 1302.8,959.6 1304.0,957.4 1305.3,957.4 1306.5,959.6 1307.8,959.6 1309.1,959.6 1310.3,957.4 1311.6,959.6 1312.8,959.6 1314.1,959.6 1315.4,959.6 1316.6,959.6 1317.9,959.6 1319.1,959.6 1320.4,959.6 1321.7,959.6 1322.9,959.6 1324.2,959.6 1325.4,959.6 1326.7,959.6 1328.0,959.6 1329.2,959.6 1330.5,959.6 1331.7,959.6 1333.0,959.6 1334.3,959.6 1335.5,962.0 1336.8,959.6 1338.0,959.6 1339.3,959.6 1340.6,959.6 1341.8,959.6 1343.1,962.0 1344.3,959.6 1345.6,959.6 1346.9,959.6 1348.1,959.6 1349.4,957.4 1350.6,959.6 1351.9,959.6 1353.2,959.6 1354.4,959.6 1355.7,959.6 1356.9,959.6 1358.2,959.6 1359.5,959.6 1360.7,959.6 1362.0,959.6 1363.2,959.6 1364.5,959.6 1365.8,959.6 1367.0,962.0 1368.3,959.6 1369.5,959.6 1370.8,959.6 1372.1,959.6 1373.3,959.6 1374.6,959.6 1375.8,959.6 1377.1,959.6 1378.4,957.4 1379.6,959.6 1380.9,959.6 1382.1,959.6 1383.4,959.6 1384.7,959.6 1385.9,959.6 1387.2,959.6 1388.4,962.0 1389.7,959.6 1391.0,957.4 1392.2,959.6 1393.5,959.6 1394.7,959.6 1396.0,959.6 1397.3,959.6 1398.5,959.6 1399.8,959.6 1401.0,959.6 1402.3,957.4 1403.6,959.6 1404.8,959.6 1406.1,959.6 1407.3,959.6 1408.6,959.6 1409.9,959.6 1411.1,959.6 1412.4,959.6 1413.6,957.4 1414.9,959.6 1416.2,959.6 1417.4,959.6 1418.7,959.6 1419.9,959.6 1421.2,959.6 1422.5,962.0 1423.7,959.6 1425.0,959.6 1426.2,959.6 1427.5,959.6 1428.8,959.6 1430.0,959.6 1431.3,959.6 1432.5,959.6 1433.8,959.6 1435.1,959.6 1436.3,959.6 1437.6,959.6 1438.8,959.6 1440.1,959.6 1441.4,959.6 1442.6,959.6 1443.9,959.6 1445.1,959.6 1446.4,957.4 1447.7,959.6 1448.9,959.6 1450.2,959.6 1451.4,959.6 1452.7,959.6 1454.0,959.6 1455.2,959.6 1456.5,959.6 1457.7,959.6 1459.0,959.6 1460.3,959.6 1461.5,959.6 1462.8,959.6 1464.0,959.6 1465.3,959.6 1466.6,959.6 1467.8,959.6 1469.1,959.6 1470.3,959.6 1471.6,959.6 1472.9,959.6 1474.1,959.6 1475.4,959.6 1476.6,959.6 1477.9,959.6 1479.2,959.6 1480.4,959.6 1481.7,959.6 1482.9,959.6 1484.2,959.6 1485.5,962.0 1486.7,959.6 1488.0,959.6 1489.2,957.4 1490.5,959.6 1491.8,959.6 1493.0,959.6 1494.3,959.6 1495.5,959.6 1496.8,959.6 1498.1,959.6 1499.3,959.6 1500.6,959.6 1501.8,959.6 1503.1,959.6 1504.4,959.6 1505.6,959.6 1506.9,959.6 1508.1,959.6 1509.4,959.6 1510.7,959.6 1511.9,957.4 1513.2,962.0 1514.4,959.6 1515.7,957.4 1517.0,959.6 1518.2,962.0 1519.5,959.6 1520.7,959.6 1522.0,959.6 1523.3,959.6 1524.5,959.6 1525.8,959.6 1527.0,959.6 1528.3,959.6 1529.6,959.6 1530.8,959.6 1532.1,959.6 1533.3,959.6 1534.6,959.6 1535.9,959.6 1537.1,962.0 1538.4,959.6 1539.6,959.6 1540.9,959.6 1542.2,959.6 1543.4,959.6 1544.7,959.6 1545.9,959.6 1547.2,959.6 1548.5,959.6 1549.7,959.6 1551.0,959.6 1552.2,962.0 1553.5,962.0 1554.8,959.6 1556.0,959.6 1557.3,959.6 1558.5,962.0 1559.8,959.6 1561.1,959.6 1562.3,962.0 1563.6,957.4 1564.8,959.6 1566.1,959.6 1567.4,959.6 1568.6,959.6 1569.9,959.6 1571.1,959.6 1572.4,959.6 1573.7,959.6 1574.9,959.6 1576.2,959.6 1577.4,959.6 1578.7,959.6 1580.0,959.6 1581.2,959.6 1582.5,959.6 1583.7,959.6 1585.0,959.6 1586.3,959.6 1587.5,957.4 1588.8,959.6 1590.0,959.6 1591.3,959.6 1592.6,959.6 1593.8,962.0 1595.1,959.6 1596.3,959.6 1597.6,962.0 1598.9,959.6 1600.1,959.6 1601.4,959.6 1602.6,959.6 1603.9,959.6 1605.2,959.6 1606.4,959.6 1607.7,959.6 1608.9,959.6 1610.2,959.6 1611.5,959.6 1612.7,959.6 1614.0,959.6 1615.2,959.6 1616.5,959.6 1617.8,959.6 1619.0,959.6 1620.3,959.6 1621.5,959.6 1622.8,959.6 1624.1,962.0 1625.3,959.6 1626.6,959.6 1627.8,959.6 1629.1,959.6 1630.4,959.6 1631.6,959.6 1632.9,959.6 1634.1,959.6 1635.4,959.6 1636.7,959.6 1637.9,959.6 1639.2,959.6 1640.4,959.6 1641.7,959.6 1643.0,959.6 1644.2,959.6 1645.5,959.6 1646.7,959.6 1648.0,959.6 1649.3,957.4 1650.5,959.6 1651.8,959.6 1653.0,959.6 1654.3,959.6 1655.6,959.6 1656.8,959.6 1658.1,957.4 1659.3,959.6 1660.6,959.6 1661.9,959.6 1663.1,959.6 1664.4,959.6 1665.6,959.6 1666.9,959.6 1668.2,959.6 1669.4,959.6 1670.7,957.4 1671.9,959.6 1673.2,959.6 1674.5,959.6 1675.7,959.6 1677.0,959.6 1678.2,959.6 1679.5,959.6 1680.8,959.6 1682.0,959.6 1683.3,959.6 1684.5,959.6 1685.8,959.6 1687.1,959.6 1688.3,959.6 1689.6,959.6 1690.8,959.6 1692.1,959.6 1693.4,959.6 1694.6,959.6 1695.9,959.6 1697.1,959.6 1698.4,959.6 1699.7,959.6 1700.9,959.6 1702.2,959.6 1703.4,959.6 1704.7,959.6 1706.0,959.6 1707.2,959.6 1708.5,959.6 1709.7,959.6 1711.0,959.6 1712.3,959.6 1713.5,959.6 1714.8,959.6 1716.0,957.4 1717.3,959.6 1718.6,959.6 1719.8,959.6 1721.1,959.6 1722.3,959.6 1723.6,959.6 1724.9,959.6 1726.1,959.6 1727.4,959.6 1728.6,959.6 1729.9,959.6 1731.2,959.6 1732.4,959.6 1733.7,959.6 1734.9,959.6 1736.2,957.4 1737.5,959.6 1738.7,959.6 1740.0,959.6 1741.2,959.6 1742.5,962.0 1743.8,959.6 1745.0,959.6 1746.3,959.6 1747.5,959.6 1748.8,959.6 1750.1,959.6 1751.3,959.6 1752.6,959.6 1753.8,959.6 1755.1,959.6 1756.4,959.6 1757.6,959.6 1758.9,959.6 1760.1,959.6 1761.4,959.6 1762.7,959.6 1763.9,959.6 1765.2,959.6 1766.4,959.6 1767.7,959.6 1769.0,959.6 1770.2,957.4 1771.5,959.6 1772.7,959.6 1774.0,959.6 1775.3,959.6 1776.5,959.6 1777.8,959.6 1779.0,959.6 1780.3,959.6 1781.6,959.6 1782.8,959.6 1784.1,959.6 1785.3,962.0 1786.6,959.6 1787.9,959.6 1789.1,959.6 1790.4,959.6 1791.6,959.6 1792.9,959.6 1794.2,962.0 1795.4,957.4 1796.7,959.6 1797.9,959.6 1799.2,959.6 1800.5,959.6 1801.7,959.6 1803.0,959.6 1804.2,959.6 1805.5,959.6 1806.8,959.6 1808.0,959.6 1809.3,959.6 1810.5,959.6 1811.8,959.6 1813.1,959.6 1814.3,959.6 1815.6,959.6 1816.8,959.6 1818.1,959.6 1819.4,962.0 1820.6,959.6 1821.9,959.6 1823.1,959.6 1824.4,959.6 1825.7,959.6 1826.9,959.6 1828.2,957.4 1829.4,959.6 1830.7,959.6 1832.0,959.6 1833.2,959.6 1834.5,959.6 1835.7,959.6 1837.0,959.6 1838.3,959.6 1839.5,959.6 1840.8,959.6 1842.0,962.0 1843.3,959.6 1844.6,959.6 1845.8,959.6 1847.1,959.6 1848.3,959.6 1849.6,959.6 1850.9,959.6 1852.1,959.6 1853.4,957.4 1854.6,959.6 1855.9,959.6 1857.2,959.6 1858.4,959.6 1859.7,959.6 1860.9,959.6 1862.2,959.6 1863.5,959.6 1864.7,959.6 1866.0,959.6 1867.2,959.6 1868.5,959.6 1869.8,959.6 1871.0,959.6 1872.3,959.6 1873.5,959.6 1874.8,959.6 1876.1,959.6 1877.3,959.6 1878.6,959.6 1879.8,959.6 1881.1,959.6 1882.4,959.6 1883.6,959.6 1884.9,959.6 1886.1,959.6 1887.4,959.6" stroke="#ff0000"/><polyline points="73.0,958.5 74.3,958.5 75.5,958.5 76.8,958.5 78.0,958.5 79.3,958.5 80.6,958.5 81.8,958.5 83.1,960.2 84.3,958.5 85.6,958.5 86.9,958.5 88.1,958.5 89.4,958.5 90.6,958.5 91.9,958.5 93.2,958.5 94.4,958.5 95.7,958.5 96.9,958.5 98.2,958.5 99.5,958.5 100.7,958.5 102.0,958.5 103.2,958.5 104.5,958.5 105.8,958.5 107.0,958.5 108.3,958.5 109.5,958.5 110.8,958.5 112.1,958.5 113.3,958.5 114.6,958.5 115.8,958.5 117.1,958.5 118.4,958.5 119.6,958.5 120.9,958.5 122.1,958.5 123.4,958.5 124.7,958.5 125.9,958.5 127.2,947.0 128.4,958.5 129.7,958.5 131.0,958.5 132.2,958.5 133.5,958.5 134.7,958.5 136.0,958.5 137.3,958.5 138.5,958.5 139.8,960.2 141.0,958.5 142.3,958.5 143.6,958.5 144.8,958.5 146.1,958.5 147.3,960.2 148.6,958.5 149.9,958.5 151.1,960.2 152.4,958.5 153.6,958.5 154.9,958.5 156.2,958.5 157.4,958.5 158.7,958.5 159.9,958.5 161.2,958.5 162.5,958.5 163.7,958.5 165.0,958.5 166.2,958.5 167.5,958.5 168.8,958.5 170.0,958.5 171.3,958.5 172.5,958.5 173.8,958.5 175.1,958.5 176.3,958.5 177.6,958.5 178.8,958.5 180.1,958.5 181.4,958.5 182.6,958.5 183.9,958.5 185.1,958.5 186.4,958.5 187.7,958.5 188.9,958.5 190.2,958.5 191.4,958.5 192.7,958.5 194.0,958.5 195.2,958.5 196.5,958.5 197.7,958.5 199.0,958.5 200.3,958.5 201.5,958.5 202.8,958.5 204.0,958.5 205.3,958.5 206.6,958.5 207.8,960.2 209.1,958.5 210.3,958.5 211.6,958.5 212.9,958.5 214.1,958.5 215.4,958.5 216.6,958.5 217.9,958.5 219.2,958.5 220.4,958.5 221.7,958.5 222.9,958.5 224.2,958.5 225.5,958.5 226.7,958.5 228.0,958.5 229.2,958.5 230.5,958.5 231.8,958.5 233.0,958.5 234.3,958.5 235.5,958.5 236.8,958.5 238.1,958.5 239.3,958.5 240.6,958.5 241.8,958.5 243.1,958.5 244.4,958.5 245.6,958.5 246.9,958.5 248.1,958.5 249.4,958.5 250.7,958.5 251.9,958.5 253.2,958.5 254.4,958.5 255.7,958.5 257.0,958.5 258.2,958.5 259.5,960.2 260.7,958.5 262.0,958.5 263.3,958.5 264.5,958.5 265.8,958.5 267.0,960.2 268.3,958.5 269.6,958.5 270.8,958.5 272.1,958.5 273.3,958.5 274.6,958.5 275.9,958.5 277.1,958.5 278.4,958.5 279.6,958.5 280.9,958.5 282.2,958.5 283.4,958.5 284.7,958.5 285.9,958.5 287.2,958.5 288.5,958.5 289.7,958.5 291.0,958.5 292.2,958.5 293.5,958.5 294.8,958.5 296.0,958.5 297.3,958.5 298.5,958.5 299.8,958.5 301.1,958.5 302.3,958.5 303.6,958.5 304.8,958.5 306.1,958.5 307.4,958.5 308.6,958.5 309.9,958.5 311.1,958.5 312.4,958.5 313.7,958.5 314.9,958.5 316.2,958.5 317.4,958.5 318.7,958.5 320.0,958.5 321.2,958.5 322.5,958.5 323.7,958.5 325.0,958.5 326.3,958.5 327.5,958.5 328.8,958.5 330.0,958.5 331.3,958.5 332.6,958.5 333.8,958.5 335.1,958.5 336.3,958.5 337.6,958.5 338.9,958.5 340.1,958.5 341.4,958.5 342.6,958.5 343.9,958.5 345.2,960.2 346.4,958.5 347.7,958.5 348.9,958.5 350.2,958.5 351.5,958.5 352.7,958.5 354.0,958.5 355.2,958.5 356.5,958.5 357.8,958.5 359.0,958.5 360.3,958.5 361.5,958.5 362.8,958.5 364.1,958.5 365.3,958.5 366.6,958.5 367.8,958.5 369.1,958.5 370.4,958.5 371.6,958.5 372.9,958.5 374.1,958.5 375.4,958.5 376.7,958.5 377.9,958.5 379.2,958.5 380.4,958.5 381.7,958.5 383.0,958.5 384.2,960.2 385.5,958.5 386.7,958.5 388.0,958.5 389.3,958.5 390.5,960.2 391.8,958.5 393.0,958.5 394.3,958.5 395.6,958.5 396.8,958.5 398.1,958.5 399.3,958.5 400.6,958.5 401.9,958.5 403.1,958.5 404.4,958.5 405.6,958.5 406.9,958.5 408.2,958.5 409.4,958.5 410.7,958.5 411.9,960.2 413.2,958.5 414.5,958.5 415.7,958.5 417.0,960.2 418.2,958.5 419.5,958.5 420.8,958.5 422.0,958.5 423.3,958.5 424.5,958.5 425.8,958.5 427.1,958.5 428.3,958.5 429.6,958.5 430.8,958.5 432.1,958.5 433.4,958.5 434.6,958.5 435.9,960.2 437.1,958.5 438.4,958.5 439.7,960.2 440.9,958.5 442.2,958.5 443.4,958.5 444.7,958.5 446.0,958.5 447.2,958.5 448.5,958.5 449.7,958.5 451.0,958.5 452.3,958.5 453.5,958.5 454.8,958.5 456.0,958.5 457.3,960.2 458.6,958.5 459.8,958.5 461.1,958.5 462.3,958.5 463.6,958.5 464.9,958.5 466.1,958.5 467.4,958.5 468.6,958.5 469.9,958.5 471.2,958.5 472.4,958.5 473.7,958.5 474.9,958.5 476.2,958.5 477.5,958.5 478.7,958.5 480.0,958.5 481.2,958.5 482.5,958.5 483.8,958.5 485.0,958.5 486.3,958.5 487.5,958.5 488.8,958.5 490.1,958.5 491.3,958.5 492.6,958.5 493.8,958.5 495.1,958.5 496.4,958.5 497.6,958.5 498.9,958.5 500.1,958.5 501.4,958.5 502.7,958.5 503.9,958.5 505.2,958.5 506.4,958.5 507.7,958.5 509.0,958.5 510.2,960.2 511.5,958.5 512.7,958.5 514.0,958.5 515.3,958.5 516.5,958.5 517.8,958.5 519.0,958.5 520.3,958.5 521.6,958.5 522.8,958.5 524.1,958.5 525.3,958.5 526.6,958.5 527.9,958.5 529.1,958.5 530.4,958.5 531.6,958.5 532.9,958.5 534.2,958.5 535.4,958.5 536.7,960.2 537.9,958.5 539.2,958.5 540.5,958.5 541.7,958.5 543.0,958.5 544.2,958.5 545.5,958.5 546.8,958.5 548.0,958.5 549.3,958.5 550.5,958.5 551.8,958.5 553.1,958.5 554.3,958.5 555.6,960.2 556.8,958.5 558.1,958.5 559.4,960.2 560.6,958.5 561.9,958.5 563.1,958.5 564.4,958.5 565.7,958.5 566.9,958.5 568.2,958.5 569.4,958.5 570.7,958.5 572.0,958.5 573.2,958.5 574.5,958.5 575.7,958.5 577.0,958.5 578.3,958.5 579.5,958.5 580.8,958.5 582.0,958.5 583.3,958.5 584.6,958.5 585.8,958.5 587.1,958.5 588.3,958.5 589.6,958.5 590.9,958.5 592.1,958.5 593.4,958.5 594.6,958.5 595.9,958.5 597.2,958.5 598.4,958.5 599.7,958.5 600.9,958.5 602.2,958.5 603.5,958.5 604.7,958.5 606.0,960.2 607.2,958.5 608.5,958.5 609.8,958.5 611.0,958.5 612.3,958.5 613.5,958.5 614.8,958.5 616.1,958.5 617.3,958.5 618.6,958.5 619.8,958.5 621.1,958.5 622.4,958.5 623.6,958.5 624.9,958.5 626.1,958.5 627.4,958.5 628.7,958.5 629.9,958.5 631.2,960.2 632.4,958.5 633.7,958.5 635.0,958.5 636.2,960.2 637.5,958.5 638.7,958.5 640.0,958.5 641.3,958.5 642.5,958.5 643.8,958.5 645.0,958.5 646.3,958.5 647.6,958.5 648.8,958.5 650.1,958.5 651.3,958.5 652.6,958.5 653.9,958.5 655.1,958.5 656.4,958.5 657.6,958.5 658.9,958.5 660.2,958.5 661.4,958.5 662.7,958.5 663.9,958.5 665.2,958.5 666.5,958.5 667.7,958.5 669.0,958.5 670.2,958.5 671.5,958.5 672.8,958.5 674.0,958.5 675.3,958.5 676.5,958.5 677.8,958.5 679.1,958.5 680.3,958.5 681.6,958.5 682.8,958.5 684.1,958.5 685.4,958.5 686.6,958.5 687.9,958.5 689.1,958.5 690.4,958.5 691.7,958.5 692.9,958.5 694.2,958.5 695.4,958.5 696.7,958.5 698.0,958.5 699.2,958.5 700.5,958.5 701.7,958.5 703.0,960.2 704.3,958.5 705.5,958.5 706.8,958.5 708.0,958.5 709.3,958.5 710.6,958.5 711.8,958.5 713.1,958.5 714.3,958.5 715.6,958.5 716.9,958.5 718.1,958.5 719.4,960.2 720.6,958.5 721.9,958.5 723.2,958.5 724.4,958.5 725.7,958.5 726.9,958.5 728.2,958.5 729.5,958.5 730.7,958.5 732.0,958.5 733.2,958.5 734.5,958.5 735.8,958.5 737.0,958.5 738.3,958.5 739.5,958.5 740.8,958.5 742.1,958.5 743.3,958.5 744.6,958.5 745.8,958.5 747.1,958.5 748.4,958.5 749.6,958.5 750.9,958.5 752.1,958.5 753.4,958.5 754.7,958.5 755.9,958.5 757.2,958.5 758.4,958.5 759.7,958.5 761.0,958.5 762.2,958.5 763.5,958.5 764.7,958.5 766.0,958.5 767.3,958.5 768.5,960.2 769.8,958.5 771.0,958.5 772.3,958.5 773.6,958.5 774.8,958.5 776.1,958.5 777.3,958.5 778.6,958.5 779.9,958.5 781.1,958.5 782.4,960.2 783.6,958.5 784.9,958.5 786.2,958.5 787.4,958.5 788.7,958.5 789.9,958.5 791.2,958.5 792.5,958.5 793.7,958.5 795.0,958.5 796.2,958.5 797.5,958.5 798.8,958.5 800.0,958.5 801.3,958.5 802.5,958.5 803.8,958.5 805.1,958.5 806.3,960.2 807.6,958.5 808.8,958.5 810.1,958.5 811.4,958.5 812.6,958.5 813.9,958.5 815.1,958.5 816.4,958.5 817.7,958.5 818.9,958.5 820.2,958.5 821.4,958.5 822.7,958.5 824.0,958.5 825.2,958.5 826.5,960.2 827.7,958.5 829.0,958.5 830.3,958.5 831.5,958.5 832.8,960.2 834.0,958.5 835.3,958.5 836.6,958.5 837.8,958.5 839.1,958.5 840.3,958.5 841.6,958.5 842.9,958.5 844.1,958.5 845.4,958.5 846.6,958.5 847.9,958.5 849.2,958.5 850.4,958.5 851.7,958.5 852.9,960.2 854.2,958.5 855.5,958.5 856.7,958.5 858.0,958.5 859.2,958.5 860.5,958.5 861.8,958.5 863.0,958.5 864.3,958.5 865.5,958.5 866.8,958.5 868.1,958.5 869.3,958.5 870.6,958.5 871.8,958.5 873.1,958.5 874.4,958.5 875.6,958.5 876.9,960.2 878.1,958.5 879.4,960.2 880.7,958.5 881.9,960.2 883.2,958.5 884.4,958.5 885.7,958.5 887.0,958.5 888.2,958.5 889.5,958.5 890.7,958.5 892.0,958.5 893.3,958.5 894.5,958.5 895.8,958.5 897.0,958.5 898.3,958.5 899.6,958.5 900.8,958.5 902.1,958.5 903.3,958.5 904.6,958.5 905.9,958.5 907.1,960.2 908.4,958.5 909.6,958.5 910.9,958.5 912.2,947.0 913.4,960.2 914.7,958.5 915.9,958.5 917.2,958.5 918.5,958.5 919.7,958.5 921.0,958.5 922.2,958.5 923.5,958.5 924.8,958.5 926.0,958.5 927.3,958.5 928.5,958.5 929.8,958.5 931.1,958.5 932.3,958.5 933.6,958.5 934.8,958.5 936.1,958.5 937.4,958.5 938.6,958.5 939.9,958.5 941.1,958.5 942.4,958.5 943.7,958.5 944.9,958.5 946.2,958.5 947.4,958.5 948.7,958.5 950.0,958.5 951.2,958.5 952.5,958.5 953.7,958.5 955.0,958.5 956.3,958.5 957.5,958.5 958.8,958.5 960.0,958.5 961.3,958.5 962.6,958.5 963.8,958.5 965.1,958.5 966.3,958.5 967.6,958.5 968.9,958.5 970.1,958.5 971.4,958.5 972.6,958.5 973.9,958.5 975.2,958.5 976.4,958.5 977.7,958.5 978.9,958.5 980.2,958.5 981.5,958.5 982.7,958.5 984.0,958.5 985.2,958.5 986.5,958.5 987.8,958.5 989.0,958.5 990.3,948.1 991.5,958.5 992.8,958.5 994.1,958.5 995.3,958.5 996.6,958.5 997.8,958.5 999.1,958.5 1000.4,958.5 1001.6,958.5 1002.9,958.5 1004.1,958.5 1005.4,958.5 1006.7,958.5 1007.9,958.5 1009.2,958.5 1010.4,958.5 1011.7,958.5 1013.0,958.5 1014.2,958.5 1015.5,958.5 1016.7,958.5 1018.0,958.5 1019.3,958.5 1020.5,958.5 1021.8,958.5 1023.0,958.5 1024.3,958.5 1025.6,958.5 1026.8,958.5 1028.1,958.5 1029.3,958.5 1030.6,958.5 1031.9,958.5 1033.1,958.5 1034.4,958.5 1035.6,958.5 1036.9,958.5 1038.2,958.5 1039.4,958.5 1040.7,958.5 1041.9,958.5 1043.2,958.5 1044.5,958.5 1045.7,958.5 1047.0,958.5 1048.2,958.5 1049.5,958.5 1050.8,958.5 1052.0,958.5 1053.3,958.5 1054.5,958.5 1055.8,958.5 1057.1,958.5 1058.3,958.5 1059.6,958.5 1060.8,958.5 1062.1,958.5 1063.4,958.5 1064.6,958.5 1065.9,958.5 1067.1,958.5 1068.4,958.5 1069.7,958.5 1070.9,958.5 1072.2,960.2 1073.4,958.5 1074.7,958.5 1076.0,958.5 1077.2,958.5 1078.5,958.5 1079.7,958.5 1081.0,958.5 1082.3,958.5 1083.5,958.5 1084.8,958.5 1086.0,958.5 1087.3,958.5 1088.6,958.5 1089.8,958.5 1091.1,958.5 1092.3,958.5 1093.6,958.5 1094.9,958.5 1096.1,958.5 1097.4,958.5 1098.6,958.5 1099.9,958.5 1101.2,958.5 1102.4,958.5 1103.7,958.5 1104.9,958.5 1106.2,958.5 1107.5,958.5 1108.7,958.5 1110.0,958.5 1111.2,958.5 1112.5,958.5 1113.8,958.5 1115.0,958.5 1116.3,958.5 1117.5,958.5 1118.8,958.5 1120.1,958.5 1121.3,958.5 1122.6,958.5 1123.8,958.5 1125.1,958.5 1126.4,958.5 1127.6,958.5 1128.9,958.5 1130.1,958.5 1131.4,958.5 1132.7,958.5 1133.9,958.5 1135.2,958.5 1136.4,958.5 1137.7,958.5 1139.0,958.5 1140.2,958.5 1141.5,958.5 1142.7,958.5 1144.0,958.5 1145.3,958.5 1146.5,958.5 1147.8,958.5 1149.0,958.5 1150.3,958.5 1151.6,958.5 1152.8,958.5 1154.1,958.5 1155.3,958.5 1156.6,958.5 1157.9,958.5 1159.1,958.5 1160.4,958.5 1161.6,958.5 1162.9,958.5 1164.2,958.5 1165.4,958.5 1166.7,958.5 1167.9,958.5 1169.2,960.2 1170.5,958.5 1171.7,958.5 1173.0,958.5 1174.2,958.5 1175.5,958.5 1176.8,958.5 1178.0,958.5 1179.3,958.5 1180.5,958.5 1181.8,958.5 1183.1,958.5 1184.3,958.5 1185.6,958.5 1186.8,958.5 1188.1,958.5 1189.4,958.5 1190.6,958.5 1191.9,958.5 1193.1,958.5 1194.4,958.5 1195.7,958.5 1196.9,958.5 1198.2,958.5 1199.4,958.5 1200.7,958.5 1202.0,958.5 1203.2,958.5 1204.5,958.5 1205.7,958.5 1207.0,958.5 1208.3,958.5 1209.5,958.5 1210.8,958.5 1212.0,958.5 1213.3,958.5 1214.6,958.5 1215.8,958.5 1217.1,958.5 1218.3,958.5 1219.6,958.5 1220.9,958.5 1222.1,958.5 1223.4,958.5 1224.6,958.5 1225.9,958.5 1227.2,958.5 1228.4,958.5 1229.7,958.5 1230.9,958.5 1232.2,958.5 1233.5,958.5 1234.7,958.5 1236.0,958.5 1237.2,960.2 1238.5,958.5 1239.8,958.5 1241.0,958.5 1242.3,958.5 1243.5,958.5 1244.8,958.5 1246.1,958.5 1247.3,958.5 1248.6,958.5 1249.8,958.5 1251.1,958.5 1252.4,958.5 1253.6,958.5 1254.9,958.5 1256.1,958.5 1257.4,958.5 1258.7,958.5 1259.9,958.5 1261.2,958.5 1262.4,960.2 1263.7,958.5 1265.0,958.5 1266.2,958.5 1267.5,958.5 1268.7,958.5 1270.0,958.5 1271.3,958.5 1272.5,958.5 1273.8,960.2 1275.0,958.5 1276.3,958.5 1277.6,958.5 1278.8,958.5 1280.1,958.5 1281.3,958.5 1282.6,958.5 1283.9,960.2 1285.1,960.2 1286.4,958.5 1287.6,958.5 1288.9,958.5 1290.2,958.5 1291.4,960.2 1292.7,958.5 1293.9,958.5 1295.2,960.2 1296.5,958.5 1297.7,958.5 1299.0,958.5 1300.2,958.5 1301.5,958.5 1302.8,958.5 1304.0,958.5 1305.3,958.5 1306.5,958.5 1307.8,958.5 1309.1,960.2 1310.3,958.5 1311.6,960.2 1312.8,958.5 1314.1,958.5 1315.4,958.5 1316.6,958.5 1317.9,960.2 1319.1,958.5 1320.4,958.5 1321.7,958.5 1322.9,958.5 1324.2,958.5 1325.4,958.5 1326.7,958.5 1328.0,958.5 1329.2,958.5 1330.5,958.5 1331.7,958.5 1333.0,958.5 1334.3,958.5 1335.5,958.5 1336.8,958.5 1338.0,958.5 1339.3,958.5 1340.6,958.5 1341.8,958.5 1343.1,958.5 1344.3,958.5 1345.6,958.5 1346.9,958.5 1348.1,958.5 1349.4,958.5 1350.6,958.5 1351.9,958.5 1353.2,958.5 1354.4,958.5 1355.7,958.5 1356.9,958.5 1358.2,958.5 1359.5,958.5 1360.7,958.5 1362.0,958.5 1363.2,958.5 1364.5,958.5 1365.8,958.5 1367.0,958.5 1368.3,958.5 1369.5,958.5 1370.8,958.5 1372.1,958.5 1373.3,958.5 1374.6,958.5 1375.8,958.5 1377.1,958.5 1378.4,958.5 1379.6,958.5 1380.9,958.5 1382.1,958.5 1383.4,958.5 1384.7,958.5 1385.9,958.5 1387.2,958.5 1388.4,958.5 1389.7,958.5 1391.0,958.5 1392.2,958.5 1393.5,958.5 1394.7,958.5 1396.0,958.5 1397.3,958.5 1398.5,958.5 1399.8,958.5 1401.0,958.5 1402.3,958.5 1403.6,958.5 1404.8,958.5 1406.1,958.5 1407.3,958.5 1408.6,958.5 1409.9,958.5 1411.1,958.5 1412.4,958.5 1413.6,958.5 1414.9,958.5 1416.2,958.5 1417.4,958.5 1418.7,958.5 1419.9,958.5 1421.2,958.5 1422.5,958.5 1423.7,958.5 1425.0,958.5 1426.2,958.5 1427.5,958.5 1428.8,958.5 1430.0,958.5 1431.3,958.5 1432.5,958.5 1433.8,958.5 1435.1,958.5 1436.3,958.5 1437.6,958.5 1438.8,958.5 1440.1,958.5 1441.4,958.5 1442.6,958.5 1443.9,958.5 1445.1,958.5 1446.4,958.5 1447.7,958.5 1448.9,958.5 1450.2,958.5 1451.4,958.5 1452.7,960.2 1454.0,958.5 1455.2,958.5 1456.5,960.2 1457.7,960.2 1459.0,958.5 1460.3,958.5 1461.5,958.5 1462.8,958.5 1464.0,958.5 1465.3,958.5 1466.6,958.5 1467.8,958.5 1469.1,958.5 1470.3,958.5 1471.6,958.5 1472.9,958.5 1474.1,958.5 1475.4,960.2 1476.6,958.5 1477.9,958.5 1479.2,958.5 1480.4,958.5 1481.7,958.5 1482.9,958.5 1484.2,958.5 1485.5,958.5 1486.7,958.5 1488.0,958.5 1489.2,958.5 1490.5,958.5 1491.8,958.5 1493.0,958.5 1494.3,958.5 1495.5,958.5 1496.8,958.5 1498.1,958.5 1499.3,958.5 1500.6,958.5 1501.8,958.5 1503.1,958.5 1504.4,958.5 1505.6,958.5 1506.9,958.5 1508.1,958.5 1509.4,958.5 1510.7,958.5 1511.9,958.5 1513.2,958.5 1514.4,958.5 1515.7,958.5 1517.0,958.5 1518.2,960.2 1519.5,958.5 1520.7,958.5 1522.0,958.5 1523.3,958.5 1524.5,958.5 1525.8,958.5 1527.0,958.5 1528.3,958.5 1529.6,958.5 1530.8,958.5 1532.1,958.5 1533.3,958.5 1534.6,958.5 1535.9,958.5 1537.1,958.5 1538.4,958.5 1539.6,958.5 1540.9,958.5 1542.2,958.5 1543.4,958.5 1544.7,958.5 1545.9,958.5 1547.2,958.5 1548.5,958.5 1549.7,958.5 1551.0,958.5 1552.2,958.5 1553.5,958.5 1554.8,958.5 1556.0,958.5 1557.3,958.5 1558.5,958.5 1559.8,958.5 1561.1,958.5 1562.3,958.5 1563.6,960.2 1564.8,958.5 1566.1,958.5 1567.4,958.5 1568.6,958.5 1569.9,958.5 1571.1,958.5 1572.4,958.5 1573.7,958.5 1574.9,958.5 1576.2,958.5 1577.4,958.5 1578.7,958.5 1580.0,958.5 1581.2,958.5 1582.5,958.5 1583.7,958.5 1585.0,960.2 1586.3,958.5 1587.5,958.5 1588.8,958.5 1590.0,958.5 1591.3,958.5 1592.6,958.5 1593.8,958.5 1595.1,958.5 1596.3,958.5 1597.6,958.5 1598.9,958.5 1600.1,958.5 1601.4,958.5 1602.6,958.5 1603.9,958.5 1605.2,958.5 1606.4,958.5 1607.7,958.5 1608.9,958.5 1610.2,958.5 1611.5,958.5 1612.7,958.5 1614.0,958.5 1615.2,958.5 1616.5,958.5 1617.8,958.5 1619.0,958.5 1620.3,958.5 1621.5,958.5 1622.8,958.5 1624.1,958.5 1625.3,958.5 1626.6,958.5 1627.8,958.5 1629.1,958.5 1630.4,958.5 1631.6,958.5 1632.9,958.5 1634.1,958.5 1635.4,958.5 1636.7,960.2 1637.9,958.5 1639.2,958.5 1640.4,958.5 1641.7,958.5 1643.0,958.5 1644.2,958.5 1645.5,958.5 1646.7,958.5 1648.0,958.5 1649.3,958.5 1650.5,958.5 1651.8,958.5 1653.0,958.5 1654.3,958.5 1655.6,958.5 1656.8,958.5 1658.1,958.5 1659.3,958.5 1660.6,958.5 1661.9,958.5 1663.1,958.5 1664.4,958.5 1665.6,958.5 1666.9,958.5 1668.2,958.5 1669.4,958.5 1670.7,958.5 1671.9,958.5 1673.2,958.5 1674.5,958.5 1675.7,958.5 1677.0,958.5 1678.2,958.5 1679.5,958.5 1680.8,958.5 1682.0,958.5 1683.3,958.5 1684.5,958.5 1685.8,958.5 1687.1,958.5 1688.3,958.5 1689.6,958.5 1690.8,958.5 1692.1,958.5 1693.4,958.5 1694.6,958.5 1695.9,958.5 1697.1,958.5 1698.4,958.5 1699.7,958.5 1700.9,958.5 1702.2,958.5 1703.4,958.5 1704.7,958.5 1706.0,958.5 1707.2,958.5 1708.5,958.5 1709.7,958.5 1711.0,960.2 1712.3,958.5 1713.5,958.5 1714.8,958.5 1716.0,958.5 1717.3,958.5 1718.6,958.5 1719.8,960.2 1721.1,958.5 1722.3,958.5 1723.6,958.5 1724.9,958.5 1726.1,958.5 1727.4,958.5 1728.6,958.5 1729.9,958.5 1731.2,958.5 1732.4,958.5 1733.7,958.5 1734.9,958.5 1736.2,958.5 1737.5,958.5 1738.7,958.5 1740.0,958.5 1741.2,958.5 1742.5,958.5 1743.8,958.5 1745.0,958.5 1746.3,958.5 1747.5,958.5 1748.8,958.5 1750.1,958.5 1751.3,958.5 1752.6,958.5 1753.8,958.5 1755.1,958.5 1756.4,958.5 1757.6,958.5 1758.9,958.5 1760.1,960.2 1761.4,958.5 1762.7,958.5 1763.9,958.5 1765.2,958.5 1766.4,958.5 1767.7,958.5 1769.0,958.5 1770.2,958.5 1771.5,958.5 1772.7,958.5 1774.0,960.2 1775.3,958.5 1776.5,958.5 1777.8,958.5 1779.0,958.5 1780.3,958.5 1781.6,958.5 1782.8,958.5 1784.1,958.5 1785.3,958.5 1786.6,960.2 1787.9,958.5 1789.1,958.5 1790.4,958.5 1791.6,958.5 1792.9,958.5 1794.2,958.5 1795.4,958.5 1796.7,958.5 1797.9,958.5 1799.2,958.5 1800.5,958.5 1801.7,958.5 1803.0,958.5 1804.2,958.5 1805.5,958.5 1806.8,958.5 1808.0,958.5 1809.3,958.5 1810.5,958.5 1811.8,958.5 1813.1,958.5 1814.3,958.5 1815.6,958.5 1816.8,958.5 1818.1,958.5 1819.4,958.5 1820.6,958.5 1821.9,958.5 1823.1,958.5 1824.4,958.5 1825.7,958.5 1826.9,958.5 1828.2,958.5 1829.4,958.5 1830.7,958.5 1832.0,960.2 1833.2,960.2 1834.5,958.5 1835.7,958.5 1837.0,958.5 1838.3,958.5 1839.5,960.2 1840.8,958.5 1842.0,958.5 1843.3,960.2 1844.6,958.5 1845.8,958.5 1847.1,958.5 1848.3,958.5 1849.6,958.5 1850.9,958.5 1852.1,958.5 1853.4,958.5 1854.6,958.5 1855.9,958.5 1857.2,958.5 1858.4,958.5 1859.7,958.5 1860.9,958.5 1862.2,958.5 1863.5,960.2 1864.7,958.5 1866.0,958.5 1867.2,958.5 1868.5,958.5 1869.8,958.5 1871.0,958.5 1872.3,958.5 1873.5,958.5 1874.8,958.5 1876.1,958.5 1877.3,960.2 1878.6,958.5 1879.8,958.5 1881.1,958.5 1882.4,958.5 1883.6,958.5 1884.9,958.5 1886.1,958.5 1887.4,958.5" stroke="#0000ff"/><polyline points="73.0,978.5 74.3,979.0 75.5,976.6 76.8,975.2 78.0,977.7 79.3,977.7 80.6,976.7 81.8,977.0 83.1,980.3 84.3,981.4 85.6,979.5 86.9,977.1 88.1,974.8 89.4,973.9 90.6,974.9 91.9,975.9 93.2,977.9 94.4,975.8 95.7,975.6 96.9,979.3 98.2,977.5 99.5,976.2 100.7,977.2 102.0,976.7 103.2,974.5 104.5,973.8 105.8,977.5 107.0,978.5 108.3,977.8 109.5,978.3 110.8,974.3 112.1,973.1 113.3,978.1 114.6,979.5 115.8,973.6 117.1,972.4 118.4,975.9 119.6,974.8 120.9,973.0 122.1,973.6 123.4,970.6 124.7,966.7 125.9,961.8 127.2,975.0 128.4,969.4 129.7,973.1 131.0,973.6 132.2,971.2 133.5,971.7 134.7,975.7 136.0,962.7 137.3,962.7 138.5,977.4 139.8,968.8 141.0,969.8 142.3,971.4 143.6,967.3 144.8,968.5 146.1,961.5 147.3,951.0 148.6,956.6 149.9,965.4 151.1,963.2 152.4,959.3 153.6,961.3 154.9,964.5 156.2,964.2 157.4,965.1 158.7,963.8 159.9,964.8 161.2,956.8 162.5,952.6 163.7,955.6 165.0,945.9 166.2,936.7 167.5,947.5 168.8,958.0 170.0,963.7 171.3,963.3 172.5,959.3 173.8,959.3 175.1,949.6 176.3,956.9 177.6,959.0 178.8,953.3 180.1,969.5 181.4,976.1 182.6,961.2 183.9,959.8 185.1,963.2 186.4,959.6 187.7,960.5 188.9,958.4 190.2,955.3 191.4,962.6 192.7,969.3 194.0,969.0 195.2,956.6 196.5,962.1 197.7,962.4 199.0,964.5 200.3,969.1 201.5,966.1 202.8,967.2 204.0,967.6 205.3,960.2 206.6,472.6 207.8,460.6 209.1,966.6 210.3,973.4 211.6,961.8 212.9,954.0 214.1,957.5 215.4,962.5 216.6,960.6 217.9,961.3 219.2,962.3 220.4,956.7 221.7,953.6 222.9,962.5 224.2,965.8 225.5,968.4 226.7,956.6 228.0,946.2 229.2,946.0 230.5,953.6 231.8,947.5 233.0,952.5 234.3,956.7 235.5,946.5 236.8,957.5 238.1,962.7 239.3,962.7 240.6,965.7 241.8,965.2 243.1,962.5 244.4,953.1 245.6,945.4 246.9,957.6 248.1,967.1 249.4,960.6 250.7,961.8 251.9,969.5 253.2,981.1 254.4,979.8 255.7,963.1 257.0,960.5 258.2,962.3 259.5,954.8 260.7,952.2 262.0,953.9 263.3,953.4 264.5,953.2 265.8,959.6 267.0,959.8 268.3,960.1 269.6,965.3 270.8,966.4 272.1,957.6 273.3,957.1 274.6,960.8 275.9,961.6 277.1,963.9 278.4,962.9 279.6,961.7 280.9,960.8 282.2,959.1 283.4,958.1 284.7,961.1 285.9,960.8 287.2,967.3 288.5,964.2 289.7,955.7 291.0,958.2 292.2,958.3 293.5,958.5 294.8,964.7 296.0,965.9 297.3,954.2 298.5,962.8 299.8,978.4 301.1,986.7 302.3,980.7 303.6,970.7 304.8,976.6 306.1,980.7 307.4,985.2 308.6,979.6 309.9,977.8 311.1,979.7 312.4,970.0 313.7,963.4 314.9,964.7 316.2,967.8 317.4,966.4 318.7,965.6 320.0,968.6 321.2,972.1 322.5,967.8 323.7,963.3 325.0,960.5 326.3,951.4 327.5,957.2 328.8,962.3 330.0,958.8 331.3,956.0 332.6,948.0 333.8,947.4 335.1,950.5 336.3,953.6 337.6,948.2 338.9,946.3 340.1,955.4 341.4,959.7 342.6,957.3 343.9,952.2 345.2,955.8 346.4,948.4 347.7,944.4 348.9,948.1 350.2,954.4 351.5,959.0 352.7,957.8 354.0,957.5 355.2,957.2 356.5,965.2 357.8,964.3 359.0,961.1 360.3,960.3 361.5,961.5 362.8,957.6 364.1,955.2 365.3,951.8 366.6,953.1 367.8,964.2 369.1,958.0 370.4,956.9 371.6,960.0 372.9,955.8 374.1,959.1 375.4,968.7 376.7,980.5 377.9,977.7 379.2,964.2 380.4,964.5 381.7,964.5 383.0,961.4 384.2,965.4 385.5,965.5 386.7,966.3 388.0,971.4 389.3,967.5 390.5,962.2 391.8,966.6 393.0,974.2 394.3,971.5 395.6,961.7 396.8,957.4 398.1,962.6 399.3,965.2 400.6,959.0 401.9,965.3 403.1,965.0 404.4,957.0 405.6,963.3 406.9,966.2 408.2,965.6 409.4,968.9 410.7,984.9 411.9,986.7 413.2,966.5 414.5,958.0 415.7,960.3 417.0,951.2 418.2,959.5 419.5,979.4 420.8,986.7 422.0,986.7 423.3,986.7 424.5,976.2 425.8,971.3 427.1,984.6 428.3,981.6 429.6,973.9 430.8,974.6 432.1,969.3 433.4,971.6 434.6,978.8 435.9,975.4 437.1,979.3 438.4,981.1 439.7,976.0 440.9,971.7 442.2,965.2 443.4,981.8 444.7,981.9 446.0,970.6 447.2,975.3 448.5,980.6 449.7,971.4 451.0,967.9 452.3,975.9 453.5,976.8 454.8,972.9 456.0,967.5 457.3,972.2 458.6,962.9 459.8,957.8 461.1,961.6 462.3,953.9 463.6,959.1 464.9,961.5 466.1,947.5 467.4,950.8 468.6,953.2 469.9,958.1 471.2,961.1 472.4,953.4 473.7,957.0 474.9,968.2 476.2,957.2 477.5,959.0 478.7,958.2 480.0,947.6 481.2,952.0 482.5,946.6 483.8,948.4 485.0,952.7 486.3,950.2 487.5,949.5 488.8,960.7 490.1,961.1 491.3,943.7 492.6,950.3 493.8,962.3 495.1,962.9 496.4,972.7 497.6,964.7 498.9,960.7 500.1,965.1 501.4,964.4 502.7,962.2 503.9,959.2 505.2,961.4 506.4,965.8 507.7,458.2 509.0,466.9 510.2,454.8 511.5,974.9 512.7,981.3 514.0,977.4 515.3,970.0 516.5,967.3 517.8,971.3 519.0,974.0 520.3,973.8 521.6,978.4 522.8,982.0 524.1,986.7 525.3,975.9 526.6,979.0 527.9,982.2 529.1,978.4 530.4,979.5 531.6,977.4 532.9,975.7 534.2,970.4 535.4,975.3 536.7,978.0 537.9,979.8 539.2,980.5 540.5,983.4 541.7,985.8 543.0,983.3 544.2,979.3 545.5,966.4 546.8,962.1 548.0,972.2 549.3,981.3 550.5,984.1 551.8,981.7 553.1,964.1 554.3,962.4 555.6,978.5 556.8,972.4 558.1,967.6 559.4,958.0 560.6,951.5 561.9,954.7 563.1,956.6 564.4,959.3 565.7,965.2 566.9,965.5 568.2,954.3 569.4,948.2 570.7,955.1 572.0,961.7 573.2,960.6 574.5,965.8 575.7,964.6 577.0,958.7 578.3,957.6 579.5,958.2 580.8,950.9 582.0,948.5 583.3,963.0 584.6,970.0 585.8,969.8 587.1,966.8 588.3,960.6 589.6,949.0 590.9,957.3 592.1,972.0 593.4,972.7 594.6,967.3 595.9,962.3 597.2,964.5 598.4,961.6 599.7,959.5 600.9,960.7 602.2,957.6 603.5,957.6 604.7,954.3 606.0,961.6 607.2,976.3 608.5,967.6 609.8,962.7 611.0,973.9 612.3,964.4 613.5,954.3 614.8,954.1 616.1,962.1 617.3,962.7 618.6,968.4 619.8,970.3 621.1,957.0 622.4,959.7 623.6,974.8 624.9,972.4 626.1,957.5 627.4,959.4 628.7,963.3 629.9,959.3 631.2,967.8 632.4,957.5 633.7,952.1 635.0,955.8 636.2,958.1 637.5,966.9 638.7,958.8 640.0,953.7 641.3,952.5 642.5,958.4 643.8,973.7 645.0,975.5 646.3,966.9 647.6,970.0 648.8,963.5 650.1,968.0 651.3,961.2 652.6,953.9 653.9,963.2 655.1,962.7 656.4,957.8 657.6,963.0 658.9,966.6 660.2,963.6 661.4,969.8 662.7,971.7 663.9,973.1 665.2,971.3 666.5,969.8 667.7,966.6 669.0,959.1 670.2,956.5 671.5,959.7 672.8,971.2 674.0,975.2 675.3,975.8 676.5,965.9 677.8,966.2 679.1,965.3 680.3,954.6 681.6,965.3 682.8,972.4 684.1,970.5 685.4,969.9 686.6,969.7 687.9,974.9 689.1,966.2 690.4,955.6 691.7,962.1 692.9,956.4 694.2,956.7 695.4,968.7 696.7,972.9 698.0,976.4 699.2,968.0 700.5,962.7 701.7,970.5 703.0,972.7 704.3,977.8 705.5,982.9 706.8,973.9 708.0,965.7 709.3,970.0 710.6,969.9 711.8,965.6 713.1,962.9 714.3,966.1 715.6,971.3 716.9,972.6 718.1,973.6 719.4,972.5 720.6,969.5 721.9,969.9 723.2,965.0 724.4,975.3 725.7,972.9 726.9,964.9 728.2,960.7 729.5,959.1 730.7,960.8 732.0,955.3 733.2,961.3 734.5,971.0 735.8,972.5 737.0,974.9 738.3,972.2 739.5,972.6 740.8,962.4 742.1,958.5 743.3,954.3 744.6,949.9 745.8,953.7 747.1,947.6 748.4,954.4 749.6,959.9 750.9,953.2 752.1,949.9 753.4,957.6 754.7,947.4 755.9,953.0 757.2,966.3 758.4,958.2 759.7,957.6 761.0,961.4 762.2,961.8 763.5,965.2 764.7,962.9 766.0,964.4 767.3,961.9 768.5,967.8 769.8,967.7 771.0,967.7 772.3,964.2 773.6,949.9 774.8,957.7 776.1,974.1 777.3,978.3 778.6,974.0 779.9,966.3 781.1,963.2 782.4,958.0 783.6,960.3 784.9,967.2 786.2,954.3 787.4,951.5 788.7,961.8 789.9,966.2 791.2,966.1 792.5,959.1 793.7,956.2 795.0,955.4 796.2,963.0 797.5,969.2 798.8,956.2 800.0,945.9 801.3,949.4 802.5,950.1 803.8,944.2 805.1,952.6 806.3,953.2 807.6,942.9 808.8,941.4 810.1,458.2 811.4,466.9 812.6,454.8 813.9,960.4 815.1,962.9 816.4,961.7 817.7,962.1 818.9,960.2 820.2,963.7 821.4,972.0 822.7,970.0 824.0,955.0 825.2,949.4 826.5,954.0 827.7,956.1 829.0,961.2 830.3,960.3 831.5,960.0 832.8,957.3 834.0,951.0 835.3,946.7 836.6,954.6 837.8,968.7 839.1,975.5 840.3,969.0 841.6,973.3 842.9,972.1 844.1,966.5 845.4,967.1 846.6,966.3 847.9,969.6 849.2,969.2 850.4,969.1 851.7,971.5 852.9,968.9 854.2,957.0 855.5,962.4 856.7,966.7 858.0,961.3 859.2,973.0 860.5,975.4 861.8,974.5 863.0,970.1 864.3,961.3 865.5,963.2 866.8,962.8 868.1,971.9 869.3,980.6 870.6,973.6 871.8,965.2 873.1,975.3 874.4,966.7 875.6,953.7 876.9,953.4 878.1,965.1 879.4,959.8 880.7,946.9 881.9,964.6 883.2,972.6 884.4,967.2 885.7,975.0 887.0,971.7 888.2,965.4 889.5,978.5 890.7,986.7 892.0,986.7 893.3,984.4 894.5,985.5 895.8,984.5 897.0,974.2 898.3,969.6 899.6,980.2 900.8,986.7 902.1,986.7 903.3,983.5 904.6,979.5 905.9,971.6 907.1,979.2 908.4,981.6 909.6,972.0 910.9,968.5 912.2,974.0 913.4,980.2 914.7,944.1 915.9,944.1 917.2,944.1 918.5,944.1 919.7,944.1 921.0,944.1 922.2,944.1 923.5,944.1 924.8,944.1 926.0,944.1 927.3,944.1 928.5,944.1 929.8,944.1 931.1,944.1 932.3,944.1 933.6,944.1 934.8,944.1 936.1,960.5 937.4,965.8 938.6,957.0 939.9,950.7 941.1,957.5 942.4,961.4 943.7,961.7 944.9,965.5 946.2,967.0 947.4,961.2 948.7,962.4 950.0,968.5 951.2,960.6 952.5,959.8 953.7,964.4 955.0,964.7 956.3,966.5 957.5,966.9 958.8,972.9 960.0,969.8 961.3,966.3 962.6,965.2 963.8,961.0 965.1,958.5 966.3,966.6 967.6,966.8 968.9,963.4 970.1,960.7 971.4,965.5 972.6,980.9 973.9,983.5 975.2,982.6 976.4,973.5 977.7,973.5 978.9,972.2 980.2,960.9 981.5,964.4 982.7,971.6 984.0,977.3 985.2,964.2 986.5,965.0 987.8,964.7 989.0,956.9 990.3,962.3 991.5,959.9 992.8,958.3 994.1,963.2 995.3,958.7 996.6,966.1 997.8,963.4 999.1,952.1 1000.4,948.3 1001.6,944.8 1002.9,949.2 1004.1,959.8 1005.4,955.0 1006.7,959.2 1007.9,964.5 1009.2,967.6 1010.4,970.1 1011.7,950.2 1013.0,959.8 1014.2,960.2 1015.5,956.5 1016.7,969.2 1018.0,970.1 1019.3,967.8 1020.5,965.5 1021.8,960.9 1023.0,961.3 1024.3,965.1 1025.6,967.2 1026.8,960.4 1028.1,953.3 1029.3,960.5 1030.6,965.8 1031.9,963.7 1033.1,957.7 1034.4,958.1 1035.6,968.4 1036.9,967.5 1038.2,968.0 1039.4,974.8 1040.7,982.4 1041.9,975.6 1043.2,969.3 1044.5,971.9 1045.7,976.9 1047.0,980.1 1048.2,980.8 1049.5,985.2 1050.8,986.7 1052.0,985.4 1053.3,975.4 1054.5,975.5 1055.8,973.8 1057.1,964.7 1058.3,965.0 1059.6,972.7 1060.8,970.8 1062.1,963.7 1063.4,954.6 1064.6,955.5 1065.9,960.2 1067.1,952.3 1068.4,946.9 1069.7,959.6 1070.9,966.5 1072.2,958.5 1073.4,962.3 1074.7,973.5 1076.0,975.8 1077.2,965.0 1078.5,953.9 1079.7,954.2 1081.0,954.3 1082.3,954.7 1083.5,955.5 1084.8,947.8 1086.0,949.7 1087.3,951.8 1088.6,945.5 1089.8,935.5 1091.1,935.5 1092.3,948.4 1093.6,947.8 1094.9,940.8 1096.1,935.5 1097.4,935.5 1098.6,940.1 1099.9,943.5 1101.2,943.5 1102.4,943.7 1103.7,950.2 1104.9,951.9 1106.2,953.2 1107.5,965.3 1108.7,963.1 1110.0,957.0 1111.2,951.6 1112.5,524.4 1113.8,512.3 1115.0,970.2 1116.3,964.1 1117.5,961.8 1118.8,961.8 1120.1,951.0 1121.3,949.7 1122.6,949.4 1123.8,946.0 1125.1,947.7 1126.4,953.4 1127.6,962.1 1128.9,959.2 1130.1,961.6 1131.4,964.9 1132.7,960.2 1133.9,964.9 1135.2,977.9 1136.4,973.0 1137.7,959.2 1139.0,962.1 1140.2,960.8 1141.5,958.3 1142.7,965.9 1144.0,964.9 1145.3,967.2 1146.5,969.0 1147.8,953.4 1149.0,955.2 1150.3,966.5 1151.6,964.9 1152.8,961.0 1154.1,964.6 1155.3,970.0 1156.6,965.9 1157.9,963.5 1159.1,969.1 1160.4,972.5 1161.6,962.2 1162.9,963.6 1164.2,969.5 1165.4,957.5 1166.7,960.9 1167.9,968.7 1169.2,961.5 1170.5,958.0 1171.7,962.8 1173.0,966.7 1174.2,960.2 1175.5,962.5 1176.8,963.7 1178.0,959.8 1179.3,964.8 1180.5,972.5 1181.8,967.9 1183.1,959.3 1184.3,962.7 1185.6,967.0 1186.8,966.8 1188.1,969.4 1189.4,964.4 1190.6,952.6 1191.9,947.3 1193.1,955.5 1194.4,957.7 1195.7,949.7 1196.9,953.6 1198.2,953.0 1199.4,952.3 1200.7,945.6 1202.0,946.6 1203.2,950.5 1204.5,939.5 1205.7,939.6 1207.0,947.6 1208.3,946.5 1209.5,950.1 1210.8,951.4 1212.0,946.7 1213.3,952.8 1214.6,954.7 1215.8,954.3 1217.1,965.5 1218.3,954.3 1219.6,955.4 1220.9,964.7 1222.1,957.6 1223.4,959.3 1224.6,954.9 1225.9,955.9 1227.2,964.2 1228.4,963.8 1229.7,963.9 1230.9,958.4 1232.2,962.1 1233.5,963.8 1234.7,962.5 1236.0,967.6 1237.2,965.0 1238.5,969.9 1239.8,970.9 1241.0,967.6 1242.3,970.7 1243.5,976.4 1244.8,974.3 1246.1,955.8 1247.3,956.6 1248.6,965.2 1249.8,972.9 1251.1,967.5 1252.4,957.9 1253.6,964.6 1254.9,960.7 1256.1,957.7 1257.4,963.9 1258.7,962.8 1259.9,961.0 1261.2,955.6 1262.4,956.7 1263.7,962.6 1265.0,962.3 1266.2,965.1 1267.5,966.6 1268.7,967.7 1270.0,970.7 1271.3,968.9 1272.5,959.7 1273.8,958.4 1275.0,960.1 1276.3,959.5 1277.6,962.6 1278.8,966.6 1280.1,967.6 1281.3,971.9 1282.6,970.4 1283.9,972.4 1285.1,971.1 1286.4,961.0 1287.6,956.8 1288.9,967.2 1290.2,959.8 1291.4,947.2 1292.7,958.2 1293.9,968.1 1295.2,965.6 1296.5,960.3 1297.7,963.3 1299.0,965.9 1300.2,964.0 1301.5,958.1 1302.8,951.0 1304.0,958.6 1305.3,969.7 1306.5,966.8 1307.8,961.7 1309.1,975.6 1310.3,974.3 1311.6,951.4 1312.8,947.0 1314.1,947.1 1315.4,952.8 1316.6,959.0 1317.9,966.0 1319.1,977.2 1320.4,975.8 1321.7,981.8 1322.9,976.5 1324.2,967.8 1325.4,970.7 1326.7,965.0 1328.0,967.0 1329.2,965.4 1330.5,969.5 1331.7,977.4 1333.0,976.7 1334.3,970.8 1335.5,967.3 1336.8,972.1 1338.0,970.2 1339.3,963.1 1340.6,959.0 1341.8,963.8 1343.1,969.2 1344.3,965.5 1345.6,961.1 1346.9,966.8 1348.1,962.8 1349.4,963.5 1350.6,963.9 1351.9,955.5 1353.2,964.5 1354.4,965.0 1355.7,958.7 1356.9,965.3 1358.2,963.9 1359.5,957.5 1360.7,954.3 1362.0,958.8 1363.2,961.8 1364.5,952.6 1365.8,947.8 1367.0,954.7 1368.3,955.4 1369.5,951.1 1370.8,956.8 1372.1,967.0 1373.3,972.8 1374.6,966.5 1375.8,966.6 1377.1,975.4 1378.4,979.3 1379.6,964.9 1380.9,949.7 1382.1,954.7 1383.4,958.3 1384.7,953.6 1385.9,968.0 1387.2,968.3 1388.4,960.1 1389.7,963.8 1391.0,964.9 1392.2,972.6 1393.5,966.8 1394.7,960.1 1396.0,967.0 1397.3,970.3 1398.5,974.5 1399.8,969.5 1401.0,963.3 1402.3,966.7 1403.6,966.8 1404.8,968.8 1406.1,964.1 1407.3,961.6 1408.6,966.0 1409.9,974.4 1411.1,980.7 1412.4,975.4 1413.6,464.0 1414.9,472.6 1416.2,460.6 1417.4,977.4 1418.7,977.3 1419.9,972.3 1421.2,969.3 1422.5,972.1 1423.7,974.1 1425.0,969.5 1426.2,973.4 1427.5,977.2 1428.8,970.6 1430.0,966.9 1431.3,976.6 1432.5,975.4 1433.8,966.4 1435.1,961.3 1436.3,959.5 1437.6,956.9 1438.8,953.7 1440.1,953.7 1441.4,954.3 1442.6,953.0 1443.9,945.8 1445.1,943.2 1446.4,948.6 1447.7,949.7 1448.9,947.2 1450.2,948.1 1451.4,951.3 1452.7,946.2 1454.0,950.3 1455.2,947.1 1456.5,941.5 1457.7,950.5 1459.0,954.5 1460.3,959.8 1461.5,959.7 1462.8,958.8 1464.0,961.3 1465.3,959.7 1466.6,956.1 1467.8,952.8 1469.1,953.8 1470.3,956.0 1471.6,960.4 1472.9,957.1 1474.1,955.8 1475.4,957.2 1476.6,956.5 1477.9,957.5 1479.2,957.1 1480.4,946.9 1481.7,947.8 1482.9,956.1 1484.2,959.5 1485.5,957.7 1486.7,959.1 1488.0,967.9 1489.2,971.3 1490.5,966.4 1491.8,966.6 1493.0,956.6 1494.3,945.2 1495.5,948.2 1496.8,965.1 1498.1,964.0 1499.3,957.9 1500.6,967.5 1501.8,965.2 1503.1,961.4 1504.4,966.1 1505.6,969.3 1506.9,959.7 1508.1,963.0 1509.4,967.8 1510.7,965.8 1511.9,970.3 1513.2,971.6 1514.4,962.0 1515.7,951.9 1517.0,959.8 1518.2,966.9 1519.5,964.5 1520.7,963.2 1522.0,961.6 1523.3,957.4 1524.5,960.3 1525.8,973.7 1527.0,966.2 1528.3,960.1 1529.6,967.9 1530.8,970.5 1532.1,970.2 1533.3,970.3 1534.6,978.7 1535.9,974.3 1537.1,966.6 1538.4,968.5 1539.6,964.4 1540.9,971.2 1542.2,972.7 1543.4,966.7 1544.7,964.7 1545.9,967.6 1547.2,974.8 1548.5,973.3 1549.7,964.7 1551.0,962.9 1552.2,977.0 1553.5,979.3 1554.8,970.8 1556.0,969.0 1557.3,969.8 1558.5,982.6 1559.8,978.7 1561.1,969.7 1562.3,966.5 1563.6,970.4 1564.8,964.1 1566.1,966.7 1567.4,980.0 1568.6,982.6 1569.9,978.6 1571.1,976.9 1572.4,985.5 1573.7,978.5 1574.9,972.8 1576.2,968.0 1577.4,962.3 1578.7,972.1 1580.0,977.0 1581.2,971.5 1582.5,976.0 1583.7,961.1 1585.0,953.3 1586.3,969.0 1587.5,962.7 1588.8,964.1 1590.0,971.1 1591.3,963.9 1592.6,964.1 1593.8,965.0 1595.1,963.7 1596.3,972.4 1597.6,969.0 1598.9,959.1 1600.1,959.3 1601.4,955.1 1602.6,961.5 1603.9,969.6 1605.2,969.1 1606.4,967.1 1607.7,959.9 1608.9,952.8 1610.2,954.1 1611.5,958.0 1612.7,953.9 1614.0,962.3 1615.2,971.8 1616.5,956.5 1617.8,956.4 1619.0,970.0 1620.3,965.6 1621.5,957.0 1622.8,951.3 1624.1,957.3 1625.3,969.8 1626.6,963.0 1627.8,957.9 1629.1,966.6 1630.4,961.1 1631.6,961.3 1632.9,969.2 1634.1,958.9 1635.4,963.6 1636.7,960.7 1637.9,949.2 1639.2,966.0 1640.4,975.6 1641.7,963.4 1643.0,960.4 1644.2,961.2 1645.5,971.3 1646.7,968.7 1648.0,964.8 1649.3,974.4 1650.5,975.0 1651.8,966.9 1653.0,964.5 1654.3,970.6 1655.6,973.5 1656.8,977.4 1658.1,969.1 1659.3,967.6 1660.6,975.0 1661.9,965.6 1663.1,958.7 1664.4,962.1 1665.6,958.0 1666.9,955.0 1668.2,951.7 1669.4,950.3 1670.7,960.3 1671.9,961.7 1673.2,959.2 1674.5,961.6 1675.7,958.6 1677.0,958.8 1678.2,957.5 1679.5,952.4 1680.8,956.1 1682.0,949.5 1683.3,937.2 1684.5,935.7 1685.8,935.5 1687.1,935.5 1688.3,938.0 1689.6,935.6 1690.8,941.3 1692.1,949.2 1693.4,950.8 1694.6,953.4 1695.9,957.0 1697.1,942.8 1698.4,951.2 1699.7,969.3 1700.9,963.3 1702.2,948.5 1703.4,951.1 1704.7,956.0 1706.0,959.1 1707.2,964.7 1708.5,959.2 1709.7,971.4 1711.0,978.3 1712.3,973.1 1713.5,968.0 1714.8,962.8 1716.0,464.0 1717.3,472.6 1718.6,460.6 1719.8,967.3 1721.1,957.7 1722.3,960.2 1723.6,970.5 1724.9,967.5 1726.1,952.1 1727.4,955.5 1728.6,964.9 1729.9,967.4 1731.2,958.8 1732.4,961.8 1733.7,971.4 1734.9,968.3 1736.2,952.8 1737.5,952.0 1738.7,958.1 1740.0,960.0 1741.2,964.5 1742.5,956.2 1743.8,942.2 1745.0,945.8 1746.3,959.8 1747.5,963.8 1748.8,953.3 1750.1,950.0 1751.3,958.3 1752.6,954.3 1753.8,947.7 1755.1,951.8 1756.4,965.8 1757.6,963.3 1758.9,962.1 1760.1,960.7 1761.4,960.3 1762.7,957.1 1763.9,960.8 1765.2,960.7 1766.4,952.0 1767.7,947.5 1769.0,958.4 1770.2,961.6 1771.5,955.6 1772.7,959.3 1774.0,964.5 1775.3,972.8 1776.5,966.6 1777.8,951.9 1779.0,962.9 1780.3,970.8 1781.6,960.6 1782.8,953.8 1784.1,962.3 1785.3,965.6 1786.6,967.0 1787.9,965.5 1789.1,957.2 1790.4,960.3 1791.6,960.7 1792.9,968.2 1794.2,955.3 1795.4,950.1 1796.7,960.7 1797.9,972.1 1799.2,962.8 1800.5,959.9 1801.7,966.1 1803.0,958.3 1804.2,953.0 1805.5,957.8 1806.8,960.6 1808.0,958.6 1809.3,960.0 1810.5,973.4 1811.8,973.9 1813.1,966.5 1814.3,965.3 1815.6,967.4 1816.8,967.8 1818.1,962.3 1819.4,962.6 1820.6,969.1 1821.9,971.1 1823.1,962.5 1824.4,945.3 1825.7,946.0 1826.9,953.8 1828.2,950.0 1829.4,947.3 1830.7,958.0 1832.0,974.9 1833.2,964.9 1834.5,958.8 1835.7,962.7 1837.0,963.1 1838.3,955.5 1839.5,944.5 1840.8,957.4 1842.0,973.2 1843.3,959.1 1844.6,963.8 1845.8,965.2 1847.1,958.3 1848.3,960.6 1849.6,959.1 1850.9,957.4 1852.1,958.4 1853.4,950.8 1854.6,956.8 1855.9,960.3 1857.2,955.5 1858.4,957.9 1859.7,954.3 1860.9,950.6 1862.2,953.8 1863.5,951.0 1864.7,959.5 1866.0,963.9 1867.2,957.8 1868.5,968.5 1869.8,962.7 1871.0,955.4 1872.3,964.8 1873.5,957.5 1874.8,950.9 1876.1,954.9 1877.3,957.8 1878.6,962.0 1879.8,969.3 1881.1,977.5 1882.4,970.7 1883.6,957.8 1884.9,964.1 1886.1,966.2 1887.4,963.6" stroke="#ff8000"/></g><rect x="73" y="327" width="1813" height="29" fill="#008000"/><rect x="73" y="333" width="1813" height="4" fill="#c0c0c0"/><rect x="73" y="344" width="1813" height="5" fill="#c0c0c0"/><rect x="1886" y="327" width="5" height="29" fill="#a0a0a0"/><rect x="1886" y="327" width="1" height="29" fill="#c8c8c8"/><rect x="201" y="349" width="8" height="7" fill="#ffff00"/><rect x="503" y="349" width="8" height="7" fill="#ffff00"/><rect x="806" y="349" width="7" height="7" fill="#ffff00"/><rect x="918" y="349" width="7" height="7" fill="#ffff00"/><rect x="927" y="349" width="10" height="7" fill="#ffff00"/><rect x="938" y="349" width="15" height="7" fill="#ffff00"/><rect x="964" y="349" width="10" height="7" fill="#ffff00"/><rect x="1108" y="349" width="8" height="7" fill="#ffff00"/><rect x="1410" y="349" width="8" height="7" fill="#ffff00"/><rect x="1713" y="349" width="7" height="7" fill="#ffff00"/><rect x="918" y="337" width="5" height="7" fill="#ffffff"/><rect x="927" y="337" width="6" height="7" fill="#ffffff"/><rect x="72" y="326" width="1821" height="1" fill="#000"/><rect x="72" y="326" width="1" height="662" fill="#000"/><rect x="1891" y="326" width="2" height="662" fill="#000"/><rect x="72" y="987" width="1821" height="1" fill="#000"/><path d="M69 987.5H72 M67 958.5H72 M69 929.5H72 M69 901.5H72 M69 872.5H72 M67 843.5H72 M69 814.5H72 M69 786.5H72 M69 757.5H72 M67 728.5H72 M69 699.5H72 M69 671.5H72 M69 642.5H72 M67 613.5H72 M69 584.5H72 M69 556.5H72 M69 527.5H72 M67 498.5H72 M69 469.5H72 M69 441.5H72 M69 412.5H72 M67 383.5H72 M69 354.5H72 M73.5 988V994 M149.5 988V994 M224.5 988V994 M300.5 988V994 M375.5 988V994 M451.5 988V994 M527.5 988V994 M602.5 988V994 M678.5 988V994 M753.5 988V994 M829.5 988V994 M904.5 988V994 M980.5 988V994 M1056.5 988V994 M1131.5 988V994 M1207.5 988V994 M1282.5 988V994 M1358.5 988V994 M1434.5 988V994 M1509.5 988V994 M1585.5 988V994 M1660.5 988V994 M1736.5 988V994 M1811.5 988V994 M1887.5 988V994" stroke="#000" stroke-width="1" fill="none" shape-rendering="crispEdges"/></svg><div class="t" style="right:1854px;text-align:right;top:953.79px;font-size:11px;color:#000;">0</div><div class="t" style="right:1854px;text-align:right;top:838.79px;font-size:11px;color:#000;">20</div><div class="t" style="right:1854px;text-align:right;top:723.79px;font-size:11px;color:#000;">40</div><div class="t" style="right:1854px;text-align:right;top:608.79px;font-size:11px;color:#000;">60</div><div class="t" style="right:1854px;text-align:right;top:493.79px;font-size:11px;color:#000;">80</div><div class="t" style="right:1854px;text-align:right;top:378.79px;font-size:11px;color:#000;">100</div><div class="t" style="left:-227.0px;width:600px;text-align:center;top:995.69px;font-size:11px;color:#000;">00:00</div><div class="t" style="left:-0.25px;width:600px;text-align:center;top:995.69px;font-size:11px;color:#000;">03:00</div><div class="t" style="left:226.5px;width:600px;text-align:center;top:995.69px;font-size:11px;color:#000;">06:00</div><div class="t" style="left:453.25px;width:600px;text-align:center;top:995.69px;font-size:11px;color:#000;">09:00</div><div class="t" style="left:680.0px;width:600px;text-align:center;top:995.69px;font-size:11px;color:#000;">12:00</div><div class="t" style="left:906.75px;width:600px;text-align:center;top:995.69px;font-size:11px;color:#000;">15:00</div><div class="t" style="left:1133.5px;width:600px;text-align:center;top:995.69px;font-size:11px;color:#000;">18:00</div><div class="t" style="left:1360.25px;width:600px;text-align:center;top:995.69px;font-size:11px;color:#000;">21:00</div><div class="t" style="left:1587.0px;width:600px;text-align:center;top:995.69px;font-size:11px;color:#000;">00:00</div><div style="left:1915px;top:88px;width:2px;height:947px;background:#6a6a6a;"></div>
</body></html>
